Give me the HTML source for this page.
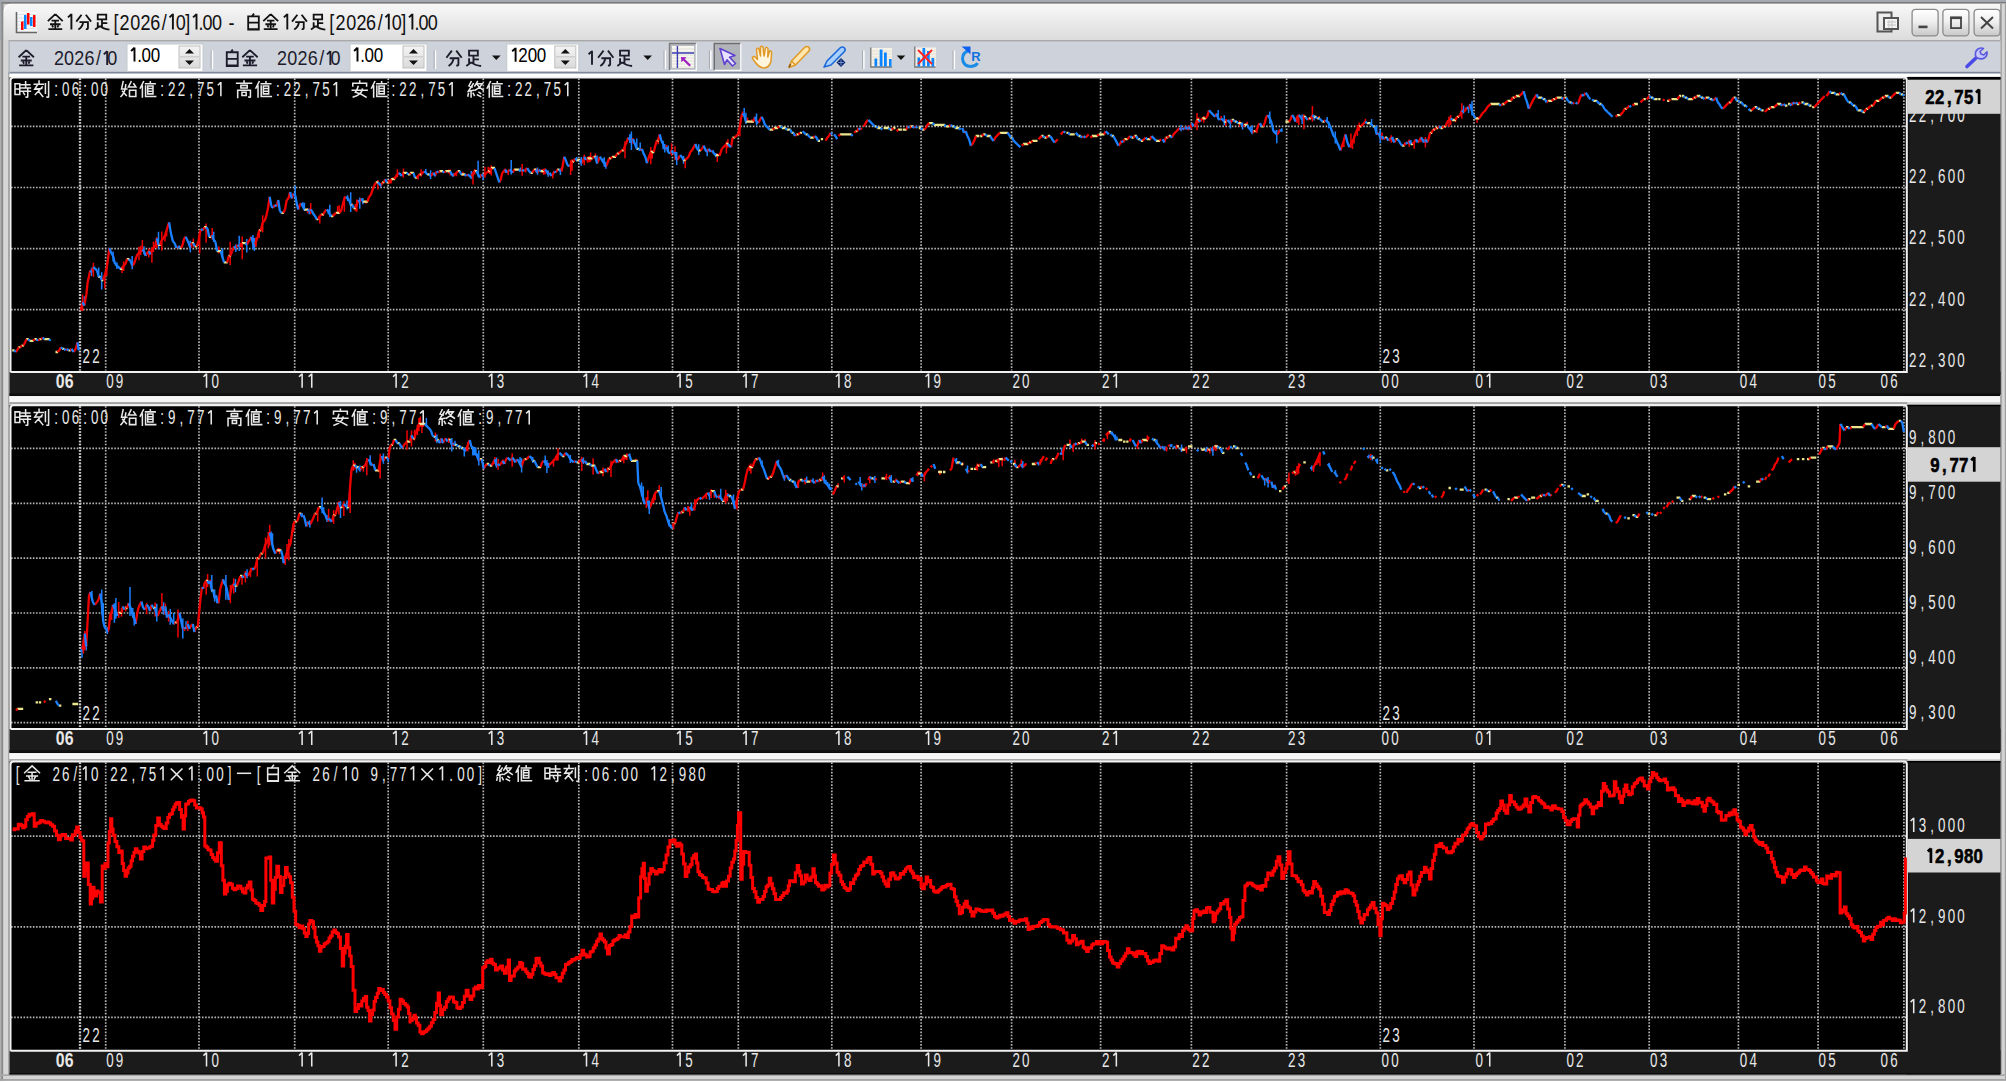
<!DOCTYPE html><html><head><meta charset="utf-8"><style>html,body{margin:0;padding:0;background:#c9c9c9;overflow:hidden}svg{display:block}</style></head><body>
<svg width="2006" height="1084" viewBox="0 0 2006 1084">
<defs>
<linearGradient id="tb" x1="0" y1="0" x2="0" y2="1"><stop offset="0" stop-color="#f8f8f8"/><stop offset="1" stop-color="#dcdcdc"/></linearGradient>
<linearGradient id="btn" x1="0" y1="0" x2="0" y2="1"><stop offset="0" stop-color="#ffffff"/><stop offset="0.45" stop-color="#f0f0f0"/><stop offset="1" stop-color="#c8c8c8"/></linearGradient>
<linearGradient id="spin" x1="0" y1="0" x2="0" y2="1"><stop offset="0" stop-color="#f4f4f4"/><stop offset="1" stop-color="#dadada"/></linearGradient>
<path id="g37329" d="M8 1L1 7.5M8 1L15 7.5M4.5 7H11.5M3 10.5H13M8 7V15M5 11.5L6 13.5M11 11.5L10 13.5M1.5 15H14.5"/>
<path id="g20998" d="M6 1.5L1 8M10 1.5L15 8M4 8.5H12V14Q12 15.5 10 15M7.5 8.5Q7 13 3 15.5"/>
<path id="g36275" d="M4 1.5H12V6H4ZM8 6V13.5M8 9.5H13M4 8.5V13.5M1.5 15.5Q5 13 6 12M6 12Q9 15 15 15.5"/>
<path id="g30333" d="M8.5 0.5L6.5 3M3 3H13V15.5H3ZM3 9H13M3 15H13"/>
<path id="g26178" d="M1 3H5.5V13H1ZM1 8H5.5M7 4H15M11 1V7M6.5 7H15.5M7 10H15.5M13 8V15Q13 16 11.5 15.5M9 11.5L10 13"/>
<path id="g21051" d="M1 3.5H9.5M5.5 0.5V3.5M4 4L1.5 8L8 7.5M8.5 6L2 13M5 10L9 15M11.5 3V12M14.5 1V15Q14.5 16 13 15.5"/>
<path id="g22987" d="M3 1L1.5 8H6.5M5.5 4Q5 11 1 15M2.5 10L6 14M10.5 1L8 6H15L13 3M9 9H15V15H9Z"/>
<path id="g20516" d="M4 1L1 7M3 5V15.5M6 3H15M10.5 1V3M8 5H13V12.5H8ZM8 7.5H13M8 10H13M6 5V15H15.5"/>
<path id="g39640" d="M8 0.5V2M1 2.5H15M5 4.5H11V7H5ZM2 9V16M2 9H14V15.5Q14 16 12.5 15.5M6 11H10V14H6Z"/>
<path id="g23433" d="M8 0.5V2.5M1.5 5V2.5H14.5V5M6.5 5.5Q5.5 9 4 11Q9 12 14 15.5M10.5 8Q10 13 2 15.5M1 9H15"/>
<path id="g32066" d="M4 1L2 5L5 6M6 3L1.5 10L6.5 9M4 10V15.5M1.5 12L1 14.5M6 12L7 14M10 1L7.5 5M9.5 3H14.5Q12 7 8 9M10 4Q12 7 15.5 9M11.5 11L13 12M10 13.5L13 15"/>
<path id="g215" d="M3 4L13 14M13 4L3 14"/>
<path id="g65293" d="M2 8H14"/>
</defs>
<rect x="0" y="0" width="2006" height="1084" fill="#d4d4d4"/>
<rect x="0" y="0" width="2006" height="1.8" fill="#a6aab2"/>
<rect x="0" y="1.8" width="2006" height="2" fill="#7c7c7c"/>
<rect x="0" y="0" width="1.2" height="40" fill="#a2a6ae"/>
<rect x="0" y="40" width="1.2" height="1044" fill="#b0b0b0"/>
<rect x="1.2" y="1.8" width="2.2" height="1080" fill="#8a8a8a"/>
<path d="M3.6 12 Q3.6 3.8 12 3.8 H2006 V40 H3.6Z" fill="url(#tb)"/>
<path d="M4.5 11 Q5 5 11 4.6" stroke="#ffffff" stroke-width="1.5" fill="none"/>
<rect x="3.4" y="40" width="4.8" height="1040" fill="#d6d6d6"/>
<rect x="8.0" y="73" width="1.4" height="1003" fill="#a8a8a8"/>
<rect x="2000" y="3.8" width="2.2" height="1076" fill="#a8a8a8"/>
<rect x="2002.2" y="3.8" width="2.6" height="1076" fill="#d4d4d4"/>
<rect x="2004.8" y="3.8" width="1.2" height="1076" fill="#a0a0a0"/>
<rect x="0" y="1074.3" width="2006" height="1.8" fill="#a8a8a8"/>
<rect x="3.4" y="1076.1" width="2001.4" height="3" fill="#d4d4d4"/>
<rect x="0" y="1079.1" width="2006" height="1.8" fill="#a0a0a0"/>
<rect x="0" y="1080.9" width="2006" height="3.1" fill="#ffffff"/>
<g>
<rect x="16" y="12" width="21" height="21" fill="#ffffff" opacity="0.6"/>
<path d="M17.5 14.5H36.5M17.5 18H36.5M17.5 21.5H36.5M17.5 25H36.5M17.5 28.5H36.5" stroke="#d8e0e8" stroke-width="1"/>
<path d="M16.5 12V32.5H37" stroke="#666" stroke-width="1.6" fill="none"/>
<path d="M21 22L23.5 21V30L21 30Z" fill="#f00"/>
<path d="M24 15H26.5V29H24Z" fill="#0a84ff"/>
<path d="M27 13H29.5V24.5H27Z" fill="#f00"/>
<path d="M30 17H32.5V26H30Z" fill="#0a84ff"/>
<path d="M33 15H35.5V27H33Z" fill="#f00"/>
</g>
<text transform="translate(0 29.60) scale(0.8 1)" x="144.88 155.62 169.06 181.88 193.94 205.38 226.00 234.81 251.25 259.38 271.12 289.50 414.75 425.50 438.94 451.75 463.81 475.25 495.88 504.69 521.12 529.25 541.00" text-anchor="middle" font-family="Liberation Sans" font-size="22.5" fill="#111111">[2026/0].00-[2026/0].00</text>
<g fill="none" stroke="#111111" stroke-width="1.7"><use href="#g37329" transform="translate(46.80 13.10) scale(1.062)"/><use href="#g20998" transform="translate(75.20 13.10) scale(1.062)"/><use href="#g36275" transform="translate(93.50 13.10) scale(1.062)"/><use href="#g30333" transform="translate(245.00 13.10) scale(1.062)"/><use href="#g37329" transform="translate(262.20 13.10) scale(1.062)"/><use href="#g20998" transform="translate(291.00 13.10) scale(1.062)"/><use href="#g36275" transform="translate(309.40 13.10) scale(1.062)"/></g>
<path d="M71.40 13.85V29.60M71.40 14.15L68.00 17.35" stroke="#111111" stroke-width="1.9" fill="none"/>
<path d="M172.90 13.85V29.60M172.90 14.15L169.50 17.35" stroke="#111111" stroke-width="1.9" fill="none"/>
<path d="M196.50 13.85V29.60M196.50 14.15L193.10 17.35" stroke="#111111" stroke-width="1.9" fill="none"/>
<path d="M287.30 13.85V29.60M287.30 14.15L283.90 17.35" stroke="#111111" stroke-width="1.9" fill="none"/>
<path d="M388.80 13.85V29.60M388.80 14.15L385.40 17.35" stroke="#111111" stroke-width="1.9" fill="none"/>
<path d="M412.40 13.85V29.60M412.40 14.15L409.00 17.35" stroke="#111111" stroke-width="1.9" fill="none"/>
<g fill="none" stroke="#555" stroke-width="2">
<rect x="1877.5" y="12.5" width="14" height="19"/>
</g>
<rect x="1884" y="18" width="14" height="11" fill="#f4f4f4" stroke="#555" stroke-width="2"/>
<path d="M1887 22H1896M1887 25H1896M1889 20V28M1892 20V28" stroke="#bbb" stroke-width="0.8"/>
<rect x="1912.1" y="9.3" width="26" height="26.5" rx="3.5" fill="url(#btn)" stroke="#8a8a8a" stroke-width="1.3"/>
<rect x="1942.9" y="9.3" width="26" height="26.5" rx="3.5" fill="url(#btn)" stroke="#8a8a8a" stroke-width="1.3"/>
<rect x="1974.1" y="9.3" width="26" height="26.5" rx="3.5" fill="url(#btn)" stroke="#8a8a8a" stroke-width="1.3"/>
<rect x="1918.5" y="25.6" width="9" height="2.6" fill="#444"/>
<rect x="1951" y="17.7" width="10" height="10.4" fill="none" stroke="#444" stroke-width="1.8"/><rect x="1950.2" y="16.5" width="11.6" height="2.6" fill="#444"/>
<path d="M1981 17L1993 28.5M1993 17L1981 28.5" stroke="#444" stroke-width="2"/>
<rect x="8.5" y="40" width="1992" height="33.5" fill="#ced2da"/>
<rect x="8.5" y="40" width="1992" height="1.4" fill="#a9a9a9"/>
<rect x="8.5" y="71.8" width="1992" height="2" fill="#7c8898"/>
<rect x="8.5" y="40" width="1.3" height="33" fill="#b0b4ba"/>
<g fill="none" stroke="#1c1c2c" stroke-width="1.7"><use href="#g37329" transform="translate(17.50 49.00) scale(1.094)"/></g>
<text transform="translate(0 64.90) scale(0.9 1)" x="65.44 76.78 88.11 99.44 109.56 124.67" text-anchor="middle" font-family="Liberation Sans" font-size="20" fill="#1c1c2c">2026/0</text>
<path d="M107.20 50.90V64.90M107.20 51.20L103.80 54.40" stroke="#1c1c2c" stroke-width="1.9" fill="none"/>
<rect x="127" y="44" width="76" height="27.5" fill="#fff" stroke="#c4c8ce" stroke-width="1"/>
<rect x="179" y="46" width="21" height="22" fill="url(#spin)" stroke="#c0c0c0" stroke-width="1"/>
<path d="M180 56.8H199" stroke="#c8c8c8" stroke-width="1.2"/>
<path d="M185 53.5L189.5 49L194 53.5Z" fill="#111"/>
<path d="M185 60.5L189.5 65L194 60.5Z" fill="#111"/>
<text transform="translate(0 61.50) scale(0.85 1)" x="164.12 172.00 182.82" text-anchor="middle" font-family="Liberation Sans" font-size="20" fill="#000">.00</text>
<path d="M134.50 47.50V61.50M134.50 47.80L131.10 51.00" stroke="#000" stroke-width="1.9" fill="none"/>
<rect x="210.6" y="50.5" width="1.2" height="18.5" fill="#a8acb4"/><rect x="211.79999999999998" y="50.5" width="1.4" height="18.5" fill="#ffffff"/>
<g fill="none" stroke="#1c1c2c" stroke-width="1.7"><use href="#g30333" transform="translate(223.50 49.00) scale(1.094)"/><use href="#g37329" transform="translate(241.20 49.00) scale(1.094)"/></g>
<text transform="translate(0 64.90) scale(0.9 1)" x="313.44 324.78 336.11 347.44 357.56 372.67" text-anchor="middle" font-family="Liberation Sans" font-size="20" fill="#1c1c2c">2026/0</text>
<path d="M330.40 50.90V64.90M330.40 51.20L327.00 54.40" stroke="#1c1c2c" stroke-width="1.9" fill="none"/>
<rect x="350" y="44" width="77" height="27.5" fill="#fff" stroke="#c4c8ce" stroke-width="1"/>
<rect x="403" y="46" width="21" height="22" fill="url(#spin)" stroke="#c0c0c0" stroke-width="1"/>
<path d="M404 56.8H423" stroke="#c8c8c8" stroke-width="1.2"/>
<path d="M409 53.5L413.5 49L418 53.5Z" fill="#111"/>
<path d="M409 60.5L413.5 65L418 60.5Z" fill="#111"/>
<text transform="translate(0 61.50) scale(0.85 1)" x="426.47 434.35 445.18" text-anchor="middle" font-family="Liberation Sans" font-size="20" fill="#000">.00</text>
<path d="M357.50 47.50V61.50M357.50 47.80L354.10 51.00" stroke="#000" stroke-width="1.9" fill="none"/>
<rect x="433.6" y="50.5" width="1.2" height="18.5" fill="#a8acb4"/><rect x="434.8" y="50.5" width="1.4" height="18.5" fill="#ffffff"/>
<g fill="none" stroke="#1c1c2c" stroke-width="1.7"><use href="#g20998" transform="translate(445.30 49.00) scale(1.094)"/><use href="#g36275" transform="translate(464.70 49.00) scale(1.094)"/></g>
<path d="M492 55.5H500.6L496.3 60Z" fill="#111"/>
<rect x="506.8" y="44" width="71.99999999999994" height="27.5" fill="#fff" stroke="#c4c8ce" stroke-width="1"/>
<rect x="554.8" y="46" width="21" height="22" fill="url(#spin)" stroke="#c0c0c0" stroke-width="1"/>
<path d="M555.8 56.8H574.8" stroke="#c8c8c8" stroke-width="1.2"/>
<path d="M560.8 53.5L565.3 49L569.8 53.5Z" fill="#111"/>
<path d="M560.8 60.5L565.3 65L569.8 60.5Z" fill="#111"/>
<text transform="translate(0 61.80) scale(0.85 1)" x="615.29 626.35 637.06" text-anchor="middle" font-family="Liberation Sans" font-size="20" fill="#000">200</text>
<path d="M515.60 47.80V61.80M515.60 48.10L512.20 51.30" stroke="#000" stroke-width="1.9" fill="none"/>
<g fill="none" stroke="#1c1c2c" stroke-width="1.7"><use href="#g20998" transform="translate(597.00 49.00) scale(1.094)"/><use href="#g36275" transform="translate(615.70 49.00) scale(1.094)"/></g>
<path d="M592.00 50.80V64.80M592.00 51.10L588.60 54.30" stroke="#1c1c2c" stroke-width="1.9" fill="none"/>
<path d="M643.4 55.5H652.0L647.6999999999999 60Z" fill="#111"/>
<rect x="663.5" y="50.5" width="1.2" height="18.5" fill="#a8acb4"/><rect x="664.7" y="50.5" width="1.4" height="18.5" fill="#ffffff"/>
<rect x="669" y="43" width="27.5" height="27.5" fill="#b8bcc2"/>
<path d="M669.5 70V43.5H696" stroke="#7a7a7a" stroke-width="1.4" fill="none"/><path d="M670 70.3H696.3V43.5" stroke="#ffffff" stroke-width="1.2" fill="none"/>
<rect x="672" y="46" width="22" height="22" fill="#f8f8f0"/>
<path d="M672 49H694M672 52H694M672 55H694M672 58H694M672 61H694M672 64H694M672 67H694" stroke="#d8d8d0" stroke-width="0.8"/>
<path d="M677.4 46V68M672 53H694" stroke="#3c3cb4" stroke-width="1.4"/>
<path d="M681 57L686.5 57.2L684.8 58.9L691 65L689.4 66.6L683.2 60.5L681.4 62.3Z" fill="#a020c0"/>
<rect x="708.9" y="50.5" width="1.2" height="18.5" fill="#a8acb4"/><rect x="710.1" y="50.5" width="1.4" height="18.5" fill="#ffffff"/>
<rect x="713.8" y="43" width="27" height="27.5" fill="#b0b4b8"/>
<path d="M714.3 70V43.5H740.5" stroke="#6e6e6e" stroke-width="1.4" fill="none"/><path d="M714.5 70.3H740.8V43.5" stroke="#ffffff" stroke-width="1.2" fill="none"/>
<path d="M720 48.5L735 55.5L729.5 57.2L735.5 63.5L732.5 66L727 59.8L724.5 64.5Z" fill="#e8e4ff" stroke="#6040d0" stroke-width="1.6" stroke-linejoin="round"/>
<path d="M753 59Q751.5 57.5 753.5 56.5Q755.5 56.5 757.5 59.5L756.5 49.5Q757 47.5 758.8 48.5L760.5 56L760.5 47Q761.5 45.5 763 47L764 56L765.5 48Q767 46.5 768 48.5L767.8 57L769.5 51Q771.5 50.5 771.6 52.5L771 61Q769.8 67.5 764 68Q758.5 68 753 59Z" fill="#fff4dc" stroke="#e09a28" stroke-width="1.5" stroke-linejoin="round"/>
<path d="M789 67.5L791.5 61L804.5 47.5Q807 45.5 809 47.5Q810.5 49.5 808.5 51.5L795.5 65Z" fill="#fde6b0" stroke="#e09a28" stroke-width="1.6" stroke-linejoin="round"/>
<path d="M791.5 61L795.5 65" stroke="#e09a28" stroke-width="1.4"/><path d="M789 67.5L790.5 64" stroke="#8a5a18" stroke-width="1.6"/>
<path d="M824 67L827 61L840 48Q842.5 46 844.5 48Q846 50 844 52L831 65Z" fill="#a8d0ff" stroke="#1c6ad8" stroke-width="1.6" stroke-linejoin="round"/>
<path d="M836.5 62.5L841 58L845.5 62.5L841 67Z" fill="#0a2a70"/><path d="M838 62.5H844M841 59.5V65.5" stroke="#8aa0d0" stroke-width="0.8"/>
<rect x="862" y="50.5" width="1.2" height="18.5" fill="#a8acb4"/><rect x="863.2" y="50.5" width="1.4" height="18.5" fill="#ffffff"/>
<rect x="871" y="48" width="21" height="19" fill="#f6f2ea"/>
<path d="M872 51H892M872 54H892M872 57H892M872 60H892M872 63H892" stroke="#e4dccc" stroke-width="0.8"/>
<path d="M870.8 47.5V67H892" stroke="#777" stroke-width="1.3" fill="none"/>
<path d="M874.5 58.5H877.2V66.5H874.5ZM879.7 49.5H882.5V66.5H879.7ZM884 52.5H886.8V66.5H884ZM889 59H891.6V66.5H889Z" fill="#0a84ff"/>
<path d="M896.7 55.5H905.3000000000001L901.0 60Z" fill="#111"/>
<rect x="915" y="47.5" width="21" height="19.5" fill="#f6f2ea"/>
<path d="M916 51H936M916 54H936M916 57H936M916 60H936M916 63H936" stroke="#e4dccc" stroke-width="0.8"/>
<path d="M914.8 46.5V67H935.5" stroke="#777" stroke-width="1.3" fill="none"/>
<path d="M917.5 57.5H920.2V66.5H917.5ZM922.5 48H925.2V66.5H922.5ZM927 51H929.7V66.5H927ZM931.5 58H934.2V66.5H931.5Z" fill="#0a84ff"/>
<path d="M918.5 50.5L931.5 63.5M931.5 50.5L918.5 63.5" stroke="#ff2020" stroke-width="1.8" stroke-linecap="round"/>
<rect x="952.5" y="50.5" width="1.2" height="18.5" fill="#a8acb4"/><rect x="953.7" y="50.5" width="1.4" height="18.5" fill="#ffffff"/>
<path d="M969 50.5Q962.5 52.5 962.5 59Q963.5 66.5 971 66.5Q976 66 977.5 63" fill="none" stroke="#1a8ce8" stroke-width="3"/>
<path d="M961.5 46.5H970.5V54.5L968 52Z" fill="#1060f0"/>
<text x="976" y="60.5" font-family="Liberation Sans" font-weight="bold" font-size="13" fill="#1070e0" text-anchor="middle">R</text>
<path d="M1967 66.5L1977.5 56.5" stroke="#4a4ae8" stroke-width="3.6" stroke-linecap="round"/>
<path d="M1976 57Q1974 52 1978 49Q1981 47.2 1983.5 48.5L1980 51.5L1981 54L1983.8 55L1987 51.8Q1987.5 55.5 1985 57.5Q1981.5 60 1977.5 58Z" fill="#c8c8ff" stroke="#5a5ae0" stroke-width="1.6" stroke-linejoin="round"/>
<rect x="9.4" y="73.6" width="1991" height="3.8" fill="#ffffff"/>
<rect x="9.4" y="394.3" width="1990.6" height="1.8" fill="#0c0c0c"/>
<rect x="9.4" y="396.1" width="1990.6" height="6" fill="#f6f6f6"/>
<rect x="9.4" y="402.1" width="1898" height="1.9" fill="#a4a4a4"/>
<rect x="9.4" y="751.3" width="1990.6" height="1.8" fill="#0c0c0c"/>
<rect x="9.4" y="753.0999999999999" width="1990.6" height="6" fill="#f6f6f6"/>
<rect x="9.4" y="759.0999999999999" width="1898" height="1.9" fill="#a4a4a4"/>
<rect x="9.5" y="77.4" width="1898.0" height="294.1" fill="#000"/>
<rect x="1907.5" y="77.4" width="93.0" height="317.20000000000005" fill="#1b1b1b"/>
<rect x="1907.5" y="76.9" width="93.0" height="2" fill="#000"/>
<rect x="1907.5" y="77.4" width="1.6" height="317.20000000000005" fill="#0c0c0c"/>
<rect x="9.5" y="371.5" width="1991.0" height="23.100000000000023" fill="#1b1b1b"/>
<path d="M80 78.4V370.5 M105.7 78.4V370.5 M199 78.4V370.5 M294.7 78.4V370.5 M388.2 78.4V370.5 M483.3 78.4V370.5 M578.8 78.4V370.5 M672.5 78.4V370.5 M738.3 78.4V370.5 M831.8 78.4V370.5 M921.1 78.4V370.5 M1011.6 78.4V370.5 M1100.6 78.4V370.5 M1191.4 78.4V370.5 M1286.6 78.4V370.5 M1380.3 78.4V370.5 M1474 78.4V370.5 M1564.9 78.4V370.5 M1649.2 78.4V370.5 M1738.4 78.4V370.5 M1818.1 78.4V370.5 M1903.9 78.4V370.5 M11 126.4H1906 M11 187.5H1906 M11 248.6H1906 M11 309.7H1906" stroke="#b4b4b4" stroke-width="1.7" stroke-dasharray="1.6 1.53" fill="none"/>
<path d="M80 78.4V370.5" stroke="#c8c8c8" stroke-width="2.4" stroke-dasharray="1.6 1.53" fill="none"/>
<path d="M10.5 372.0V80.4Q10.5 77.4 13.5 77.4H1904Q1906.8 77.4 1906.8 80.4V372.0H10.5" stroke="#f2f2f2" stroke-width="2" fill="none"/>
<rect x="9.4" y="393.40000000000003" width="1990.6" height="1.4" fill="#0c0c0c"/>
<text transform="translate(0 387.80) scale(0.78 1)" x="77.18 88.72" text-anchor="middle" font-family="Liberation Sans" font-size="20.3" font-weight="bold" fill="#e8e8e8">06</text>
<text transform="translate(0 387.80) scale(0.66 1)" x="166.54 181.14" text-anchor="middle" font-family="Liberation Sans" font-size="20.3" fill="#e8e8e8">09</text>
<text transform="translate(0 387.80) scale(0.66 1)" x="326.14" text-anchor="middle" font-family="Liberation Sans" font-size="20.3" fill="#e8e8e8">0</text>
<path d="M206.52 373.59V387.80M206.52 373.89L203.42 376.79" stroke="#e8e8e8" stroke-width="1.55" fill="none"/>
<path d="M302.12 373.59V387.80M302.12 373.89L299.02 376.79" stroke="#e8e8e8" stroke-width="1.55" fill="none"/>
<path d="M311.75 373.59V387.80M311.75 373.89L308.65 376.79" stroke="#e8e8e8" stroke-width="1.55" fill="none"/>
<text transform="translate(0 387.80) scale(0.66 1)" x="613.42" text-anchor="middle" font-family="Liberation Sans" font-size="20.3" fill="#e8e8e8">2</text>
<path d="M396.12 373.59V387.80M396.12 373.89L393.02 376.79" stroke="#e8e8e8" stroke-width="1.55" fill="none"/>
<text transform="translate(0 387.80) scale(0.66 1)" x="758.42" text-anchor="middle" font-family="Liberation Sans" font-size="20.3" fill="#e8e8e8">3</text>
<path d="M491.82 373.59V387.80M491.82 373.89L488.72 376.79" stroke="#e8e8e8" stroke-width="1.55" fill="none"/>
<text transform="translate(0 387.80) scale(0.66 1)" x="901.90" text-anchor="middle" font-family="Liberation Sans" font-size="20.3" fill="#e8e8e8">4</text>
<path d="M586.52 373.59V387.80M586.52 373.89L583.42 376.79" stroke="#e8e8e8" stroke-width="1.55" fill="none"/>
<text transform="translate(0 387.80) scale(0.66 1)" x="1043.72" text-anchor="middle" font-family="Liberation Sans" font-size="20.3" fill="#e8e8e8">5</text>
<path d="M680.12 373.59V387.80M680.12 373.89L677.02 376.79" stroke="#e8e8e8" stroke-width="1.55" fill="none"/>
<text transform="translate(0 387.80) scale(0.66 1)" x="1143.72" text-anchor="middle" font-family="Liberation Sans" font-size="20.3" fill="#e8e8e8">7</text>
<path d="M746.12 373.59V387.80M746.12 373.89L743.02 376.79" stroke="#e8e8e8" stroke-width="1.55" fill="none"/>
<text transform="translate(0 387.80) scale(0.66 1)" x="1284.32" text-anchor="middle" font-family="Liberation Sans" font-size="20.3" fill="#e8e8e8">8</text>
<path d="M838.92 373.59V387.80M838.92 373.89L835.82 376.79" stroke="#e8e8e8" stroke-width="1.55" fill="none"/>
<text transform="translate(0 387.80) scale(0.66 1)" x="1420.23" text-anchor="middle" font-family="Liberation Sans" font-size="20.3" fill="#e8e8e8">9</text>
<path d="M928.62 373.59V387.80M928.62 373.89L925.52 376.79" stroke="#e8e8e8" stroke-width="1.55" fill="none"/>
<text transform="translate(0 387.80) scale(0.66 1)" x="1539.72 1554.32" text-anchor="middle" font-family="Liberation Sans" font-size="20.3" fill="#e8e8e8">20</text>
<text transform="translate(0 387.80) scale(0.66 1)" x="1675.48" text-anchor="middle" font-family="Liberation Sans" font-size="20.3" fill="#e8e8e8">2</text>
<path d="M1116.35 373.59V387.80M1116.35 373.89L1113.25 376.79" stroke="#e8e8e8" stroke-width="1.55" fill="none"/>
<text transform="translate(0 387.80) scale(0.66 1)" x="1812.15 1826.75" text-anchor="middle" font-family="Liberation Sans" font-size="20.3" fill="#e8e8e8">22</text>
<text transform="translate(0 387.80) scale(0.66 1)" x="1957.30 1971.90" text-anchor="middle" font-family="Liberation Sans" font-size="20.3" fill="#e8e8e8">23</text>
<text transform="translate(0 387.80) scale(0.66 1)" x="2098.82 2113.42" text-anchor="middle" font-family="Liberation Sans" font-size="20.3" fill="#e8e8e8">00</text>
<text transform="translate(0 387.80) scale(0.66 1)" x="2241.24" text-anchor="middle" font-family="Liberation Sans" font-size="20.3" fill="#e8e8e8">0</text>
<path d="M1489.75 373.59V387.80M1489.75 373.89L1486.65 376.79" stroke="#e8e8e8" stroke-width="1.55" fill="none"/>
<text transform="translate(0 387.80) scale(0.66 1)" x="2378.97 2393.57" text-anchor="middle" font-family="Liberation Sans" font-size="20.3" fill="#e8e8e8">02</text>
<text transform="translate(0 387.80) scale(0.66 1)" x="2505.78 2520.38" text-anchor="middle" font-family="Liberation Sans" font-size="20.3" fill="#e8e8e8">03</text>
<text transform="translate(0 387.80) scale(0.66 1)" x="2641.69 2656.29" text-anchor="middle" font-family="Liberation Sans" font-size="20.3" fill="#e8e8e8">04</text>
<text transform="translate(0 387.80) scale(0.66 1)" x="2760.94 2775.54" text-anchor="middle" font-family="Liberation Sans" font-size="20.3" fill="#e8e8e8">05</text>
<text transform="translate(0 387.80) scale(0.66 1)" x="2854.88 2869.48" text-anchor="middle" font-family="Liberation Sans" font-size="20.3" fill="#e8e8e8">06</text>
<text transform="translate(0 122.20) scale(0.66 1)" x="2898.21 2912.81 2927.41 2942.01 2956.61 2971.21" text-anchor="middle" font-family="Liberation Sans" font-size="20.3" fill="#e8e8e8">22,700</text>
<text transform="translate(0 183.30) scale(0.66 1)" x="2898.21 2912.81 2927.41 2942.01 2956.61 2971.21" text-anchor="middle" font-family="Liberation Sans" font-size="20.3" fill="#e8e8e8">22,600</text>
<text transform="translate(0 244.40) scale(0.66 1)" x="2898.21 2912.81 2927.41 2942.01 2956.61 2971.21" text-anchor="middle" font-family="Liberation Sans" font-size="20.3" fill="#e8e8e8">22,500</text>
<text transform="translate(0 305.50) scale(0.66 1)" x="2898.21 2912.81 2927.41 2942.01 2956.61 2971.21" text-anchor="middle" font-family="Liberation Sans" font-size="20.3" fill="#e8e8e8">22,400</text>
<text transform="translate(0 366.60) scale(0.66 1)" x="2898.21 2912.81 2927.41 2942.01 2956.61 2971.21" text-anchor="middle" font-family="Liberation Sans" font-size="20.3" fill="#e8e8e8">22,300</text>
<text transform="translate(0 363.20) scale(0.66 1)" x="130.78 145.38" text-anchor="middle" font-family="Liberation Sans" font-size="20.3" fill="#e8e8e8">22</text>
<text transform="translate(0 363.20) scale(0.66 1)" x="2100.48 2115.08" text-anchor="middle" font-family="Liberation Sans" font-size="20.3" fill="#e8e8e8">23</text>
<rect x="9.5" y="405.2" width="1898.0" height="323.40000000000003" fill="#000"/>
<rect x="1907.5" y="405.2" width="93.0" height="346.40000000000003" fill="#1b1b1b"/>
<rect x="1907.5" y="404.7" width="93.0" height="1.6" fill="#000"/>
<rect x="1907.5" y="405.2" width="1.6" height="346.40000000000003" fill="#0c0c0c"/>
<rect x="9.5" y="728.6" width="1991.0" height="23.0" fill="#1b1b1b"/>
<path d="M80 406.2V727.6 M105.7 406.2V727.6 M199 406.2V727.6 M294.7 406.2V727.6 M388.2 406.2V727.6 M483.3 406.2V727.6 M578.8 406.2V727.6 M672.5 406.2V727.6 M738.3 406.2V727.6 M831.8 406.2V727.6 M921.1 406.2V727.6 M1011.6 406.2V727.6 M1100.6 406.2V727.6 M1191.4 406.2V727.6 M1286.6 406.2V727.6 M1380.3 406.2V727.6 M1474 406.2V727.6 M1564.9 406.2V727.6 M1649.2 406.2V727.6 M1738.4 406.2V727.6 M1818.1 406.2V727.6 M1903.9 406.2V727.6 M11 448.4H1906 M11 503.3H1906 M11 558.1H1906 M11 613H1906 M11 667.8H1906 M11 722.7H1906" stroke="#b4b4b4" stroke-width="1.7" stroke-dasharray="1.6 1.53" fill="none"/>
<path d="M80 406.2V727.6" stroke="#c8c8c8" stroke-width="2.4" stroke-dasharray="1.6 1.53" fill="none"/>
<path d="M10.5 729.1V408.2Q10.5 405.2 13.5 405.2H1904Q1906.8 405.2 1906.8 408.2V729.1H10.5" stroke="#f2f2f2" stroke-width="2" fill="none"/>
<rect x="9.4" y="750.4" width="1990.6" height="1.4" fill="#0c0c0c"/>
<text transform="translate(0 744.90) scale(0.78 1)" x="77.18 88.72" text-anchor="middle" font-family="Liberation Sans" font-size="20.3" font-weight="bold" fill="#e8e8e8">06</text>
<text transform="translate(0 744.90) scale(0.66 1)" x="166.54 181.14" text-anchor="middle" font-family="Liberation Sans" font-size="20.3" fill="#e8e8e8">09</text>
<text transform="translate(0 744.90) scale(0.66 1)" x="326.14" text-anchor="middle" font-family="Liberation Sans" font-size="20.3" fill="#e8e8e8">0</text>
<path d="M206.52 730.69V744.90M206.52 730.99L203.42 733.89" stroke="#e8e8e8" stroke-width="1.55" fill="none"/>
<path d="M302.12 730.69V744.90M302.12 730.99L299.02 733.89" stroke="#e8e8e8" stroke-width="1.55" fill="none"/>
<path d="M311.75 730.69V744.90M311.75 730.99L308.65 733.89" stroke="#e8e8e8" stroke-width="1.55" fill="none"/>
<text transform="translate(0 744.90) scale(0.66 1)" x="613.42" text-anchor="middle" font-family="Liberation Sans" font-size="20.3" fill="#e8e8e8">2</text>
<path d="M396.12 730.69V744.90M396.12 730.99L393.02 733.89" stroke="#e8e8e8" stroke-width="1.55" fill="none"/>
<text transform="translate(0 744.90) scale(0.66 1)" x="758.42" text-anchor="middle" font-family="Liberation Sans" font-size="20.3" fill="#e8e8e8">3</text>
<path d="M491.82 730.69V744.90M491.82 730.99L488.72 733.89" stroke="#e8e8e8" stroke-width="1.55" fill="none"/>
<text transform="translate(0 744.90) scale(0.66 1)" x="901.90" text-anchor="middle" font-family="Liberation Sans" font-size="20.3" fill="#e8e8e8">4</text>
<path d="M586.52 730.69V744.90M586.52 730.99L583.42 733.89" stroke="#e8e8e8" stroke-width="1.55" fill="none"/>
<text transform="translate(0 744.90) scale(0.66 1)" x="1043.72" text-anchor="middle" font-family="Liberation Sans" font-size="20.3" fill="#e8e8e8">5</text>
<path d="M680.12 730.69V744.90M680.12 730.99L677.02 733.89" stroke="#e8e8e8" stroke-width="1.55" fill="none"/>
<text transform="translate(0 744.90) scale(0.66 1)" x="1143.72" text-anchor="middle" font-family="Liberation Sans" font-size="20.3" fill="#e8e8e8">7</text>
<path d="M746.12 730.69V744.90M746.12 730.99L743.02 733.89" stroke="#e8e8e8" stroke-width="1.55" fill="none"/>
<text transform="translate(0 744.90) scale(0.66 1)" x="1284.32" text-anchor="middle" font-family="Liberation Sans" font-size="20.3" fill="#e8e8e8">8</text>
<path d="M838.92 730.69V744.90M838.92 730.99L835.82 733.89" stroke="#e8e8e8" stroke-width="1.55" fill="none"/>
<text transform="translate(0 744.90) scale(0.66 1)" x="1420.23" text-anchor="middle" font-family="Liberation Sans" font-size="20.3" fill="#e8e8e8">9</text>
<path d="M928.62 730.69V744.90M928.62 730.99L925.52 733.89" stroke="#e8e8e8" stroke-width="1.55" fill="none"/>
<text transform="translate(0 744.90) scale(0.66 1)" x="1539.72 1554.32" text-anchor="middle" font-family="Liberation Sans" font-size="20.3" fill="#e8e8e8">20</text>
<text transform="translate(0 744.90) scale(0.66 1)" x="1675.48" text-anchor="middle" font-family="Liberation Sans" font-size="20.3" fill="#e8e8e8">2</text>
<path d="M1116.35 730.69V744.90M1116.35 730.99L1113.25 733.89" stroke="#e8e8e8" stroke-width="1.55" fill="none"/>
<text transform="translate(0 744.90) scale(0.66 1)" x="1812.15 1826.75" text-anchor="middle" font-family="Liberation Sans" font-size="20.3" fill="#e8e8e8">22</text>
<text transform="translate(0 744.90) scale(0.66 1)" x="1957.30 1971.90" text-anchor="middle" font-family="Liberation Sans" font-size="20.3" fill="#e8e8e8">23</text>
<text transform="translate(0 744.90) scale(0.66 1)" x="2098.82 2113.42" text-anchor="middle" font-family="Liberation Sans" font-size="20.3" fill="#e8e8e8">00</text>
<text transform="translate(0 744.90) scale(0.66 1)" x="2241.24" text-anchor="middle" font-family="Liberation Sans" font-size="20.3" fill="#e8e8e8">0</text>
<path d="M1489.75 730.69V744.90M1489.75 730.99L1486.65 733.89" stroke="#e8e8e8" stroke-width="1.55" fill="none"/>
<text transform="translate(0 744.90) scale(0.66 1)" x="2378.97 2393.57" text-anchor="middle" font-family="Liberation Sans" font-size="20.3" fill="#e8e8e8">02</text>
<text transform="translate(0 744.90) scale(0.66 1)" x="2505.78 2520.38" text-anchor="middle" font-family="Liberation Sans" font-size="20.3" fill="#e8e8e8">03</text>
<text transform="translate(0 744.90) scale(0.66 1)" x="2641.69 2656.29" text-anchor="middle" font-family="Liberation Sans" font-size="20.3" fill="#e8e8e8">04</text>
<text transform="translate(0 744.90) scale(0.66 1)" x="2760.94 2775.54" text-anchor="middle" font-family="Liberation Sans" font-size="20.3" fill="#e8e8e8">05</text>
<text transform="translate(0 744.90) scale(0.66 1)" x="2854.88 2869.48" text-anchor="middle" font-family="Liberation Sans" font-size="20.3" fill="#e8e8e8">06</text>
<text transform="translate(0 444.20) scale(0.66 1)" x="2898.21 2912.81 2927.41 2942.01 2956.61" text-anchor="middle" font-family="Liberation Sans" font-size="20.3" fill="#e8e8e8">9,800</text>
<text transform="translate(0 499.10) scale(0.66 1)" x="2898.21 2912.81 2927.41 2942.01 2956.61" text-anchor="middle" font-family="Liberation Sans" font-size="20.3" fill="#e8e8e8">9,700</text>
<text transform="translate(0 553.90) scale(0.66 1)" x="2898.21 2912.81 2927.41 2942.01 2956.61" text-anchor="middle" font-family="Liberation Sans" font-size="20.3" fill="#e8e8e8">9,600</text>
<text transform="translate(0 608.80) scale(0.66 1)" x="2898.21 2912.81 2927.41 2942.01 2956.61" text-anchor="middle" font-family="Liberation Sans" font-size="20.3" fill="#e8e8e8">9,500</text>
<text transform="translate(0 663.60) scale(0.66 1)" x="2898.21 2912.81 2927.41 2942.01 2956.61" text-anchor="middle" font-family="Liberation Sans" font-size="20.3" fill="#e8e8e8">9,400</text>
<text transform="translate(0 718.50) scale(0.66 1)" x="2898.21 2912.81 2927.41 2942.01 2956.61" text-anchor="middle" font-family="Liberation Sans" font-size="20.3" fill="#e8e8e8">9,300</text>
<text transform="translate(0 720.30) scale(0.66 1)" x="130.78 145.38" text-anchor="middle" font-family="Liberation Sans" font-size="20.3" fill="#e8e8e8">22</text>
<text transform="translate(0 720.30) scale(0.66 1)" x="2100.48 2115.08" text-anchor="middle" font-family="Liberation Sans" font-size="20.3" fill="#e8e8e8">23</text>
<rect x="9.5" y="761.4" width="1898.0" height="288.9" fill="#000"/>
<rect x="1907.5" y="761.4" width="93.0" height="312.9" fill="#1b1b1b"/>
<rect x="1907.5" y="760.9" width="93.0" height="1.6" fill="#000"/>
<rect x="1907.5" y="761.4" width="1.6" height="312.9" fill="#0c0c0c"/>
<rect x="9.5" y="1050.3" width="1991.0" height="24.0" fill="#1b1b1b"/>
<path d="M80 762.4V1049.3 M105.7 762.4V1049.3 M199 762.4V1049.3 M294.7 762.4V1049.3 M388.2 762.4V1049.3 M483.3 762.4V1049.3 M578.8 762.4V1049.3 M672.5 762.4V1049.3 M738.3 762.4V1049.3 M831.8 762.4V1049.3 M921.1 762.4V1049.3 M1011.6 762.4V1049.3 M1100.6 762.4V1049.3 M1191.4 762.4V1049.3 M1286.6 762.4V1049.3 M1380.3 762.4V1049.3 M1474 762.4V1049.3 M1564.9 762.4V1049.3 M1649.2 762.4V1049.3 M1738.4 762.4V1049.3 M1818.1 762.4V1049.3 M1903.9 762.4V1049.3 M11 836.2H1906 M11 926.8H1906 M11 1017.4H1906" stroke="#b4b4b4" stroke-width="1.7" stroke-dasharray="1.6 1.53" fill="none"/>
<path d="M80 762.4V1049.3" stroke="#c8c8c8" stroke-width="2.4" stroke-dasharray="1.6 1.53" fill="none"/>
<path d="M10.5 1050.8V764.4Q10.5 761.4 13.5 761.4H1904Q1906.8 761.4 1906.8 764.4V1050.8H10.5" stroke="#f2f2f2" stroke-width="2" fill="none"/>
<rect x="9.4" y="1073.1" width="1990.6" height="1.4" fill="#0c0c0c"/>
<text transform="translate(0 1066.60) scale(0.78 1)" x="77.18 88.72" text-anchor="middle" font-family="Liberation Sans" font-size="20.3" font-weight="bold" fill="#e8e8e8">06</text>
<text transform="translate(0 1066.60) scale(0.66 1)" x="166.54 181.14" text-anchor="middle" font-family="Liberation Sans" font-size="20.3" fill="#e8e8e8">09</text>
<text transform="translate(0 1066.60) scale(0.66 1)" x="326.14" text-anchor="middle" font-family="Liberation Sans" font-size="20.3" fill="#e8e8e8">0</text>
<path d="M206.52 1052.39V1066.60M206.52 1052.69L203.42 1055.59" stroke="#e8e8e8" stroke-width="1.55" fill="none"/>
<path d="M302.12 1052.39V1066.60M302.12 1052.69L299.02 1055.59" stroke="#e8e8e8" stroke-width="1.55" fill="none"/>
<path d="M311.75 1052.39V1066.60M311.75 1052.69L308.65 1055.59" stroke="#e8e8e8" stroke-width="1.55" fill="none"/>
<text transform="translate(0 1066.60) scale(0.66 1)" x="613.42" text-anchor="middle" font-family="Liberation Sans" font-size="20.3" fill="#e8e8e8">2</text>
<path d="M396.12 1052.39V1066.60M396.12 1052.69L393.02 1055.59" stroke="#e8e8e8" stroke-width="1.55" fill="none"/>
<text transform="translate(0 1066.60) scale(0.66 1)" x="758.42" text-anchor="middle" font-family="Liberation Sans" font-size="20.3" fill="#e8e8e8">3</text>
<path d="M491.82 1052.39V1066.60M491.82 1052.69L488.72 1055.59" stroke="#e8e8e8" stroke-width="1.55" fill="none"/>
<text transform="translate(0 1066.60) scale(0.66 1)" x="901.90" text-anchor="middle" font-family="Liberation Sans" font-size="20.3" fill="#e8e8e8">4</text>
<path d="M586.52 1052.39V1066.60M586.52 1052.69L583.42 1055.59" stroke="#e8e8e8" stroke-width="1.55" fill="none"/>
<text transform="translate(0 1066.60) scale(0.66 1)" x="1043.72" text-anchor="middle" font-family="Liberation Sans" font-size="20.3" fill="#e8e8e8">5</text>
<path d="M680.12 1052.39V1066.60M680.12 1052.69L677.02 1055.59" stroke="#e8e8e8" stroke-width="1.55" fill="none"/>
<text transform="translate(0 1066.60) scale(0.66 1)" x="1143.72" text-anchor="middle" font-family="Liberation Sans" font-size="20.3" fill="#e8e8e8">7</text>
<path d="M746.12 1052.39V1066.60M746.12 1052.69L743.02 1055.59" stroke="#e8e8e8" stroke-width="1.55" fill="none"/>
<text transform="translate(0 1066.60) scale(0.66 1)" x="1284.32" text-anchor="middle" font-family="Liberation Sans" font-size="20.3" fill="#e8e8e8">8</text>
<path d="M838.92 1052.39V1066.60M838.92 1052.69L835.82 1055.59" stroke="#e8e8e8" stroke-width="1.55" fill="none"/>
<text transform="translate(0 1066.60) scale(0.66 1)" x="1420.23" text-anchor="middle" font-family="Liberation Sans" font-size="20.3" fill="#e8e8e8">9</text>
<path d="M928.62 1052.39V1066.60M928.62 1052.69L925.52 1055.59" stroke="#e8e8e8" stroke-width="1.55" fill="none"/>
<text transform="translate(0 1066.60) scale(0.66 1)" x="1539.72 1554.32" text-anchor="middle" font-family="Liberation Sans" font-size="20.3" fill="#e8e8e8">20</text>
<text transform="translate(0 1066.60) scale(0.66 1)" x="1675.48" text-anchor="middle" font-family="Liberation Sans" font-size="20.3" fill="#e8e8e8">2</text>
<path d="M1116.35 1052.39V1066.60M1116.35 1052.69L1113.25 1055.59" stroke="#e8e8e8" stroke-width="1.55" fill="none"/>
<text transform="translate(0 1066.60) scale(0.66 1)" x="1812.15 1826.75" text-anchor="middle" font-family="Liberation Sans" font-size="20.3" fill="#e8e8e8">22</text>
<text transform="translate(0 1066.60) scale(0.66 1)" x="1957.30 1971.90" text-anchor="middle" font-family="Liberation Sans" font-size="20.3" fill="#e8e8e8">23</text>
<text transform="translate(0 1066.60) scale(0.66 1)" x="2098.82 2113.42" text-anchor="middle" font-family="Liberation Sans" font-size="20.3" fill="#e8e8e8">00</text>
<text transform="translate(0 1066.60) scale(0.66 1)" x="2241.24" text-anchor="middle" font-family="Liberation Sans" font-size="20.3" fill="#e8e8e8">0</text>
<path d="M1489.75 1052.39V1066.60M1489.75 1052.69L1486.65 1055.59" stroke="#e8e8e8" stroke-width="1.55" fill="none"/>
<text transform="translate(0 1066.60) scale(0.66 1)" x="2378.97 2393.57" text-anchor="middle" font-family="Liberation Sans" font-size="20.3" fill="#e8e8e8">02</text>
<text transform="translate(0 1066.60) scale(0.66 1)" x="2505.78 2520.38" text-anchor="middle" font-family="Liberation Sans" font-size="20.3" fill="#e8e8e8">03</text>
<text transform="translate(0 1066.60) scale(0.66 1)" x="2641.69 2656.29" text-anchor="middle" font-family="Liberation Sans" font-size="20.3" fill="#e8e8e8">04</text>
<text transform="translate(0 1066.60) scale(0.66 1)" x="2760.94 2775.54" text-anchor="middle" font-family="Liberation Sans" font-size="20.3" fill="#e8e8e8">05</text>
<text transform="translate(0 1066.60) scale(0.66 1)" x="2854.88 2869.48" text-anchor="middle" font-family="Liberation Sans" font-size="20.3" fill="#e8e8e8">06</text>
<text transform="translate(0 832.00) scale(0.66 1)" x="2912.81 2927.41 2942.01 2956.61 2971.21" text-anchor="middle" font-family="Liberation Sans" font-size="20.3" fill="#e8e8e8">3,000</text>
<path d="M1913.72 817.79V832.00M1913.72 818.09L1910.62 820.99" stroke="#e8e8e8" stroke-width="1.55" fill="none"/>
<text transform="translate(0 922.60) scale(0.66 1)" x="2912.81 2927.41 2942.01 2956.61 2971.21" text-anchor="middle" font-family="Liberation Sans" font-size="20.3" fill="#e8e8e8">2,900</text>
<path d="M1913.72 908.39V922.60M1913.72 908.69L1910.62 911.59" stroke="#e8e8e8" stroke-width="1.55" fill="none"/>
<text transform="translate(0 1013.20) scale(0.66 1)" x="2912.81 2927.41 2942.01 2956.61 2971.21" text-anchor="middle" font-family="Liberation Sans" font-size="20.3" fill="#e8e8e8">2,800</text>
<path d="M1913.72 998.99V1013.20M1913.72 999.29L1910.62 1002.19" stroke="#e8e8e8" stroke-width="1.55" fill="none"/>
<text transform="translate(0 1042.00) scale(0.66 1)" x="130.78 145.38" text-anchor="middle" font-family="Liberation Sans" font-size="20.3" fill="#e8e8e8">22</text>
<text transform="translate(0 1042.00) scale(0.66 1)" x="2100.48 2115.08" text-anchor="middle" font-family="Liberation Sans" font-size="20.3" fill="#e8e8e8">23</text>
<polyline points="12.5,829.8 14.5,829.8 14.5,828.7 16.4,828.7 16.4,828.9 18.3,828.9 18.3,824.2 20.2,824.2 20.2,824.7 21.5,824.7 21.5,825.4 22.7,825.4 22.7,827.7 24.3,827.7 24.3,826.2 25.8,826.2 25.8,819.8 27.4,819.8 27.4,816.4 29.1,816.4 29.1,814.2 30.8,814.2 30.8,814.9 32.4,814.9 32.4,813.8 34.2,813.8 34.2,826.2 36.1,826.2 36.1,823.3 38.0,823.3 38.0,823.0 39.3,823.0 39.3,822.3 40.6,822.3 40.6,820.5 42.5,820.5 42.5,821.2 44.4,821.2 44.4,821.9 45.6,821.9 45.6,822.8 46.9,822.8 46.9,822.0 48.8,822.0 48.8,823.1 50.7,823.1 50.7,824.8 52.6,824.8 52.6,826.3 54.6,826.3 54.6,831.0 56.5,831.0 56.5,835.2 58.4,835.2 58.4,839.7 60.3,839.7 60.3,835.8 62.2,835.8 62.2,834.4 63.9,834.4 63.9,834.5 65.6,834.5 65.6,838.5 67.3,838.5 67.3,838.5 69.0,838.5 69.0,838.2 70.7,838.2 70.7,840.1 72.4,840.1 72.4,834.7 73.8,834.7 73.8,835.1 75.3,835.1 75.3,831.1 76.7,831.1 76.7,826.9 78.4,826.9 78.4,832.6 80.0,832.6 80.0,837.4 81.3,837.4 81.3,840.3 82.6,840.3 82.6,841.0 83.8,841.0 83.8,876.2 85.1,876.2 85.1,869.8 86.4,869.8 86.4,863.0 88.3,863.0 88.3,884.5 90.2,884.5 90.2,904.0 91.5,904.0 91.5,898.6 92.7,898.6 92.7,887.3 94.0,887.3 94.0,892.1 95.3,892.1 95.3,896.1 96.6,896.1 96.6,890.9 97.8,890.9 97.8,892.0 99.1,892.0 99.1,893.0 100.4,893.0 100.4,902.0 102.2,902.0 102.2,866.1 103.5,866.1 103.5,868.4 104.9,868.4 104.9,863.4 106.2,863.4 106.2,866.8 108.0,866.8 108.0,842.9 109.3,842.9 109.3,831.6 110.6,831.6 110.6,818.8 111.8,818.8 111.8,829.0 113.1,829.0 113.1,835.3 115.0,835.3 115.0,841.4 116.9,841.4 116.9,846.8 118.8,846.8 118.8,852.5 120.8,852.5 120.8,851.0 122.2,851.0 122.2,863.6 123.6,863.6 123.6,870.5 125.1,870.5 125.1,876.3 126.6,876.3 126.6,873.1 128.1,873.1 128.1,867.9 129.7,867.9 129.7,866.3 131.1,866.3 131.1,860.7 132.5,860.7 132.5,856.3 133.9,856.3 133.9,852.5 135.3,852.5 135.3,848.7 137.0,848.7 137.0,851.3 138.7,851.3 138.7,852.9 140.4,852.9 140.4,859.1 142.1,859.1 142.1,851.6 143.8,851.6 143.8,847.0 145.5,847.0 145.5,848.8 146.9,848.8 146.9,848.1 148.4,848.1 148.4,848.1 149.8,848.1 149.8,846.8 151.3,846.8 151.3,846.2 152.6,846.2 152.6,840.4 153.9,840.4 153.9,834.9 155.8,834.9 155.8,825.5 157.7,825.5 157.7,817.9 159.4,817.9 159.4,824.4 161.1,824.4 161.1,826.2 162.8,826.2 162.8,827.8 164.5,827.8 164.5,828.4 166.2,828.4 166.2,822.9 167.9,822.9 167.9,817.6 169.4,817.6 169.4,814.4 170.9,814.4 170.9,813.7 172.4,813.7 172.4,809.7 173.8,809.7 173.8,807.0 175.2,807.0 175.2,804.3 176.6,804.3 176.6,802.8 178.0,802.8 178.0,802.4 179.7,802.4 179.7,809.5 181.4,809.5 181.4,817.2 183.1,817.2 183.1,828.9 184.4,828.9 184.4,815.7 185.7,815.7 185.7,804.2 187.1,804.2 187.1,803.8 188.5,803.8 188.5,801.4 189.9,801.4 189.9,800.6 191.3,800.6 191.3,800.0 193.0,800.0 193.0,800.7 194.7,800.7 194.7,805.0 196.4,805.0 196.4,807.9 197.9,807.9 197.9,807.5 199.4,807.5 199.4,808.1 201.0,808.1 201.0,809.1 202.2,809.1 202.2,812.7 203.5,812.7 203.5,816.9 204.8,816.9 204.8,845.9 206.4,845.9 206.4,847.2 208.0,847.2 208.0,849.7 209.6,849.7 209.6,850.1 211.1,850.1 211.1,854.5 212.7,854.5 212.7,857.5 214.2,857.5 214.2,859.4 215.7,859.4 215.7,861.3 217.5,861.3 217.5,852.7 219.3,852.7 219.3,842.7 221.3,842.7 221.3,865.8 222.9,865.8 222.9,880.2 224.4,880.2 224.4,894.1 225.9,894.1 225.9,891.3 227.4,891.3 227.4,885.1 229.0,885.1 229.0,883.3 230.7,883.3 230.7,884.2 232.4,884.2 232.4,888.3 234.1,888.3 234.1,889.7 235.8,889.7 235.8,888.5 237.5,888.5 237.5,886.1 239.2,886.1 239.2,886.3 240.9,886.3 240.9,888.7 242.5,888.7 242.5,891.7 244.2,891.7 244.2,893.0 245.9,893.0 245.9,887.9 247.6,887.9 247.6,885.3 249.3,885.3 249.3,882.0 250.9,882.0 250.9,890.1 252.4,890.1 252.4,899.3 254.1,899.3 254.1,900.4 255.8,900.4 255.8,902.9 257.5,902.9 257.5,903.6 259.1,903.6 259.1,905.3 260.8,905.3 260.8,910.5 262.7,910.5 262.7,905.6 264.6,905.6 264.6,901.5 265.9,901.5 265.9,858.1 267.5,858.1 267.5,858.2 269.2,858.2 269.2,856.9 270.7,856.9 270.7,880.2 272.3,880.2 272.3,903.0 273.8,903.0 273.8,889.3 275.3,889.3 275.3,877.6 276.8,877.6 276.8,866.3 278.6,866.3 278.6,876.6 280.4,876.6 280.4,892.6 282.1,892.6 282.1,885.5 283.8,885.5 283.8,877.6 285.5,877.6 285.5,867.6 287.2,867.6 287.2,873.9 288.9,873.9 288.9,876.7 290.6,876.7 290.6,882.7 292.3,882.7 292.3,897.2 294.0,897.2 294.0,911.2 295.7,911.2 295.7,924.4 297.5,924.4 297.5,925.2 299.2,925.2 299.2,927.7 301.0,927.7 301.0,926.1 302.8,926.1 302.8,928.5 304.3,928.5 304.3,933.0 305.9,933.0 305.9,936.4 307.2,936.4 307.2,933.4 308.6,933.4 308.6,924.1 309.9,924.1 309.9,920.4 311.7,920.4 311.7,921.8 313.5,921.8 313.5,928.1 315.0,928.1 315.0,937.2 316.4,937.2 316.4,941.9 317.9,941.9 317.9,945.8 319.4,945.8 319.4,951.2 320.9,951.2 320.9,946.9 322.5,946.9 322.5,946.4 324.1,946.4 324.1,943.9 325.7,943.9 325.7,942.9 327.4,942.9 327.4,941.7 329.0,941.7 329.0,938.1 330.6,938.1 330.6,936.0 332.2,936.0 332.2,932.1 333.9,932.1 333.9,929.9 335.4,929.9 335.4,932.2 336.9,932.2 336.9,933.4 338.5,933.4 338.5,937.1 340.4,937.1 340.4,948.4 342.3,948.4 342.3,965.9 343.7,965.9 343.7,952.9 345.2,952.9 345.2,946.2 346.6,946.2 346.6,934.5 348.1,934.5 348.1,947.7 349.7,947.7 349.7,956.0 351.2,956.0 351.2,966.6 353.1,966.6 353.1,990.2 355.0,990.2 355.0,1011.6 356.7,1011.6 356.7,1008.5 358.4,1008.5 358.4,1004.6 360.1,1004.6 360.1,1006.0 361.8,1006.0 361.8,1001.0 363.5,1001.0 363.5,998.5 365.2,998.5 365.2,996.6 366.6,996.6 366.6,1007.2 368.1,1007.2 368.1,1010.6 369.5,1010.6 369.5,1021.1 371.0,1021.1 371.0,1014.6 372.6,1014.6 372.6,1010.0 374.1,1010.0 374.1,1001.4 375.6,1001.4 375.6,997.4 377.2,997.4 377.2,993.2 378.7,993.2 378.7,988.4 380.2,988.4 380.2,990.5 381.7,990.5 381.7,989.4 383.3,989.4 383.3,992.6 384.8,992.6 384.8,994.4 386.5,994.4 386.5,996.9 388.2,996.9 388.2,1000.9 389.9,1000.9 389.9,1007.7 391.6,1007.7 391.6,1014.1 393.3,1014.1 393.3,1020.5 395.0,1020.5 395.0,1029.2 396.7,1029.2 396.7,1016.9 398.4,1016.9 398.4,1009.3 400.1,1009.3 400.1,999.2 401.9,999.2 401.9,1001.0 403.6,1001.0 403.6,1003.6 405.4,1003.6 405.4,1005.1 407.2,1005.1 407.2,1007.1 408.6,1007.1 408.6,1013.5 410.0,1013.5 410.0,1021.9 410.2,1021.9 410.2,1020.4 412.1,1020.4 412.1,1018.9 414.0,1018.9 414.0,1015.2 415.3,1015.2 415.3,1017.8 416.5,1017.8 416.5,1023.1 418.2,1023.1 418.2,1025.2 419.9,1025.2 419.9,1032.0 421.6,1032.0 421.6,1033.8 423.2,1033.8 423.2,1032.3 424.8,1032.3 424.8,1031.4 426.4,1031.4 426.4,1030.1 428.0,1030.1 428.0,1028.3 429.7,1028.3 429.7,1026.2 431.4,1026.2 431.4,1022.7 433.1,1022.7 433.1,1019.6 434.8,1019.6 434.8,1012.6 436.5,1012.6 436.5,1003.3 438.2,1003.3 438.2,992.9 439.5,992.9 439.5,1005.5 440.7,1005.5 440.7,1014.7 442.6,1014.7 442.6,1009.4 444.6,1009.4 444.6,1007.3 446.3,1007.3 446.3,1001.7 448.0,1001.7 448.0,998.9 449.6,998.9 449.6,997.1 451.6,997.1 451.6,997.2 453.5,997.2 453.5,1001.7 455.2,1001.7 455.2,1002.6 456.9,1002.6 456.9,1007.7 458.6,1007.7 458.6,1008.4 460.5,1008.4 460.5,1007.0 462.4,1007.0 462.4,1002.4 464.3,1002.4 464.3,996.2 466.2,996.2 466.2,990.2 468.1,990.2 468.1,995.9 470.0,995.9 470.0,999.4 471.9,999.4 471.9,995.9 473.8,995.9 473.8,988.8 475.4,988.8 475.4,987.0 476.9,987.0 476.9,989.0 478.4,989.0 478.4,985.6 479.9,985.6 479.9,986.6 481.5,986.6 481.5,987.8 482.7,987.8 482.7,967.7 484.3,967.7 484.3,966.6 485.8,966.6 485.8,962.6 487.3,962.6 487.3,960.8 488.9,960.8 488.9,962.5 490.4,962.5 490.4,959.2 492.1,959.2 492.1,963.3 493.8,963.3 493.8,964.5 495.5,964.5 495.5,969.9 497.2,969.9 497.2,968.8 498.9,968.8 498.9,967.6 500.6,967.6 500.6,966.1 502.5,966.1 502.5,969.9 504.4,969.9 504.4,973.3 506.3,973.3 506.3,967.2 508.2,967.2 508.2,960.0 509.5,960.0 509.5,980.6 511.1,980.6 511.1,976.3 512.7,976.3 512.7,976.1 514.3,976.1 514.3,970.9 515.8,970.9 515.8,969.1 517.8,969.1 517.8,967.1 519.7,967.1 519.7,962.4 521.2,962.4 521.2,963.4 522.7,963.4 522.7,969.2 524.3,969.2 524.3,969.1 525.8,969.1 525.8,971.8 527.3,971.8 527.3,973.4 528.6,973.4 528.6,976.4 529.9,976.4 529.9,977.3 531.4,977.3 531.4,974.3 532.9,974.3 532.9,969.5 534.4,969.5 534.4,965.8 536.0,965.8 536.0,958.6 537.5,958.6 537.5,958.2 539.2,958.2 539.2,963.1 540.9,963.1 540.9,966.0 542.6,966.0 542.6,972.8 544.3,972.8 544.3,973.7 546.0,973.7 546.0,974.5 547.7,974.5 547.7,973.7 549.4,973.7 549.4,975.4 551.1,975.4 551.1,973.7 552.8,973.7 552.8,972.4 554.4,972.4 554.4,974.4 556.0,974.4 556.0,977.8 557.5,977.8 557.5,977.7 559.1,977.7 559.1,981.1 560.7,981.1 560.7,977.5 562.3,977.5 562.3,973.2 563.9,973.2 563.9,969.9 565.5,969.9 565.5,964.6 567.1,964.6 567.1,964.0 568.7,964.0 568.7,962.4 570.3,962.4 570.3,961.6 571.9,961.6 571.9,959.6 573.5,959.6 573.5,960.1 575.0,960.1 575.0,958.7 576.6,958.7 576.6,957.4 578.2,957.4 578.2,958.6 580.1,958.6 580.1,955.2 582.0,955.2 582.0,950.3 583.6,950.3 583.6,954.1 585.2,954.1 585.2,955.1 586.8,955.1 586.8,956.9 588.4,956.9 588.4,956.4 590.1,956.4 590.1,952.0 591.7,952.0 591.7,951.3 593.3,951.3 593.3,947.7 595.0,947.7 595.0,945.0 596.6,945.0 596.6,941.3 598.2,941.3 598.2,939.1 599.9,939.1 599.9,933.9 601.4,933.9 601.4,938.6 602.9,938.6 602.9,940.2 604.5,940.2 604.5,942.0 606.0,942.0 606.0,947.9 607.5,947.9 607.5,953.9 609.4,953.9 609.4,945.5 611.3,945.5 611.3,944.4 612.9,944.4 612.9,941.0 614.4,941.0 614.4,940.1 615.9,940.1 615.9,939.4 617.4,939.4 617.4,938.3 619.0,938.3 619.0,935.6 620.5,935.6 620.5,936.7 622.0,936.7 622.0,936.8 623.6,936.8 623.6,937.1 625.1,937.1 625.1,934.8 626.6,934.8 626.6,937.4 628.3,937.4 628.3,931.9 630.0,931.9 630.0,926.6 631.7,926.6 631.7,916.0 633.4,916.0 633.4,917.5 635.1,917.5 635.1,914.5 636.8,914.5 636.8,916.9 638.7,916.9 638.7,898.0 640.6,898.0 640.6,876.8 641.9,876.8 641.9,868.6 643.2,868.6 643.2,863.2 644.4,863.2 644.4,878.4 645.7,878.4 645.7,891.2 647.4,891.2 647.4,884.2 649.1,884.2 649.1,873.8 650.8,873.8 650.8,868.4 652.4,868.4 652.4,870.4 654.0,870.4 654.0,871.4 655.6,871.4 655.6,874.1 657.2,874.1 657.2,871.7 658.9,871.7 658.9,869.5 660.6,869.5 660.6,872.0 662.3,872.0 662.3,869.8 664.2,869.8 664.2,862.7 666.1,862.7 666.1,854.9 668.0,854.9 668.0,847.1 669.9,847.1 669.9,840.5 671.6,840.5 671.6,842.1 673.3,842.1 673.3,840.1 675.0,840.1 675.0,843.8 676.7,843.8 676.7,846.3 678.4,846.3 678.4,843.3 680.1,843.3 680.1,845.0 681.8,845.0 681.8,854.0 683.5,854.0 683.5,863.7 685.2,863.7 685.2,876.4 686.9,876.4 686.9,872.1 688.6,872.1 688.6,866.9 690.3,866.9 690.3,864.7 692.0,864.7 692.0,858.3 693.7,858.3 693.7,855.5 695.4,855.5 695.4,853.9 696.6,853.9 696.6,863.0 697.9,863.0 697.9,871.8 699.5,871.8 699.5,874.6 701.1,874.6 701.1,875.4 702.7,875.4 702.7,877.6 704.3,877.6 704.3,878.1 706.2,878.1 706.2,883.0 708.1,883.0 708.1,889.1 709.6,889.1 709.6,889.5 711.1,889.5 711.1,889.4 712.7,889.4 712.7,891.5 714.2,891.5 714.2,891.7 715.7,891.7 715.7,891.4 717.3,891.4 717.3,888.6 718.8,888.6 718.8,886.3 720.3,886.3 720.3,886.2 721.8,886.2 721.8,883.1 723.4,883.1 723.4,882.3 724.6,882.3 724.6,886.3 726.5,886.3 726.5,880.9 728.5,880.9 728.5,876.2 730.2,876.2 730.2,868.0 731.8,868.0 731.8,862.3 733.5,862.3 733.5,858.9 734.8,858.9 734.8,851.0 736.1,851.0 736.1,840.6 737.4,840.6 737.4,825.6 738.6,825.6 738.6,812.7 740.7,812.7 740.7,879.3 742.2,879.3 742.2,864.3 743.7,864.3 743.7,851.5 745.6,851.5 745.6,852.4 747.5,852.4 747.5,852.2 749.2,852.2 749.2,865.2 750.9,865.2 750.9,877.5 752.6,877.5 752.6,888.6 754.3,888.6 754.3,891.7 756.0,891.7 756.0,897.6 757.7,897.6 757.7,902.2 759.6,902.2 759.6,899.5 761.6,899.5 761.6,899.3 763.1,899.3 763.1,896.4 764.6,896.4 764.6,891.4 766.1,891.4 766.1,886.7 767.7,886.7 767.7,885.3 769.2,885.3 769.2,878.2 770.8,878.2 770.8,883.7 772.4,883.7 772.4,888.8 774.0,888.8 774.0,893.7 775.6,893.7 775.6,899.6 777.2,899.6 777.2,899.5 778.8,899.5 778.8,899.5 780.5,899.5 780.5,897.4 782.1,897.4 782.1,895.5 783.7,895.5 783.7,892.8 785.4,892.8 785.4,893.2 787.0,893.2 787.0,891.0 788.3,891.0 788.3,885.7 789.6,885.7 789.6,880.7 791.5,880.7 791.5,881.0 793.4,881.0 793.4,881.8 795.3,881.8 795.3,872.8 797.2,872.8 797.2,865.5 798.6,865.5 798.6,871.3 800.0,871.3 800.0,875.8 801.5,875.8 801.5,883.9 803.4,883.9 803.4,881.9 805.3,881.9 805.3,874.9 807.2,874.9 807.2,878.9 809.1,878.9 809.1,880.6 811.0,880.6 811.0,877.0 812.9,877.0 812.9,868.8 814.2,868.8 814.2,875.7 815.5,875.7 815.5,882.5 817.1,882.5 817.1,884.3 818.6,884.3 818.6,886.2 820.2,886.2 820.2,885.8 821.8,885.8 821.8,890.0 823.4,890.0 823.4,889.1 825.0,889.1 825.0,885.3 826.6,885.3 826.6,886.9 828.2,886.9 828.2,885.4 829.9,885.4 829.9,872.9 831.6,872.9 831.6,864.5 833.3,864.5 833.3,854.9 835.2,854.9 835.2,862.9 837.1,862.9 837.1,872.3 839.0,872.3 839.0,875.3 840.9,875.3 840.9,881.8 842.5,881.8 842.5,884.5 844.1,884.5 844.1,887.4 845.7,887.4 845.7,888.8 847.3,888.8 847.3,890.6 848.9,890.6 848.9,888.9 850.5,888.9 850.5,882.7 852.1,882.7 852.1,883.5 853.7,883.5 853.7,879.1 855.4,879.1 855.4,875.4 857.0,875.4 857.0,873.9 858.7,873.9 858.7,869.6 860.4,869.6 860.4,866.3 862.1,866.3 862.1,865.5 863.8,865.5 863.8,862.0 865.5,862.0 865.5,862.6 867.2,862.6 867.2,859.3 868.9,859.3 868.9,857.5 870.8,857.5 870.8,864.3 872.7,864.3 872.7,874.0 874.3,874.0 874.3,872.1 875.8,872.1 875.8,871.6 877.3,871.6 877.3,871.4 878.9,871.4 878.9,871.5 880.4,871.5 880.4,872.9 882.0,872.9 882.0,876.8 883.6,876.8 883.6,880.9 885.2,880.9 885.2,884.1 886.8,884.1 886.8,886.2 888.7,886.2 888.7,879.3 890.6,879.3 890.6,873.3 892.2,873.3 892.2,872.8 893.8,872.8 893.8,875.7 895.3,875.7 895.3,878.7 896.9,878.7 896.9,879.1 898.6,879.1 898.6,877.8 900.3,877.8 900.3,873.6 902.0,873.6 902.0,874.2 903.7,874.2 903.7,871.4 905.4,871.4 905.4,868.9 907.1,868.9 907.1,867.3 908.8,867.3 908.8,866.5 910.5,866.5 910.5,871.1 912.2,871.1 912.2,873.3 913.7,873.3 913.7,877.7 915.3,877.7 915.3,876.2 916.8,876.2 916.8,876.8 918.3,876.8 918.3,879.5 919.9,879.5 919.9,878.2 921.1,878.2 921.1,886.4 922.4,886.4 922.4,888.8 924.3,888.8 924.3,883.9 926.2,883.9 926.2,877.1 927.7,877.1 927.7,881.8 929.2,881.8 929.2,880.6 930.7,880.6 930.7,886.7 932.2,886.7 932.2,887.4 933.6,887.4 933.6,891.0 935.1,891.0 935.1,892.0 936.7,892.0 936.7,892.2 938.2,892.2 938.2,890.7 939.7,890.7 939.7,889.6 941.2,889.6 941.2,887.8 942.8,887.8 942.8,886.6 944.4,886.6 944.4,887.1 946.0,887.1 946.0,885.4 947.5,885.4 947.5,884.4 949.1,884.4 949.1,884.3 951.0,884.3 951.0,888.6 953.0,888.6 953.0,889.2 954.5,889.2 954.5,896.7 956.1,896.7 956.1,901.2 957.7,901.2 957.7,905.6 959.3,905.6 959.3,913.7 960.9,913.7 960.9,912.5 962.5,912.5 962.5,907.3 964.1,907.3 964.1,903.8 965.7,903.8 965.7,901.3 967.3,901.3 967.3,906.7 968.9,906.7 968.9,908.0 970.5,908.0 970.5,911.4 972.0,911.4 972.0,916.0 974.0,916.0 974.0,912.0 975.9,912.0 975.9,908.9 977.8,908.9 977.8,909.4 979.7,909.4 979.7,910.5 981.3,910.5 981.3,911.3 983.0,911.3 983.0,911.1 984.6,911.1 984.6,911.5 986.2,911.5 986.2,910.0 987.9,910.0 987.9,910.8 989.5,910.8 989.5,910.8 991.1,910.8 991.1,910.1 992.8,910.1 992.8,913.3 994.5,913.3 994.5,916.4 996.2,916.4 996.2,917.9 997.9,917.9 997.9,917.1 999.6,917.1 999.6,915.2 1001.3,915.2 1001.3,916.2 1003.0,916.2 1003.0,915.0 1004.7,915.0 1004.7,914.1 1006.4,914.1 1006.4,912.8 1008.0,912.8 1008.0,916.4 1009.5,916.4 1009.5,920.6 1011.0,920.6 1011.0,919.7 1012.5,919.7 1012.5,921.1 1014.1,921.1 1014.1,923.3 1015.7,923.3 1015.7,921.5 1017.3,921.5 1017.3,921.8 1019.0,921.8 1019.0,920.3 1020.6,920.3 1020.6,919.8 1022.2,919.8 1022.2,920.3 1023.9,920.3 1023.9,919.8 1025.5,919.8 1025.5,918.8 1026.8,918.8 1026.8,923.0 1028.1,923.0 1028.1,929.5 1029.7,929.5 1029.7,927.0 1031.3,927.0 1031.3,928.6 1033.0,928.6 1033.0,926.5 1034.6,926.5 1034.6,926.2 1036.2,926.2 1036.2,926.5 1037.9,926.5 1037.9,925.5 1039.5,925.5 1039.5,922.4 1041.4,922.4 1041.4,921.2 1043.3,921.2 1043.3,919.4 1044.9,919.4 1044.9,919.5 1046.5,919.5 1046.5,919.8 1048.1,919.8 1048.1,924.6 1049.7,924.6 1049.7,926.5 1051.2,926.5 1051.2,927.1 1052.8,927.1 1052.8,926.7 1054.3,926.7 1054.3,926.8 1055.8,926.8 1055.8,926.9 1057.3,926.9 1057.3,928.3 1058.9,928.3 1058.9,928.5 1060.4,928.5 1060.4,929.8 1061.9,929.8 1061.9,929.9 1063.5,929.9 1063.5,933.1 1065.0,933.1 1065.0,932.7 1066.9,932.7 1066.9,940.2 1068.8,940.2 1068.8,943.0 1070.7,943.0 1070.7,940.9 1072.6,940.9 1072.6,935.4 1074.5,935.4 1074.5,938.7 1076.4,938.7 1076.4,944.7 1078.1,944.7 1078.1,943.2 1079.8,943.2 1079.8,942.1 1081.5,942.1 1081.5,941.2 1083.2,941.2 1083.2,947.2 1084.9,947.2 1084.9,948.7 1086.6,948.7 1086.6,951.6 1088.3,951.6 1088.3,947.7 1090.0,947.7 1090.0,948.2 1091.7,948.2 1091.7,945.1 1093.3,945.1 1093.3,943.8 1094.8,943.8 1094.8,943.7 1096.4,943.7 1096.4,941.5 1097.9,941.5 1097.9,944.1 1099.5,944.1 1099.5,941.6 1101.1,941.6 1101.1,943.8 1102.6,943.8 1102.6,941.9 1104.2,941.9 1104.2,941.4 1105.7,941.4 1105.7,942.3 1107.6,942.3 1107.6,950.4 1109.5,950.4 1109.5,957.0 1111.1,957.0 1111.1,960.1 1112.6,960.1 1112.6,962.7 1114.1,962.7 1114.1,963.4 1115.7,963.4 1115.7,963.9 1117.2,963.9 1117.2,967.0 1118.9,967.0 1118.9,963.4 1120.6,963.4 1120.6,961.1 1122.3,961.1 1122.3,959.1 1124.0,959.1 1124.0,956.2 1125.7,956.2 1125.7,953.3 1127.4,953.3 1127.4,948.7 1129.0,948.7 1129.0,952.2 1130.5,952.2 1130.5,952.4 1132.1,952.4 1132.1,953.1 1133.7,953.1 1133.7,954.8 1135.2,954.8 1135.2,956.6 1136.7,956.6 1136.7,952.1 1138.2,952.1 1138.2,951.3 1139.7,951.3 1139.7,953.8 1141.2,953.8 1141.2,951.5 1142.6,951.5 1142.6,953.7 1144.2,953.7 1144.2,953.4 1145.8,953.4 1145.8,956.5 1147.4,956.5 1147.4,960.7 1149.0,960.7 1149.0,963.4 1150.5,963.4 1150.5,962.4 1152.0,962.4 1152.0,962.0 1153.5,962.0 1153.5,960.8 1154.9,960.8 1154.9,960.0 1156.4,960.0 1156.4,959.9 1157.9,959.9 1157.9,961.3 1159.8,961.3 1159.8,953.6 1161.7,953.6 1161.7,945.7 1163.4,945.7 1163.4,946.7 1165.1,946.7 1165.1,948.0 1166.8,948.0 1166.8,949.1 1168.5,949.1 1168.5,948.1 1170.2,948.1 1170.2,948.8 1171.9,948.8 1171.9,949.9 1173.8,949.9 1173.8,947.0 1175.7,947.0 1175.7,938.3 1177.4,938.3 1177.4,938.8 1179.1,938.8 1179.1,934.4 1180.8,934.4 1180.8,936.6 1182.5,936.6 1182.5,930.8 1184.2,930.8 1184.2,928.2 1185.9,928.2 1185.9,925.8 1187.3,925.8 1187.3,927.7 1188.6,927.7 1188.6,929.4 1190.0,929.4 1190.0,930.9 1191.5,930.9 1191.5,930.7 1192.7,930.7 1192.7,918.4 1194.0,918.4 1194.0,910.7 1195.7,910.7 1195.7,909.7 1197.4,909.7 1197.4,911.7 1199.1,911.7 1199.1,915.1 1200.6,915.1 1200.6,913.1 1202.1,913.1 1202.1,912.0 1203.6,912.0 1203.6,911.1 1205.0,911.1 1205.0,912.4 1206.5,912.4 1206.5,908.1 1208.0,908.1 1208.0,907.6 1209.9,907.6 1209.9,912.1 1211.8,912.1 1211.8,912.6 1213.1,912.6 1213.1,921.8 1214.4,921.8 1214.4,919.7 1215.6,919.7 1215.6,913.3 1217.3,913.3 1217.3,911.1 1219.0,911.1 1219.0,908.8 1220.7,908.8 1220.7,903.5 1222.4,903.5 1222.4,904.0 1224.1,904.0 1224.1,901.6 1225.8,901.6 1225.8,899.8 1227.7,899.8 1227.7,909.1 1229.6,909.1 1229.6,917.6 1230.9,917.6 1230.9,928.6 1232.2,928.6 1232.2,939.8 1233.5,939.8 1233.5,932.9 1234.7,932.9 1234.7,924.2 1236.3,924.2 1236.3,922.2 1237.9,922.2 1237.9,920.1 1239.5,920.1 1239.5,917.6 1241.1,917.6 1241.1,916.7 1243.0,916.7 1243.0,900.4 1244.9,900.4 1244.9,886.1 1246.2,886.1 1246.2,885.1 1247.5,885.1 1247.5,883.2 1249.1,883.2 1249.1,883.0 1250.7,883.0 1250.7,883.5 1252.2,883.5 1252.2,885.1 1253.8,885.1 1253.8,886.0 1255.5,886.0 1255.5,887.0 1257.2,887.0 1257.2,888.5 1258.9,888.5 1258.9,886.3 1260.6,886.3 1260.6,890.1 1262.3,890.1 1262.3,885.4 1264.0,885.4 1264.0,886.2 1265.9,886.2 1265.9,879.5 1267.8,879.5 1267.8,873.1 1269.5,873.1 1269.5,873.3 1271.2,873.3 1271.2,875.3 1272.9,875.3 1272.9,871.0 1274.6,871.0 1274.6,868.1 1276.3,868.1 1276.3,861.2 1278.0,861.2 1278.0,856.8 1279.9,856.8 1279.9,864.9 1281.8,864.9 1281.8,878.5 1283.8,878.5 1283.8,872.4 1285.7,872.4 1285.7,868.5 1286.9,868.5 1286.9,863.2 1288.2,863.2 1288.2,851.7 1290.1,851.7 1290.1,864.1 1292.0,864.1 1292.0,875.5 1293.6,875.5 1293.6,875.7 1295.1,875.7 1295.1,875.9 1296.6,875.9 1296.6,878.5 1298.1,878.5 1298.1,881.7 1299.7,881.7 1299.7,881.3 1301.4,881.3 1301.4,884.8 1303.1,884.8 1303.1,890.6 1304.8,890.6 1304.8,892.3 1306.4,892.3 1306.4,894.9 1307.9,894.9 1307.9,892.8 1309.5,892.8 1309.5,891.5 1311.1,891.5 1311.1,893.1 1312.4,893.1 1312.4,887.8 1313.7,887.8 1313.7,881.6 1315.4,881.6 1315.4,884.0 1317.1,884.0 1317.1,886.6 1318.8,886.6 1318.8,888.9 1320.7,888.9 1320.7,896.3 1322.6,896.3 1322.6,904.2 1324.3,904.2 1324.3,912.6 1326.0,912.6 1326.0,912.3 1327.7,912.3 1327.7,914.6 1329.4,914.6 1329.4,910.6 1331.1,910.6 1331.1,904.4 1332.8,904.4 1332.8,901.1 1334.4,901.1 1334.4,896.4 1336.0,896.4 1336.0,895.8 1337.5,895.8 1337.5,892.6 1339.1,892.6 1339.1,894.1 1340.7,894.1 1340.7,891.7 1342.2,891.7 1342.2,893.1 1343.7,893.1 1343.7,893.2 1345.2,893.2 1345.2,889.7 1346.8,889.7 1346.8,890.7 1348.4,890.7 1348.4,892.8 1350.0,892.8 1350.0,892.9 1351.5,892.9 1351.5,893.6 1353.1,893.6 1353.1,895.8 1354.7,895.8 1354.7,901.5 1356.2,901.5 1356.2,905.2 1357.7,905.2 1357.7,911.4 1359.2,911.4 1359.2,918.0 1360.8,918.0 1360.8,923.0 1362.5,923.0 1362.5,919.5 1364.2,919.5 1364.2,914.6 1365.9,914.6 1365.9,914.8 1367.5,914.8 1367.5,909.8 1369.1,909.8 1369.1,907.8 1370.6,907.8 1370.6,904.9 1372.2,904.9 1372.2,902.5 1374.1,902.5 1374.1,908.3 1376.1,908.3 1376.1,912.8 1378.0,912.8 1378.0,924.5 1379.9,924.5 1379.9,935.7 1381.1,935.7 1381.1,918.8 1382.4,918.8 1382.4,903.3 1384.0,903.3 1384.0,904.6 1385.6,904.6 1385.6,905.6 1387.2,905.6 1387.2,909.4 1388.8,909.4 1388.8,907.9 1390.7,907.9 1390.7,903.5 1392.6,903.5 1392.6,898.6 1394.2,898.6 1394.2,891.9 1395.8,891.9 1395.8,884.5 1397.4,884.5 1397.4,878.8 1399.0,878.8 1399.0,876.3 1400.7,876.3 1400.7,875.8 1402.4,875.8 1402.4,879.5 1404.1,879.5 1404.1,882.7 1405.8,882.7 1405.8,879.6 1407.5,879.6 1407.5,874.7 1409.2,874.7 1409.2,872.0 1411.1,872.0 1411.1,885.1 1413.0,885.1 1413.0,895.1 1414.9,895.1 1414.9,890.0 1416.8,890.0 1416.8,884.7 1418.3,884.7 1418.3,881.5 1419.8,881.5 1419.8,876.3 1421.4,876.3 1421.4,872.6 1422.9,872.6 1422.9,872.5 1424.4,872.5 1424.4,867.2 1426.1,867.2 1426.1,870.0 1427.8,870.0 1427.8,872.3 1429.5,872.3 1429.5,878.9 1431.1,878.9 1431.1,868.4 1432.7,868.4 1432.7,860.4 1434.3,860.4 1434.3,854.2 1435.9,854.2 1435.9,845.5 1437.4,845.5 1437.4,846.4 1438.9,846.4 1438.9,844.8 1440.3,844.8 1440.3,843.5 1441.8,843.5 1441.8,846.4 1443.3,846.4 1443.3,847.9 1444.8,847.9 1444.8,848.1 1446.5,848.1 1446.5,851.7 1448.2,851.7 1448.2,852.8 1449.9,852.8 1449.9,852.7 1451.6,852.7 1451.6,851.3 1453.3,851.3 1453.3,847.0 1455.0,847.0 1455.0,843.2 1456.5,843.2 1456.5,844.0 1458.0,844.0 1458.0,839.2 1459.6,839.2 1459.6,841.3 1461.1,841.3 1461.1,840.1 1462.6,840.1 1462.6,834.9 1464.1,834.9 1464.1,834.9 1465.6,834.9 1465.6,832.6 1467.1,832.6 1467.1,829.1 1468.6,829.1 1468.6,827.4 1470.0,827.4 1470.0,824.8 1471.5,824.8 1471.5,823.5 1473.2,823.5 1473.2,825.3 1474.9,825.3 1474.9,825.9 1476.6,825.9 1476.6,832.6 1478.5,832.6 1478.5,836.7 1480.4,836.7 1480.4,839.0 1482.1,839.0 1482.1,836.4 1483.8,836.4 1483.8,833.2 1485.5,833.2 1485.5,824.1 1487.1,824.1 1487.1,824.5 1488.6,824.5 1488.6,823.3 1490.1,823.3 1490.1,823.7 1491.6,823.7 1491.6,821.6 1493.2,821.6 1493.2,819.2 1494.7,819.2 1494.7,818.7 1496.2,818.7 1496.2,812.9 1497.8,812.9 1497.8,810.4 1499.3,810.4 1499.3,808.5 1500.8,808.5 1500.8,800.9 1502.5,800.9 1502.5,805.1 1504.2,805.1 1504.2,810.6 1505.9,810.6 1505.9,813.2 1507.8,813.2 1507.8,805.0 1509.7,805.0 1509.7,795.5 1511.3,795.5 1511.3,801.8 1512.9,801.8 1512.9,802.0 1514.5,802.0 1514.5,804.5 1516.1,804.5 1516.1,807.1 1518.0,807.1 1518.0,809.3 1519.9,809.3 1519.9,808.7 1521.6,808.7 1521.6,807.0 1523.3,807.0 1523.3,804.9 1525.0,804.9 1525.0,799.1 1526.9,799.1 1526.9,806.3 1528.8,806.3 1528.8,811.9 1530.7,811.9 1530.7,802.5 1532.6,802.5 1532.6,797.3 1534.1,797.3 1534.1,796.6 1535.6,796.6 1535.6,797.6 1537.1,797.6 1537.1,797.7 1538.6,797.7 1538.6,800.2 1540.1,800.2 1540.1,801.2 1541.6,801.2 1541.6,803.0 1543.1,803.0 1543.1,804.0 1544.7,804.0 1544.7,807.5 1546.3,807.5 1546.3,806.7 1547.9,806.7 1547.9,807.8 1549.4,807.8 1549.4,807.8 1550.9,807.8 1550.9,810.0 1552.4,810.0 1552.4,806.1 1553.9,806.1 1553.9,805.7 1555.3,805.7 1555.3,808.0 1556.8,808.0 1556.8,808.5 1558.5,808.5 1558.5,809.1 1560.2,809.1 1560.2,809.1 1561.9,809.1 1561.9,811.6 1563.6,811.6 1563.6,817.6 1565.3,817.6 1565.3,820.4 1567.0,820.4 1567.0,824.5 1568.6,824.5 1568.6,824.7 1570.2,824.7 1570.2,821.2 1571.8,821.2 1571.8,819.5 1573.4,819.5 1573.4,818.8 1575.3,818.8 1575.3,818.7 1577.2,818.7 1577.2,827.1 1578.6,827.1 1578.6,815.1 1580.0,815.1 1580.0,806.3 1581.1,806.3 1581.1,804.7 1582.9,804.7 1582.9,803.3 1584.8,803.3 1584.8,799.7 1586.6,799.7 1586.6,802.1 1588.4,802.1 1588.4,803.9 1590.3,803.9 1590.3,806.9 1592.1,806.9 1592.1,813.7 1593.7,813.7 1593.7,806.9 1595.2,806.9 1595.2,808.1 1596.8,808.1 1596.8,805.7 1598.3,805.7 1598.3,802.6 1599.9,802.6 1599.9,805.6 1601.5,805.6 1601.5,791.3 1603.2,791.3 1603.2,783.4 1604.7,783.4 1604.7,786.5 1606.2,786.5 1606.2,790.1 1607.6,790.1 1607.6,792.0 1609.5,792.0 1609.5,796.0 1611.3,796.0 1611.3,795.7 1613.2,795.7 1613.2,794.9 1614.3,794.9 1614.3,781.7 1615.9,781.7 1615.9,788.6 1617.6,788.6 1617.6,791.8 1619.3,791.8 1619.3,798.2 1620.9,798.2 1620.9,802.5 1622.4,802.5 1622.4,796.2 1623.9,796.2 1623.9,789.3 1625.3,789.3 1625.3,784.9 1627.0,784.9 1627.0,791.4 1628.7,791.4 1628.7,794.8 1630.5,794.8 1630.5,793.7 1632.3,793.7 1632.3,786.8 1634.2,786.8 1634.2,783.7 1635.9,783.7 1635.9,782.4 1637.5,782.4 1637.5,780.0 1639.2,780.0 1639.2,778.7 1640.8,778.7 1640.8,777.9 1642.5,777.9 1642.5,780.9 1644.2,780.9 1644.2,785.9 1645.8,785.9 1645.8,785.6 1647.5,785.6 1647.5,789.1 1649.1,789.1 1649.1,781.8 1650.8,781.8 1650.8,777.7 1652.3,777.7 1652.3,772.5 1653.7,772.5 1653.7,775.3 1655.2,775.3 1655.2,774.1 1656.7,774.1 1656.7,777.8 1658.2,777.8 1658.2,779.4 1659.6,779.4 1659.6,780.8 1661.1,780.8 1661.1,780.3 1662.6,780.3 1662.6,780.2 1664.1,780.2 1664.1,779.1 1665.7,779.1 1665.7,782.6 1667.4,782.6 1667.4,790.1 1669.1,790.1 1669.1,788.0 1670.7,788.0 1670.7,789.6 1672.4,789.6 1672.4,787.7 1674.0,787.7 1674.0,790.1 1675.5,790.1 1675.5,795.4 1677.0,795.4 1677.0,795.8 1678.5,795.8 1678.5,801.4 1679.9,801.4 1679.9,798.8 1681.4,798.8 1681.4,800.5 1682.9,800.5 1682.9,805.4 1684.4,805.4 1684.4,802.2 1686.0,802.2 1686.0,803.1 1687.5,803.1 1687.5,800.7 1689.1,800.7 1689.1,802.9 1690.6,802.9 1690.6,802.2 1692.3,802.2 1692.3,803.8 1694.0,803.8 1694.0,800.8 1695.6,800.8 1695.6,803.9 1697.3,803.9 1697.3,798.5 1698.9,798.5 1698.9,802.7 1700.6,802.7 1700.6,802.3 1702.3,802.3 1702.3,806.8 1703.9,806.8 1703.9,811.3 1705.4,811.3 1705.4,805.6 1706.9,805.6 1706.9,800.1 1708.3,800.1 1708.3,798.3 1710.2,798.3 1710.2,800.7 1712.0,800.7 1712.0,801.9 1713.9,801.9 1713.9,804.4 1715.4,804.4 1715.4,804.3 1716.8,804.3 1716.8,811.4 1718.3,811.4 1718.3,812.9 1719.8,812.9 1719.8,812.3 1721.3,812.3 1721.3,820.3 1722.7,820.3 1722.7,820.3 1724.3,820.3 1724.3,820.1 1725.9,820.1 1725.9,815.6 1727.5,815.6 1727.5,815.8 1729.1,815.8 1729.1,812.9 1730.6,812.9 1730.6,814.8 1732.2,814.8 1732.2,812.1 1733.8,812.1 1733.8,809.8 1735.5,809.8 1735.5,814.3 1737.1,814.3 1737.1,820.1 1738.8,820.1 1738.8,821.6 1740.4,821.6 1740.4,827.1 1741.9,827.1 1741.9,827.9 1743.4,827.9 1743.4,830.2 1744.9,830.2 1744.9,834.7 1746.7,834.7 1746.7,831.2 1748.6,831.2 1748.6,828.1 1750.4,828.1 1750.4,825.4 1752.1,825.4 1752.1,830.3 1753.7,830.3 1753.7,837.0 1755.2,837.0 1755.2,840.3 1756.7,840.3 1756.7,841.7 1758.2,841.7 1758.2,842.9 1759.7,842.9 1759.7,844.4 1761.3,844.4 1761.3,842.5 1762.8,842.5 1762.8,845.6 1764.4,845.6 1764.4,845.4 1765.9,845.4 1765.9,848.1 1767.7,848.1 1767.7,852.6 1769.6,852.6 1769.6,852.3 1771.4,852.3 1771.4,858.5 1772.9,858.5 1772.9,861.9 1774.4,861.9 1774.4,867.5 1775.9,867.5 1775.9,872.3 1777.5,872.3 1777.5,876.0 1779.2,876.0 1779.2,876.5 1780.8,876.5 1780.8,876.9 1782.5,876.9 1782.5,882.2 1784.3,882.2 1784.3,877.1 1786.2,877.1 1786.2,873.7 1788.0,873.7 1788.0,869.2 1789.9,869.2 1789.9,869.9 1791.7,869.9 1791.7,874.6 1793.6,874.6 1793.6,877.5 1795.0,877.5 1795.0,875.4 1796.5,875.4 1796.5,873.8 1798.0,873.8 1798.0,872.2 1799.7,872.2 1799.7,870.3 1801.3,870.3 1801.3,869.9 1803.0,869.9 1803.0,870.5 1804.6,870.5 1804.6,867.1 1806.1,867.1 1806.1,869.5 1807.6,869.5 1807.6,869.4 1809.1,869.4 1809.1,870.5 1810.5,870.5 1810.5,872.4 1812.0,872.4 1812.0,874.2 1813.5,874.2 1813.5,877.0 1815.0,877.0 1815.0,877.1 1816.4,877.1 1816.4,880.7 1817.9,880.7 1817.9,882.4 1819.6,882.4 1819.6,882.4 1821.2,882.4 1821.2,879.0 1822.9,879.0 1822.9,883.6 1824.6,883.6 1824.6,884.0 1826.8,884.0 1826.8,876.0 1828.4,876.0 1828.4,877.0 1829.9,877.0 1829.9,878.2 1831.5,878.2 1831.5,874.5 1833.1,874.5 1833.1,874.8 1834.7,874.8 1834.7,876.1 1836.3,876.1 1836.3,872.2 1837.8,872.2 1837.8,872.7 1840.1,872.7 1840.1,913.1 1841.5,913.1 1841.5,911.7 1843.0,911.7 1843.0,909.8 1844.5,909.8 1844.5,907.0 1846.1,907.0 1846.1,913.7 1847.8,913.7 1847.8,916.0 1849.5,916.0 1849.5,918.6 1851.1,918.6 1851.1,924.7 1852.8,924.7 1852.8,927.1 1854.4,927.1 1854.4,928.1 1856.1,928.1 1856.1,926.6 1857.8,926.6 1857.8,930.9 1859.6,930.9 1859.6,932.4 1861.5,932.4 1861.5,936.1 1863.3,936.1 1863.3,941.1 1864.8,941.1 1864.8,938.6 1866.4,938.6 1866.4,937.6 1867.9,937.6 1867.9,937.8 1869.5,937.8 1869.5,936.7 1871.0,936.7 1871.0,939.6 1872.7,939.6 1872.7,934.2 1874.4,934.2 1874.4,930.5 1875.9,930.5 1875.9,927.4 1877.5,927.4 1877.5,926.3 1879.0,926.3 1879.0,926.3 1880.6,926.3 1880.6,922.2 1882.1,922.2 1882.1,925.1 1883.6,925.1 1883.6,920.4 1885.1,920.4 1885.1,920.2 1886.5,920.2 1886.5,918.7 1888.0,918.7 1888.0,917.3 1889.5,917.3 1889.5,918.7 1891.0,918.7 1891.0,919.1 1892.4,919.1 1892.4,920.6 1893.9,920.6 1893.9,918.8 1895.4,918.8 1895.4,920.5 1897.1,920.5 1897.1,920.0 1898.7,920.0 1898.7,920.2 1900.4,920.2 1900.4,922.7 1902.0,922.7 1902.0,922.0 1904.2,922.0 1904.2,912.9 1905.4,912.9 1905.4,857.4" fill="none" stroke="#ff0000" stroke-width="3" stroke-linejoin="miter"/>
<path d="M84.3 296.3V306.0M91.5 267.8V276.0M98.7 267.4V277.5M101.7 272.3V289.4M113.1 251.4V261.4M116.9 262.3V268.9M132.2 256.1V269.3M144.0 246.3V254.2M158.5 231.7V249.3M179.6 245.6V248.5M190.3 240.8V252.3M213.7 231.7V242.0M222.6 248.3V258.1M235.8 244.4V252.0M239.2 235.7V250.9M246.8 239.0V252.6M252.9 234.9V249.0M254.4 237.9V251.0M295.2 185.4V198.1M302.8 202.2V207.1M304.4 202.8V210.9M309.2 208.5V214.2M328.3 209.5V213.9M329.8 204.8V217.0M347.6 195.2V201.0M350.7 192.3V212.1M359.8 197.5V208.8M362.9 197.9V204.3M380.9 183.1V186.7M425.8 168.9V173.0M430.6 170.2V178.9M435.1 172.4V176.5M453.2 173.2V176.7M471.3 170.9V179.1M478.1 160.7V176.7M483.2 174.3V180.1M511.2 159.9V174.5M520.5 167.6V171.4M537.5 167.5V174.7M548.2 170.5V176.8M560.4 168.6V175.0M576.7 157.1V161.4M581.3 157.1V165.8M597.0 155.6V164.0M602.7 158.4V162.5M604.3 157.3V166.7M605.9 161.8V168.8M629.8 134.2V143.1M631.4 131.6V149.9M636.8 138.6V148.8M640.2 142.5V150.7M663.1 140.8V149.3M664.8 144.0V152.6M668.2 145.4V152.8M676.7 151.9V165.1M683.5 156.0V163.8M698.7 144.2V154.9M707.2 148.7V156.2M715.7 153.1V157.3M744.2 108.1V115.9M745.9 112.8V124.0M756.5 113.5V125.3M1181.1 125.1V131.2M1218.2 110.1V119.3M1224.3 115.3V125.2M1230.4 119.4V128.6M1242.6 122.5V129.4M1250.4 127.0V130.2M1252.1 125.2V134.2M1269.8 111.4V123.9M1275.1 130.4V133.0M1276.8 129.9V143.3M1281.8 128.3V131.9M1302.2 114.5V124.1M1314.1 114.9V120.4M1327.2 116.9V121.9M1328.7 121.3V128.2M1335.3 131.4V143.5M1371.6 119.1V124.9M1376.7 125.0V134.9M1380.3 129.7V143.3M1392.9 136.8V141.6M1410.9 140.1V144.4M1463.5 105.6V113.5M1468.6 106.4V113.1M1472.0 101.1V115.4" stroke="#1a80ff" stroke-width="1.5" fill="none"/>
<path d="M82.6 294.5V310.9M93.4 262.8V276.8M104.8 274.1V288.5M106.8 261.2V276.0M122.0 266.5V272.9M123.7 261.5V270.9M139.0 246.7V260.3M140.7 245.7V255.1M142.4 239.9V251.7M148.8 248.4V257.4M151.9 246.9V262.7M153.5 241.5V252.0M156.8 237.3V248.5M161.8 231.6V250.7M165.0 234.7V241.5M166.6 228.7V236.4M193.3 238.6V247.7M199.7 232.4V253.2M206.1 223.6V242.7M212.2 228.1V239.4M218.8 246.6V253.4M230.2 241.8V265.1M240.7 242.7V247.0M242.2 236.4V259.2M256.0 237.4V246.9M259.2 229.5V238.0M262.7 215.3V232.2M307.6 208.3V213.3M310.7 203.1V214.2M319.8 215.9V223.4M323.2 214.0V216.0M337.6 206.0V214.1M339.3 205.2V212.9M344.4 196.3V211.8M352.2 203.4V206.4M355.3 203.9V211.2M356.8 199.5V211.8M366.0 200.6V203.8M377.9 180.1V189.4M388.4 180.3V184.0M389.9 180.3V183.7M391.4 179.1V183.2M392.9 177.2V179.8M397.4 169.2V177.3M403.4 168.4V177.6M418.1 175.6V179.5M421.1 169.2V176.4M441.2 170.8V172.4M448.6 169.5V173.4M450.2 169.4V175.4M456.4 172.7V176.3M462.9 171.8V176.0M464.6 173.5V174.6M473.0 172.4V184.4M474.7 169.1V174.5M484.9 167.1V177.8M488.2 166.8V173.3M489.8 167.4V173.9M491.3 165.2V175.4M505.2 168.4V172.9M508.2 170.6V175.0M515.6 168.7V170.4M522.2 163.9V175.8M525.6 168.4V172.6M535.8 168.2V172.5M542.1 169.3V172.7M543.6 168.7V174.7M545.1 168.3V174.3M552.8 173.7V178.5M562.3 167.1V171.4M570.6 160.2V174.9M572.1 159.2V170.7M584.3 154.4V165.3M587.5 156.8V162.8M589.1 155.9V162.2M590.6 152.6V161.7M595.4 153.6V159.4M625.0 141.3V158.2M633.0 138.1V143.7M650.8 146.9V164.2M652.3 150.6V158.5M658.2 137.2V144.3M666.5 145.0V149.0M671.6 143.3V155.8M675.0 146.2V160.1M685.2 159.5V168.3M700.4 150.1V151.1M717.3 153.6V162.0M720.3 153.1V156.1M726.4 141.4V153.4M727.9 139.3V147.8M739.9 125.5V136.2M742.5 111.4V117.0M747.5 117.5V122.1M749.0 120.1V122.1M752.0 119.2V122.9M1188.5 125.2V130.5M1197.0 112.9V130.1M1198.7 117.3V123.0M1203.8 116.1V122.7M1221.2 115.9V120.2M1225.8 119.0V126.1M1233.5 119.4V120.1M1239.6 120.6V126.8M1245.7 123.1V125.6M1247.2 121.8V125.0M1256.9 128.4V132.9M1297.1 116.6V123.0M1298.8 114.7V125.0M1303.9 114.2V129.3M1312.4 105.9V121.8M1315.8 115.6V118.7M1319.2 115.9V118.7M1343.8 138.6V147.0M1350.9 133.6V147.8M1352.5 139.7V149.1M1354.1 135.8V143.5M1357.4 125.1V135.9M1359.1 122.5V131.1M1365.4 118.8V123.3M1382.0 132.5V140.0M1391.3 135.3V142.8M1409.2 139.6V146.8M1414.2 141.1V148.8M1420.9 136.7V142.3M1425.4 137.0V147.5M1431.6 132.6V134.0M1449.0 116.6V127.0M1450.7 114.9V125.1M1455.5 119.7V122.3M1461.8 103.3V118.7M1477.1 116.9V122.9M1478.7 117.8V119.6" stroke="#f00000" stroke-width="1.5" fill="none"/>
<path d="M12.2 350.4H14.6M18.4 347.2H20.7M21.5 345.6H23.9M26.2 339.2H28.7M29.5 340.8H32.0M31.2 340.8H33.6M34.4 339.2H36.9M39.3 339.2H41.7M44.1 339.2H46.5M45.7 339.2H48.1M47.3 339.2H49.6M55.5 352.0H58.0M62.2 348.8H64.5M68.3 350.4H70.7M98.4 276.8H100.9M101.4 280.0H103.4M120.0 268.8H122.5M126.8 259.2H129.3M158.2 244.8H160.7M179.3 248.0H181.6M191.5 243.2H193.8M194.7 246.4H197.2M204.1 227.2H206.6M208.8 236.8H211.1M216.8 251.2H219.3M218.5 251.2H221.2M223.8 262.4H226.2M225.4 262.4H227.7M228.4 256.0H230.7M241.9 243.2H244.2M243.4 243.2H245.8M258.9 230.4H261.3M281.3 212.8H283.8M304.1 209.6H306.5M305.7 209.6H308.1M316.3 219.2H318.6M321.2 214.4H323.7M331.0 216.0H333.4M335.6 212.8H338.1M337.3 212.8H339.8M350.4 204.8H352.7M353.4 208.0H355.8M362.6 201.6H364.9M364.1 201.6H366.5M365.7 201.6H368.0M375.7 182.4H378.4M382.1 182.4H384.4M386.5 182.4H388.9M391.1 179.2H393.4M392.6 179.2H395.0M403.1 172.8H405.5M404.7 172.8H407.2M408.0 174.4H410.5M409.9 172.8H412.3M411.5 172.8H413.9M414.7 177.6H417.0M419.3 174.4H421.6M427.1 174.4H429.5M439.4 171.2H441.7M440.9 171.2H443.1M445.3 171.2H447.6M446.8 171.2H449.1M448.3 171.2H450.7M457.7 171.2H460.2M461.0 174.4H463.4M462.6 174.4H465.1M474.4 171.2H476.9M487.9 171.2H490.3M491.0 168.0H493.4M492.6 168.0H495.0M513.9 169.6H516.1M515.3 169.6H517.6M516.8 169.6H519.3M530.4 172.8H532.9M533.8 169.6H536.3M540.2 171.2H542.6M541.8 171.2H544.1M557.1 169.6H559.4M571.8 161.6H574.1M576.4 160.0H578.7M577.9 160.0H580.3M587.2 158.4H589.6M588.8 158.4H591.1M590.3 158.4H592.7M593.5 156.8H595.9M608.8 158.4H611.2M612.0 156.8H614.4M613.6 156.8H616.0M616.8 153.6H619.2M621.5 150.4H623.9M636.5 148.8H639.0M650.5 152.0H652.8M652.0 152.0H654.3M656.4 140.8H658.7M683.2 160.0H685.7M698.4 150.4H700.9M715.4 155.2H717.8M717.0 155.2H719.3M726.1 144.0H728.4M732.4 137.6H734.9M745.6 121.6H748.0M747.2 121.6H749.5M748.7 121.6H751.0M750.2 121.6H752.5M751.7 121.6H754.0M769.4 129.6H771.7M770.9 129.6H773.3M774.0 128.0H776.4M775.6 128.0H778.0M778.8 126.4H781.1M781.9 128.0H784.3M783.5 128.0H785.9M786.7 129.6H789.1M788.3 129.6H790.7M791.5 132.8H793.9M796.4 134.4H798.8M799.7 132.8H801.9M805.5 134.4H807.8M810.1 137.6H812.4M811.6 137.6H813.9M817.7 140.8H820.0M820.8 139.2H823.1M839.9 134.4H842.2M841.4 134.4H843.7M842.9 134.4H845.2M844.4 134.4H846.8M846.0 134.4H848.4M847.6 134.4H850.0M849.2 134.4H851.6M855.4 131.2H857.7M874.4 126.4H876.6M877.3 128.0H879.6M878.8 128.0H881.2M883.6 128.0H886.0M885.2 128.0H887.6M886.8 128.0H889.2M890.0 129.6H892.3M893.1 128.0H895.5M897.9 129.6H900.3M899.5 129.6H901.9M902.7 129.6H905.1M904.3 129.6H906.7M910.6 126.4H913.0M918.7 128.0H921.2M922.1 129.6H924.6M928.9 123.2H931.4M930.6 123.2H933.1M934.0 124.8H936.5M935.7 124.8H938.2M937.4 124.8H939.9M939.1 124.8H941.6M940.8 124.8H943.3M942.5 124.8H944.9M945.7 126.4H948.0M947.2 126.4H949.6M952.0 126.4H954.4M955.2 128.0H957.7M956.9 128.0H959.4M975.6 136.0H977.9M977.1 136.0H979.4M980.2 136.0H982.5M983.2 134.4H985.7M986.6 136.0H989.1M988.3 136.0H990.8M999.5 132.8H1001.8M1001.0 132.8H1003.4M1002.6 132.8H1004.9M1004.1 132.8H1006.4M1005.6 132.8H1007.9M1010.3 137.6H1012.7M1023.1 144.0H1025.4M1024.6 144.0H1026.9M1026.1 144.0H1028.4M1029.0 142.4H1031.4M1032.1 140.8H1034.4M1033.6 140.8H1035.9M1035.1 140.8H1037.5M1041.3 136.0H1043.6M1044.3 137.6H1046.8M1047.7 136.0H1050.2M1066.4 132.8H1068.7M1069.4 134.4H1071.6M1070.8 134.4H1073.1M1072.3 134.4H1074.7M1078.4 136.0H1080.8M1091.8 136.0H1094.3M1093.5 136.0H1096.0M1095.2 136.0H1097.7M1098.6 134.4H1101.1M1100.3 134.4H1102.8M1102.0 134.4H1104.5M1111.5 136.0H1113.9M1124.3 139.2H1126.6M1125.8 139.2H1127.9M1131.4 137.6H1133.7M1134.4 136.0H1136.8M1137.6 139.2H1140.0M1140.8 140.8H1143.1M1146.8 139.2H1149.1M1148.3 139.2H1150.6M1156.0 140.8H1158.4M1157.6 140.8H1160.0M1165.5 137.6H1167.8M1168.6 136.0H1170.9M1196.7 120.0H1199.2M1201.8 118.4H1204.3M1203.5 118.4H1206.0M1224.0 121.6H1226.3M1231.6 120.0H1234.0M1234.7 121.6H1237.0M1237.8 123.2H1240.1M1239.3 123.2H1241.6M1243.9 124.8H1246.2M1245.4 124.8H1247.7M1253.5 131.2H1255.9M1261.2 126.4H1263.6M1285.4 121.6H1287.8M1287.0 121.6H1289.3M1303.6 116.8H1306.1M1308.7 118.4H1311.2M1313.8 116.8H1316.3M1317.2 118.4H1319.7M1322.3 121.6H1324.6M1358.8 126.4H1361.3M1366.6 123.2H1368.9M1368.1 123.2H1370.5M1372.9 126.4H1375.3M1384.9 137.6H1387.2M1395.6 139.2H1397.9M1402.1 145.6H1404.6M1410.6 144.0H1413.0M1429.7 132.8H1432.1M1432.8 129.6H1435.1M1435.8 128.0H1438.2M1440.4 128.0H1442.8M1443.7 126.4H1446.1M1452.1 120.0H1454.5M1453.7 120.0H1456.0M1456.7 116.8H1459.0M1475.1 118.4H1477.6M1476.8 118.4H1479.2M1490.3 104.0H1492.8M1492.0 104.0H1494.5M1493.7 104.0H1496.2M1495.4 104.0H1497.9M1497.1 104.0H1499.6M1502.2 104.0H1504.7M1507.3 100.8H1509.8M1509.0 100.8H1511.5M1512.4 97.6H1514.9M1515.8 96.0H1518.3M1517.5 96.0H1520.0M1537.9 97.6H1540.4M1539.6 97.6H1542.1M1543.0 99.2H1545.4M1548.0 100.8H1550.5M1549.7 100.8H1552.2M1553.1 99.2H1555.6M1556.5 97.6H1558.9M1558.1 97.6H1560.4M1559.6 97.6H1561.9M1564.2 97.6H1566.7M1569.3 102.4H1571.6M1593.3 100.8H1595.6M1594.8 100.8H1597.1M1599.2 104.0H1601.5M1616.9 115.2H1619.2M1618.4 115.2H1620.7M1624.4 108.8H1626.8M1633.9 104.0H1636.3M1635.5 104.0H1637.9M1643.4 99.2H1645.8M1650.9 97.6H1653.1M1653.8 99.2H1656.1M1655.3 99.2H1657.6M1658.2 99.2H1660.5M1667.1 100.8H1669.4M1671.5 99.2H1673.8M1673.0 99.2H1675.3M1674.5 99.2H1676.8M1676.0 99.2H1678.2M1678.9 96.0H1681.2M1681.9 96.0H1684.1M1684.8 97.6H1687.1M1687.8 99.2H1690.0M1689.2 99.2H1691.5M1690.7 99.2H1693.0M1693.7 97.6H1695.9M1696.6 96.0H1698.9M1698.1 96.0H1700.4M1701.0 97.6H1703.3M1705.5 97.6H1707.7M1706.9 97.6H1709.2M1709.9 99.2H1712.2M1728.8 102.4H1731.1M1733.5 97.6H1735.8M1736.5 100.8H1738.7M1739.4 102.4H1741.7M1743.8 105.6H1746.1M1749.7 110.4H1752.0M1754.5 107.2H1757.0M1757.9 108.8H1760.3M1761.2 110.4H1763.6M1767.7 108.8H1770.0M1770.8 107.2H1773.2M1772.4 107.2H1774.8M1777.1 104.0H1779.5M1778.7 104.0H1781.1M1785.0 105.6H1787.4M1788.1 104.0H1790.4M1797.0 104.0H1799.2M1801.4 102.4H1803.7M1804.3 104.0H1806.7M1805.9 104.0H1808.3M1809.1 105.6H1811.5M1812.2 107.2H1814.6M1830.9 92.8H1833.3M1832.5 92.8H1834.9M1835.6 94.4H1838.0M1837.2 94.4H1839.6M1842.0 94.4H1844.4M1848.6 102.4H1850.9M1853.0 105.6H1855.3M1857.5 110.4H1859.9M1859.1 110.4H1861.6M1862.4 112.0H1864.9M1865.8 108.8H1868.2M1870.7 105.6H1873.1M1875.5 100.8H1877.9M1877.1 100.8H1879.5M1881.8 97.6H1884.1M1884.8 96.0H1887.0M1886.2 96.0H1888.5M1889.2 97.6H1891.5M1895.6 92.8H1898.1M1897.3 92.8H1899.8M1900.6 94.4H1903.1" stroke="#ece58c" stroke-width="2.3" fill="none"/>
<path d="M15.6 352.0L17.1 350.4M17.1 350.4L18.7 347.2M20.2 347.2L21.8 345.6M23.4 345.6L25.0 342.4M25.0 342.4L26.5 339.2M33.1 340.8L34.7 339.2M38.0 340.8L39.6 339.2M41.2 339.2L42.8 337.6M57.5 352.0L59.2 350.4M59.2 350.4L60.9 347.2M65.5 350.4L67.0 348.8M70.2 350.4L71.7 348.8M73.3 352.0L74.9 350.4M74.9 350.4L76.2 347.2M76.2 347.2L77.5 342.4M80.8 310.4L82.6 302.4M84.3 305.6L86.4 294.4M86.4 294.4L87.7 281.6M87.7 281.6L88.9 276.8M88.9 276.8L90.2 270.4M91.5 272.0L93.4 267.2M102.9 280.0L104.8 275.2M104.8 275.2L106.8 267.2M106.8 267.2L108.0 259.2M108.0 259.2L109.3 248.0M122.0 268.8L123.7 265.6M123.7 265.6L125.4 264.0M125.4 264.0L127.1 259.2M132.2 265.6L133.9 264.0M133.9 264.0L135.6 259.2M135.6 259.2L137.3 254.4M137.3 254.4L139.0 252.8M139.0 252.8L140.7 251.2M140.7 251.2L142.4 249.6M145.6 256.0L147.2 252.8M147.2 252.8L148.8 251.2M150.4 254.4L151.9 249.6M151.9 249.6L153.5 248.0M153.5 248.0L155.1 246.4M155.1 246.4L156.8 238.4M160.2 244.8L161.8 240.0M161.8 240.0L163.4 238.4M163.4 238.4L165.0 235.2M165.0 235.2L166.6 230.4M166.6 230.4L167.9 225.6M167.9 225.6L169.1 222.4M176.3 248.0L178.0 246.4M181.1 248.0L182.6 244.8M182.6 244.8L184.2 238.4M184.2 238.4L185.7 236.8M190.3 248.0L191.8 243.2M196.7 246.4L198.4 241.6M198.4 241.6L199.7 233.6M199.7 233.6L201.0 228.8M202.7 230.4L204.4 227.2M210.6 236.8L212.2 235.2M227.2 262.4L228.7 256.0M230.2 256.0L232.2 251.2M232.2 251.2L234.1 246.4M235.8 248.0L237.5 244.8M239.2 246.4L240.7 244.8M240.7 244.8L242.2 243.2M246.8 244.8L248.3 241.6M248.3 241.6L249.8 240.0M249.8 240.0L251.4 236.8M254.4 246.4L256.0 241.6M256.0 241.6L257.6 236.8M257.6 236.8L259.2 230.4M260.8 230.4L262.7 222.4M262.7 222.4L264.6 220.8M264.6 220.8L266.3 216.0M266.3 216.0L268.0 208.0M268.0 208.0L269.7 196.8M273.1 208.0L274.8 204.8M276.5 206.4L278.2 200.0M283.3 212.8L285.0 209.6M285.0 209.6L286.7 200.0M286.7 200.0L288.4 198.4M288.4 198.4L290.1 192.0M291.8 198.4L293.5 193.6M298.2 209.6L299.8 204.8M299.8 204.8L301.3 203.2M309.2 211.2L310.7 209.6M318.1 219.2L319.8 216.0M319.8 216.0L321.5 214.4M323.2 214.4L324.9 211.2M324.9 211.2L326.6 209.6M332.9 216.0L334.4 214.4M334.4 214.4L335.9 212.8M339.3 212.8L341.0 211.2M341.0 211.2L342.7 204.8M342.7 204.8L344.4 198.4M344.4 198.4L346.1 196.8M355.3 208.0L356.8 204.8M356.8 204.8L358.3 200.0M359.8 201.6L361.4 198.4M367.5 201.6L369.0 196.8M369.0 196.8L370.7 195.2M370.7 195.2L372.4 190.4M372.4 190.4L374.1 185.6M374.1 185.6L376.0 182.4M380.9 185.6L382.4 182.4M383.9 182.4L385.3 179.2M388.4 182.4L389.9 180.8M389.9 180.8L391.4 179.2M394.5 179.2L396.0 176.0M396.0 176.0L397.4 174.4M397.4 174.4L398.9 172.8M401.9 176.0L403.4 172.8M410.0 174.4L410.2 172.8M416.5 177.6L418.1 176.0M418.1 176.0L419.6 174.4M421.1 174.4L422.7 172.8M422.7 172.8L424.2 171.2M430.6 176.0L432.1 174.4M432.1 174.4L433.6 172.8M435.1 176.0L436.7 171.2M438.2 172.8L439.7 171.2M444.1 172.8L445.6 171.2M453.2 176.0L454.7 174.4M454.7 174.4L456.4 172.8M456.4 172.8L458.0 171.2M466.2 176.0L467.9 174.4M471.3 177.6L473.0 172.8M473.0 172.8L474.7 171.2M479.8 177.6L481.5 174.4M483.2 176.0L484.9 174.4M484.9 174.4L486.6 172.8M486.6 172.8L488.2 171.2M489.8 171.2L491.3 168.0M499.3 182.4L500.8 179.2M500.8 179.2L502.3 172.8M502.3 172.8L503.8 171.2M503.8 171.2L505.2 169.6M506.7 172.8L508.2 171.2M508.2 171.2L509.7 169.6M512.7 172.8L514.2 169.6M520.5 171.2L522.2 169.6M523.9 171.2L525.6 169.6M525.6 169.6L527.3 168.0M532.4 172.8L534.1 169.6M537.5 172.8L539.0 169.6M543.6 171.2L545.1 169.6M548.2 174.4L549.7 172.8M551.2 176.0L552.8 174.4M552.8 174.4L554.3 171.2M555.8 172.8L557.4 169.6M560.4 171.2L562.3 168.0M562.3 168.0L564.2 156.8M569.0 166.4L570.6 164.8M570.6 164.8L572.1 161.6M573.6 161.6L575.2 158.4M581.3 163.2L582.8 161.6M582.8 161.6L584.3 156.8M585.9 160.0L587.5 158.4M592.2 158.4L593.8 156.8M597.0 163.2L598.6 160.0M598.6 160.0L599.9 156.8M605.9 166.4L607.5 163.2M607.5 163.2L609.1 158.4M610.7 158.4L612.3 156.8M615.5 156.8L617.1 153.6M618.7 153.6L620.2 152.0M620.2 152.0L621.8 150.4M623.4 150.4L625.0 145.6M625.0 145.6L626.6 142.4M626.6 142.4L628.2 137.6M631.4 140.8L633.0 139.2M640.2 150.4L641.9 148.8M647.0 163.2L648.9 156.8M648.9 156.8L650.8 152.0M653.8 152.0L655.3 145.6M655.3 145.6L656.7 140.8M658.2 140.8L659.7 134.4M664.8 148.8L666.5 147.2M669.9 153.6L671.6 150.4M673.3 153.6L675.0 152.0M676.7 160.0L678.4 158.4M678.4 158.4L680.1 155.2M685.2 160.0L686.9 158.4M686.9 158.4L688.6 156.8M688.6 156.8L690.3 152.0M690.3 152.0L692.0 150.4M692.0 150.4L693.7 147.2M693.7 147.2L695.4 144.0M700.4 150.4L702.1 148.8M702.1 148.8L703.8 145.6M707.2 152.0L708.9 148.8M710.6 152.0L712.3 150.4M718.8 155.2L720.3 153.6M720.3 153.6L721.8 148.8M721.8 148.8L723.4 147.2M723.4 147.2L724.9 145.6M724.9 145.6L726.4 144.0M731.0 147.2L732.7 137.6M734.4 137.6L736.1 136.0M736.1 136.0L738.0 134.4M738.0 134.4L739.9 126.4M739.9 126.4L741.2 116.8M741.2 116.8L742.5 113.6M753.5 121.6L755.0 116.8M758.2 123.2L759.9 120.0M759.9 120.0L761.6 116.8M772.8 129.6L774.3 128.0M777.5 128.0L779.1 126.4M795.0 136.0L796.7 134.4M798.3 134.4L800.0 132.8M813.4 137.6L815.0 136.0M825.6 140.8L827.3 137.6M827.3 137.6L829.0 136.0M829.0 136.0L830.7 132.8M838.6 136.0L840.2 134.4M854.2 132.8L855.7 131.2M857.2 131.2L858.7 128.0M860.3 129.6L861.8 128.0M863.3 126.4L864.9 124.8M864.9 124.8L866.4 121.6M866.4 121.6L868.3 120.0M891.8 129.6L893.4 128.0M896.6 131.2L898.2 129.6M906.2 129.6L907.8 126.4M909.4 128.0L910.9 126.4M914.1 128.0L915.7 126.4M924.1 129.6L925.8 128.0M925.8 128.0L927.5 124.8M927.5 124.8L929.2 123.2M949.1 126.4L950.7 124.8M964.0 132.8L965.7 131.2M970.8 145.6L972.5 144.0M972.5 144.0L974.2 140.8M974.2 140.8L975.9 136.0M982.0 136.0L983.5 134.4M993.7 140.8L995.2 137.6M995.2 137.6L996.7 136.0M996.7 136.0L998.3 134.4M998.3 134.4L999.8 132.8M1021.9 145.6L1023.4 144.0M1027.9 144.0L1029.3 142.4M1030.9 142.4L1032.4 140.8M1038.5 139.2L1040.0 137.6M1040.0 137.6L1041.6 136.0M1046.3 137.6L1048.0 136.0M1054.8 142.4L1056.3 140.8M1056.3 140.8L1057.8 139.2M1060.7 134.4L1062.2 132.8M1062.2 132.8L1063.7 131.2M1082.0 137.6L1083.7 136.0M1085.4 137.6L1087.1 136.0M1087.1 136.0L1088.7 134.4M1090.4 137.6L1092.1 136.0M1097.2 136.0L1098.9 134.4M1104.0 134.4L1105.7 131.2M1118.5 145.6L1120.0 144.0M1120.0 144.0L1121.5 140.8M1123.0 142.4L1124.6 139.2M1127.4 139.2L1128.6 137.6M1128.6 137.6L1130.2 136.0M1133.2 137.6L1134.7 136.0M1142.6 140.8L1144.1 139.2M1144.1 139.2L1145.6 137.6M1150.1 139.2L1151.6 136.0M1159.5 140.8L1161.1 139.2M1164.3 142.4L1165.8 137.6M1167.3 137.6L1168.9 136.0M1171.9 137.6L1173.5 134.4M1173.5 134.4L1175.0 132.8M1175.0 132.8L1176.5 131.2M1176.5 131.2L1178.0 129.6M1178.0 129.6L1179.6 128.0M1181.1 129.6L1182.5 128.0M1184.0 129.6L1185.5 126.4M1187.0 129.6L1188.5 126.4M1190.0 129.6L1191.8 123.2M1193.5 126.4L1195.3 124.8M1195.3 124.8L1197.0 120.0M1200.4 121.6L1202.1 118.4M1205.5 118.4L1207.2 116.8M1207.2 116.8L1208.9 110.4M1215.1 116.8L1216.7 113.6M1219.7 120.0L1221.2 118.4M1225.8 121.6L1227.4 120.0M1230.4 123.2L1231.9 120.0M1242.6 126.4L1244.2 124.8M1252.1 132.8L1253.8 131.2M1255.4 131.2L1256.9 129.6M1256.9 129.6L1258.4 124.8M1258.4 124.8L1259.9 123.2M1263.1 126.4L1264.7 123.2M1264.7 123.2L1266.3 116.8M1266.3 116.8L1267.8 115.2M1276.8 134.4L1278.5 132.8M1278.5 132.8L1280.1 129.6M1288.8 121.6L1290.4 120.0M1290.4 120.0L1292.0 115.2M1295.4 121.6L1297.1 116.8M1297.1 116.8L1298.8 115.2M1302.2 120.0L1303.9 116.8M1307.3 120.0L1309.0 118.4M1310.7 118.4L1312.4 115.2M1324.1 121.6L1325.6 120.0M1340.4 150.4L1342.1 145.6M1342.1 145.6L1343.8 140.8M1343.8 140.8L1345.5 134.4M1349.3 147.2L1350.9 144.0M1350.9 144.0L1352.5 142.4M1352.5 142.4L1354.1 137.6M1354.1 137.6L1355.7 132.8M1355.7 132.8L1357.4 129.6M1357.4 129.6L1359.1 126.4M1360.8 126.4L1362.3 124.8M1362.3 124.8L1363.8 123.2M1363.8 123.2L1365.4 121.6M1376.7 134.4L1378.6 132.8M1380.3 137.6L1382.0 136.0M1383.7 139.2L1385.2 137.6M1388.3 140.8L1389.8 139.2M1389.8 139.2L1391.3 137.6M1394.4 142.4L1395.9 139.2M1404.1 145.6L1405.8 142.4M1407.5 144.0L1409.2 140.8M1412.5 144.0L1414.2 142.4M1414.2 142.4L1415.9 139.2M1417.6 142.4L1419.3 140.8M1419.3 140.8L1420.9 137.6M1423.9 142.4L1425.4 139.2M1427.0 142.4L1428.5 139.2M1428.5 139.2L1430.0 132.8M1431.6 132.8L1433.1 129.6M1434.6 129.6L1436.1 128.0M1437.7 128.0L1439.2 126.4M1442.3 128.0L1444.0 126.4M1445.6 126.4L1447.3 121.6M1447.3 121.6L1449.0 120.0M1449.0 120.0L1450.7 118.4M1455.5 120.0L1457.0 116.8M1458.5 116.8L1460.1 115.2M1460.1 115.2L1461.8 110.4M1463.5 112.0L1465.2 110.4M1465.2 110.4L1466.9 107.2M1468.6 108.8L1470.3 104.0M1478.7 118.4L1480.4 116.8M1480.4 116.8L1482.1 113.6M1482.1 113.6L1483.8 112.0M1483.8 112.0L1485.5 110.4M1485.5 110.4L1487.2 107.2M1487.2 107.2L1488.9 105.6M1488.9 105.6L1490.6 104.0M1500.8 105.6L1502.5 104.0M1504.2 104.0L1505.9 102.4M1505.9 102.4L1507.6 100.8M1511.0 100.8L1512.7 97.6M1514.4 97.6L1516.1 96.0M1519.5 96.0L1521.2 94.4M1521.2 94.4L1522.5 92.8M1522.5 92.8L1523.7 91.2M1528.8 108.8L1530.4 105.6M1530.4 105.6L1531.9 102.4M1531.9 102.4L1533.4 99.2M1533.4 99.2L1534.9 97.6M1534.9 97.6L1536.5 94.4M1546.6 102.4L1548.3 100.8M1551.7 100.8L1553.4 99.2M1555.1 99.2L1556.8 97.6M1562.9 99.2L1564.5 97.6M1572.6 104.0L1574.1 102.4M1577.2 104.0L1578.6 102.4M1578.6 102.4L1580.0 97.6M1580.0 97.6L1581.8 94.4M1583.7 96.0L1585.5 92.8M1615.7 116.8L1617.2 115.2M1620.2 115.2L1621.6 113.6M1621.6 113.6L1623.1 112.0M1623.1 112.0L1624.7 108.8M1626.3 108.8L1627.9 107.2M1627.9 107.2L1629.5 105.6M1632.6 105.6L1634.2 104.0M1640.5 102.4L1642.1 100.8M1642.1 100.8L1643.7 99.2M1646.7 99.2L1648.2 97.6M1648.2 97.6L1649.7 96.0M1663.0 100.8L1664.4 99.2M1668.9 100.8L1670.3 99.2M1677.7 99.2L1679.2 96.0M1692.5 99.2L1694.0 97.6M1695.4 97.6L1696.9 96.0M1704.3 99.2L1705.8 97.6M1713.1 100.8L1714.6 99.2M1714.6 99.2L1716.1 97.6M1722.7 108.8L1724.3 107.2M1724.3 107.2L1725.9 105.6M1725.9 105.6L1727.5 104.0M1727.5 104.0L1729.1 102.4M1730.6 102.4L1732.2 99.2M1732.2 99.2L1733.8 97.6M1751.5 110.4L1753.2 108.8M1753.2 108.8L1754.8 107.2M1764.8 112.0L1766.4 110.4M1766.4 110.4L1768.0 108.8M1769.5 108.8L1771.1 107.2M1774.3 107.2L1775.9 105.6M1775.9 105.6L1777.4 104.0M1782.2 105.6L1783.8 104.0M1791.4 105.6L1792.8 102.4M1794.3 104.0L1795.8 102.4M1798.7 104.0L1800.2 102.4M1814.1 107.2L1815.7 105.6M1815.7 105.6L1817.2 104.0M1817.2 104.0L1818.7 102.4M1818.7 102.4L1820.1 100.8M1820.1 100.8L1821.6 99.2M1821.6 99.2L1823.1 97.6M1823.1 97.6L1824.6 96.0M1826.2 96.0L1827.9 94.4M1827.9 94.4L1829.5 91.2M1839.1 94.4L1840.7 92.8M1864.4 112.0L1866.1 108.8M1867.7 108.8L1869.4 107.2M1869.4 107.2L1871.0 105.6M1872.6 105.6L1874.2 104.0M1874.2 104.0L1875.8 100.8M1879.0 100.8L1880.5 99.2M1880.5 99.2L1882.1 97.6M1883.6 97.6L1885.1 96.0M1891.0 97.6L1892.6 96.0M1892.6 96.0L1894.3 94.4M1894.3 94.4L1895.9 92.8" stroke="#f00000" stroke-width="2.3" fill="none"/>
<path d="M14.1 350.4L15.6 352.0M28.2 339.2L29.8 340.8M36.4 339.2L38.0 340.8M42.8 337.6L44.4 339.2M49.1 339.2L50.7 340.8M60.9 347.2L62.5 348.8M64.0 348.8L65.5 350.4M67.0 348.8L68.6 350.4M71.7 348.8L73.3 352.0M77.5 342.4L78.7 350.4M82.6 302.4L84.3 305.6M90.2 270.4L91.5 272.0M93.4 267.2L95.3 268.8M95.3 268.8L97.0 270.4M97.0 270.4L98.7 276.8M100.4 276.8L101.7 280.0M109.3 248.0L111.2 252.8M111.2 252.8L113.1 256.0M113.1 256.0L115.0 264.0M115.0 264.0L116.9 265.6M116.9 265.6L118.6 267.2M118.6 267.2L120.3 268.8M128.8 259.2L130.5 260.8M130.5 260.8L132.2 265.6M142.4 249.6L144.0 251.2M144.0 251.2L145.6 256.0M148.8 251.2L150.4 254.4M156.8 238.4L158.5 244.8M169.1 222.4L171.0 233.6M171.0 233.6L173.0 241.6M173.0 241.6L174.7 243.2M174.7 243.2L176.3 248.0M178.0 246.4L179.6 248.0M185.7 236.8L187.2 240.0M187.2 240.0L188.7 243.2M188.7 243.2L190.3 248.0M193.3 243.2L195.0 246.4M201.0 228.8L202.7 230.4M206.1 227.2L207.6 228.8M207.6 228.8L209.1 236.8M212.2 235.2L213.7 240.0M213.7 240.0L215.4 241.6M215.4 241.6L217.1 251.2M220.7 251.2L222.6 257.6M222.6 257.6L224.1 262.4M234.1 246.4L235.8 248.0M237.5 244.8L239.2 246.4M245.3 243.2L246.8 244.8M251.4 236.8L252.9 243.2M252.9 243.2L254.4 246.4M269.7 196.8L271.4 206.4M271.4 206.4L273.1 208.0M274.8 204.8L276.5 206.4M278.2 200.0L279.9 211.2M279.9 211.2L281.6 212.8M290.1 192.0L291.8 198.4M293.5 193.6L295.2 195.2M295.2 195.2L296.7 203.2M296.7 203.2L298.2 209.6M301.3 203.2L302.8 206.4M302.8 206.4L304.4 209.6M307.6 209.6L309.2 211.2M310.7 209.6L312.1 211.2M312.1 211.2L313.6 214.4M313.6 214.4L315.1 216.0M315.1 216.0L316.6 219.2M326.6 209.6L328.3 211.2M328.3 211.2L329.8 214.4M329.8 214.4L331.3 216.0M346.1 196.8L347.6 198.4M347.6 198.4L349.1 200.0M349.1 200.0L350.7 204.8M352.2 204.8L353.7 208.0M358.3 200.0L359.8 201.6M361.4 198.4L362.9 201.6M377.9 182.4L379.4 184.0M379.4 184.0L380.9 185.6M385.3 179.2L386.8 182.4M398.9 172.8L400.4 174.4M400.4 174.4L401.9 176.0M406.7 172.8L408.3 174.4M413.4 172.8L415.0 177.6M424.2 171.2L425.8 172.8M425.8 172.8L427.4 174.4M429.0 174.4L430.6 176.0M433.6 172.8L435.1 176.0M436.7 171.2L438.2 172.8M442.6 171.2L444.1 172.8M450.2 171.2L451.7 174.4M451.7 174.4L453.2 176.0M459.7 171.2L461.3 174.4M464.6 174.4L466.2 176.0M467.9 174.4L469.6 176.0M469.6 176.0L471.3 177.6M476.4 171.2L478.1 174.4M478.1 174.4L479.8 177.6M481.5 174.4L483.2 176.0M494.5 168.0L496.1 172.8M496.1 172.8L497.7 177.6M497.7 177.6L499.3 182.4M505.2 169.6L506.7 172.8M509.7 169.6L511.2 171.2M511.2 171.2L512.7 172.8M518.8 169.6L520.5 171.2M522.2 169.6L523.9 171.2M527.3 168.0L529.0 171.2M529.0 171.2L530.7 172.8M535.8 169.6L537.5 172.8M539.0 169.6L540.5 171.2M545.1 169.6L546.7 171.2M546.7 171.2L548.2 174.4M549.7 172.8L551.2 176.0M554.3 171.2L555.8 172.8M558.9 169.6L560.4 171.2M564.2 156.8L565.8 160.0M565.8 160.0L567.4 164.8M567.4 164.8L569.0 166.4M575.2 158.4L576.7 160.0M579.8 160.0L581.3 163.2M584.3 156.8L585.9 160.0M595.4 156.8L597.0 163.2M599.9 156.8L601.1 158.4M601.1 158.4L602.7 161.6M602.7 161.6L604.3 163.2M604.3 163.2L605.9 166.4M628.2 137.6L629.8 139.2M629.8 139.2L631.4 140.8M633.0 139.2L634.9 144.0M634.9 144.0L636.8 148.8M638.5 148.8L640.2 150.4M641.9 148.8L643.6 153.6M643.6 153.6L645.3 156.8M645.3 156.8L647.0 163.2M659.7 134.4L661.4 140.8M661.4 140.8L663.1 144.0M663.1 144.0L664.8 148.8M666.5 147.2L668.2 152.0M668.2 152.0L669.9 153.6M671.6 150.4L673.3 153.6M675.0 152.0L676.7 160.0M680.1 155.2L681.8 156.8M681.8 156.8L683.5 160.0M695.4 144.0L697.1 148.8M697.1 148.8L698.7 150.4M703.8 145.6L705.5 150.4M705.5 150.4L707.2 152.0M708.9 148.8L710.6 152.0M712.3 150.4L714.0 153.6M714.0 153.6L715.7 155.2M727.9 144.0L729.5 145.6M729.5 145.6L731.0 147.2M742.5 113.6L744.2 115.2M744.2 115.2L745.9 121.6M755.0 116.8L756.5 121.6M756.5 121.6L758.2 123.2M761.6 116.8L763.3 120.0M763.3 120.0L764.9 124.8M764.9 124.8L766.6 126.4M766.6 126.4L768.2 128.0M768.2 128.0L769.7 129.6M780.6 126.4L782.2 128.0M785.4 128.0L787.0 129.6M790.2 129.6L791.8 132.8M793.4 132.8L795.0 136.0M802.7 131.2L804.3 132.8M804.3 132.8L805.8 134.4M807.3 134.4L808.8 136.0M808.8 136.0L810.4 137.6M815.0 136.0L816.5 137.6M816.5 137.6L818.0 140.8M830.7 132.8L832.3 134.4M833.9 134.4L835.5 136.0M835.5 136.0L837.1 139.2M851.1 134.4L852.6 136.0M858.7 128.0L860.3 129.6M868.3 120.0L870.2 121.6M870.2 121.6L871.7 123.2M871.7 123.2L873.2 124.8M873.2 124.8L874.7 126.4M876.1 126.4L877.6 128.0M880.7 128.0L882.3 129.6M888.7 128.0L890.3 129.6M907.8 126.4L909.4 128.0M912.5 126.4L914.1 128.0M915.7 126.4L917.3 128.0M920.7 128.0L922.4 129.6M932.6 123.2L934.3 124.8M944.4 124.8L946.0 126.4M950.7 124.8L952.3 126.4M953.9 126.4L955.5 128.0M958.9 128.0L960.6 129.6M962.3 128.0L964.0 132.8M965.7 131.2L967.4 136.0M967.4 136.0L969.1 139.2M969.1 139.2L970.8 145.6M985.2 134.4L986.9 136.0M990.3 136.0L992.0 139.2M992.0 139.2L993.7 140.8M1007.4 132.8L1009.0 134.4M1009.0 134.4L1010.6 137.6M1012.2 137.6L1013.7 140.8M1013.7 140.8L1015.3 142.4M1015.3 142.4L1017.0 144.0M1017.0 144.0L1018.7 145.6M1018.7 145.6L1020.4 147.2M1043.1 136.0L1044.6 137.6M1049.7 136.0L1051.4 137.6M1051.4 137.6L1053.1 140.8M1053.1 140.8L1054.8 142.4M1063.7 131.2L1065.2 132.8M1068.2 132.8L1069.7 134.4M1075.7 132.8L1077.2 134.4M1077.2 134.4L1078.7 136.0M1080.3 136.0L1082.0 137.6M1083.7 136.0L1085.4 137.6M1105.7 131.2L1107.3 132.8M1107.3 132.8L1108.8 134.4M1110.3 134.4L1111.8 136.0M1113.4 136.0L1115.1 139.2M1115.1 139.2L1116.8 142.4M1116.8 142.4L1118.5 145.6M1121.5 140.8L1123.0 142.4M1130.2 136.0L1131.7 137.6M1136.3 136.0L1137.9 139.2M1139.5 139.2L1141.1 140.8M1145.6 137.6L1147.1 139.2M1151.6 136.0L1153.1 137.6M1153.1 137.6L1154.7 139.2M1154.7 139.2L1156.3 140.8M1162.7 139.2L1164.3 142.4M1170.4 136.0L1171.9 137.6M1179.6 128.0L1181.1 129.6M1182.5 128.0L1184.0 129.6M1185.5 126.4L1187.0 129.6M1188.5 126.4L1190.0 129.6M1191.8 123.2L1193.5 126.4M1198.7 120.0L1200.4 121.6M1208.9 110.4L1210.6 112.0M1210.6 112.0L1212.1 113.6M1212.1 113.6L1213.6 115.2M1213.6 115.2L1215.1 116.8M1216.7 113.6L1218.2 118.4M1218.2 118.4L1219.7 120.0M1221.2 118.4L1222.8 120.0M1222.8 120.0L1224.3 121.6M1227.4 120.0L1228.9 121.6M1228.9 121.6L1230.4 123.2M1233.5 120.0L1235.0 121.6M1236.5 121.6L1238.1 123.2M1241.1 123.2L1242.6 126.4M1247.2 124.8L1248.7 128.0M1248.7 128.0L1250.4 129.6M1250.4 129.6L1252.1 132.8M1259.9 123.2L1261.5 126.4M1267.8 115.2L1269.8 118.4M1269.8 118.4L1271.7 123.2M1271.7 123.2L1273.4 131.2M1273.4 131.2L1275.1 132.8M1275.1 132.8L1276.8 134.4M1280.1 129.6L1281.8 131.2M1292.0 115.2L1293.7 116.8M1293.7 116.8L1295.4 121.6M1298.8 115.2L1300.5 116.8M1300.5 116.8L1302.2 120.0M1305.6 116.8L1307.3 120.0M1312.4 115.2L1314.1 116.8M1315.8 116.8L1317.5 118.4M1319.2 118.4L1320.9 120.0M1320.9 120.0L1322.6 121.6M1325.6 120.0L1327.2 121.6M1327.2 121.6L1328.7 123.2M1328.7 123.2L1330.2 126.4M1330.2 126.4L1331.9 131.2M1331.9 131.2L1333.6 136.0M1333.6 136.0L1335.3 137.6M1335.3 137.6L1337.0 142.4M1337.0 142.4L1338.7 145.6M1338.7 145.6L1340.4 150.4M1345.5 134.4L1347.4 142.4M1347.4 142.4L1349.3 147.2M1365.4 121.6L1366.9 123.2M1370.0 123.2L1371.6 124.8M1371.6 124.8L1373.2 126.4M1374.8 126.4L1376.7 134.4M1378.6 132.8L1380.3 137.6M1382.0 136.0L1383.7 139.2M1386.7 137.6L1388.3 140.8M1391.3 137.6L1392.9 139.2M1392.9 139.2L1394.4 142.4M1397.4 139.2L1399.0 140.8M1399.0 140.8L1400.7 144.0M1400.7 144.0L1402.4 145.6M1405.8 142.4L1407.5 144.0M1409.2 140.8L1410.9 144.0M1415.9 139.2L1417.6 142.4M1420.9 137.6L1422.4 139.2M1422.4 139.2L1423.9 142.4M1425.4 139.2L1427.0 142.4M1439.2 126.4L1440.7 128.0M1450.7 118.4L1452.4 120.0M1461.8 110.4L1463.5 112.0M1466.9 107.2L1468.6 108.8M1470.3 104.0L1472.0 112.0M1472.0 112.0L1473.7 115.2M1473.7 115.2L1475.4 118.4M1499.1 104.0L1500.8 105.6M1523.7 91.2L1525.4 97.6M1525.4 97.6L1527.1 102.4M1527.1 102.4L1528.8 108.8M1536.5 94.4L1538.2 97.6M1541.6 97.6L1543.3 99.2M1544.9 99.2L1546.6 102.4M1561.4 97.6L1562.9 99.2M1566.2 97.6L1567.9 100.8M1567.9 100.8L1569.6 102.4M1571.1 102.4L1572.6 104.0M1575.7 102.4L1577.2 104.0M1581.8 94.4L1583.7 96.0M1585.5 92.8L1587.2 94.4M1587.2 94.4L1588.8 97.6M1588.8 97.6L1590.5 99.2M1592.1 99.2L1593.6 100.8M1596.6 100.8L1598.0 102.4M1598.0 102.4L1599.5 104.0M1601.0 104.0L1602.7 105.6M1602.7 105.6L1604.3 108.8M1604.3 108.8L1606.0 110.4M1606.0 110.4L1607.6 112.0M1607.6 112.0L1609.3 113.6M1609.3 113.6L1611.0 115.2M1611.0 115.2L1612.6 116.8M1629.5 105.6L1631.0 107.2M1649.7 96.0L1651.2 97.6M1652.6 97.6L1654.1 99.2M1683.6 96.0L1685.1 97.6M1686.6 97.6L1688.1 99.2M1699.9 96.0L1701.3 97.6M1702.8 97.6L1704.3 99.2M1708.7 97.6L1710.2 99.2M1711.7 99.2L1713.1 100.8M1716.1 97.6L1717.8 102.4M1717.8 102.4L1719.4 104.0M1719.4 104.0L1721.1 107.2M1721.1 107.2L1722.7 108.8M1735.3 97.6L1736.8 100.8M1738.2 100.8L1739.7 102.4M1741.2 102.4L1742.7 104.0M1742.7 104.0L1744.1 105.6M1745.6 105.6L1747.1 107.2M1748.6 108.8L1750.0 110.4M1756.5 107.2L1758.2 108.8M1759.8 108.8L1761.5 110.4M1780.6 104.0L1782.2 105.6M1783.8 104.0L1785.3 105.6M1789.9 104.0L1791.4 105.6M1792.8 102.4L1794.3 104.0M1795.8 102.4L1797.3 104.0M1803.2 102.4L1804.6 104.0M1807.8 104.0L1809.4 105.6M1829.5 91.2L1831.2 92.8M1834.4 92.8L1835.9 94.4M1840.7 92.8L1842.3 94.4M1843.9 94.4L1845.6 97.6M1845.6 97.6L1847.2 100.8M1847.2 100.8L1848.9 102.4M1850.4 102.4L1851.9 104.0M1851.9 104.0L1853.3 105.6M1854.8 105.6L1856.3 107.2M1856.3 107.2L1857.8 110.4M1861.1 110.4L1862.7 112.0M1888.0 96.0L1889.5 97.6M1899.3 92.8L1900.9 94.4M1902.6 94.4L1904.2 96.0" stroke="#1a80ff" stroke-width="2.3" fill="none"/>
<path d="M82.0 646.1V657.7M86.2 632.5V650.5M91.9 591.1V600.6M101.7 589.5V614.3M103.2 603.1V622.6M107.4 627.1V634.0M114.4 603.2V622.7M115.9 598.0V618.8M130.0 586.9V615.9M132.8 608.0V618.1M134.2 612.9V625.5M156.8 603.7V621.6M163.6 602.3V614.7M170.3 609.1V624.8M173.7 613.0V624.5M182.8 618.5V638.6M186.1 621.3V629.3M211.8 575.1V592.2M214.7 589.6V601.8M225.9 575.1V599.8M235.4 578.9V592.3M247.1 569.2V578.3M271.1 531.5V538.7M272.5 533.2V546.8M302.2 513.1V517.2M309.8 520.3V527.6M322.1 497.6V513.3M323.7 507.3V514.6M327.0 515.1V522.1M340.5 501.0V517.9M347.1 500.6V509.4M356.6 465.3V472.8M360.0 465.5V471.8M370.2 455.2V465.3M383.4 453.5V463.8M388.3 455.4V462.1M426.4 418.0V426.7M436.9 434.5V442.9M451.8 437.9V451.5M455.0 440.7V445.8M464.3 447.6V456.4M472.8 446.3V455.6M474.3 447.0V455.3M475.8 447.5V455.3M477.3 453.6V458.4M478.8 450.2V465.5M496.5 457.5V467.8M520.0 456.9V465.1M521.6 458.2V472.5M532.8 456.9V463.1M545.2 455.5V465.7M546.9 460.1V473.1M548.6 462.8V467.9M570.3 455.1V463.0M583.4 457.6V463.9M629.8 453.5V458.2M641.6 482.4V495.9M643.3 486.2V502.0M649.3 500.4V514.1M661.2 486.9V497.6M669.2 519.4V526.5M670.7 524.6V528.6M691.5 503.2V510.9M709.5 492.3V499.7M720.7 488.7V497.8M733.5 494.5V503.8M735.0 500.6V509.3M762.1 460.4V466.6M778.4 459.8V466.2M784.4 474.9V480.8M795.3 481.4V485.7M806.7 476.5V482.7M813.1 478.3V481.8M824.3 475.2V483.5M825.9 479.7V484.2M827.6 482.1V486.5M829.4 483.6V489.2M831.1 487.2V490.1M860.2 477.0V485.6M861.8 483.1V490.4M865.0 483.7V487.2M874.9 475.9V483.0M891.3 475.1V483.1M912.8 477.3V481.9M956.5 458.1V464.3M967.5 465.6V473.6M1022.8 461.0V468.2M1038.7 462.4V465.4M1061.7 447.5V454.9M1112.2 431.4V434.7M1115.4 434.4V440.5M1117.0 436.6V440.2M1156.9 439.4V444.0M1164.9 445.9V450.8M1171.7 444.0V446.8M1181.6 444.6V451.9M1206.6 446.8V451.4M1212.9 446.3V455.7M1264.7 478.0V485.5M1268.1 477.0V487.6M1311.9 465.4V470.7M1329.2 463.1V467.2M1335.5 470.1V474.0M1369.1 454.6V458.2M1372.4 455.1V460.5M1377.4 458.4V464.0" stroke="#1a80ff" stroke-width="1.5" fill="none"/>
<path d="M83.4 638.5V653.6M84.8 630.9V650.3M111.6 610.0V620.0M118.7 602.0V618.0M120.1 612.5V613.2M121.5 607.9V616.7M125.7 605.7V611.4M146.6 602.8V614.2M155.1 602.6V616.6M161.9 592.9V610.6M165.3 603.5V614.9M168.6 610.9V621.5M178.0 609.4V637.5M184.5 626.9V630.9M187.8 620.8V631.1M206.2 579.5V594.8M207.6 573.9V586.9M210.4 579.4V587.8M218.9 598.0V603.5M230.4 585.1V603.2M233.7 578.2V593.6M242.0 575.9V584.7M245.4 571.0V582.5M250.5 567.8V577.3M257.3 556.9V576.5M265.5 537.6V558.6M268.3 532.0V548.3M269.7 524.7V545.5M278.2 547.7V551.4M279.6 548.3V554.0M285.2 556.3V564.9M287.0 544.0V558.8M288.8 539.0V560.6M293.7 521.2V531.9M300.8 513.0V514.0M317.7 507.8V521.8M328.6 508.7V521.8M333.6 509.9V523.8M338.9 501.3V514.5M343.8 501.3V516.0M350.2 484.7V512.9M353.3 460.2V470.7M355.0 462.7V469.4M363.4 465.5V471.8M366.8 458.1V475.3M378.6 470.0V472.3M380.2 453.8V478.6M407.0 430.3V449.8M411.5 430.4V446.6M414.5 429.8V440.6M417.4 424.7V435.0M418.9 417.9V431.3M420.4 416.6V427.1M421.9 422.7V433.0M423.4 422.2V426.9M435.4 432.4V441.6M438.4 439.4V441.2M448.9 437.8V443.0M453.4 442.5V446.3M467.8 442.1V451.3M494.9 457.1V463.9M498.1 459.0V469.7M502.9 459.4V464.2M512.2 453.2V466.8M534.4 460.5V462.2M553.5 458.7V466.8M556.5 455.7V460.8M558.0 448.2V460.6M581.8 456.8V470.9M593.1 458.2V474.4M601.4 470.2V472.7M603.0 467.6V476.2M607.8 467.6V472.4M611.0 460.7V476.9M616.0 458.8V463.2M623.8 455.3V463.3M625.3 455.4V459.5M626.8 453.6V459.9M634.3 460.0V462.1M635.8 458.7V460.8M646.3 497.3V507.9M647.8 490.3V505.8M653.7 494.8V502.9M655.2 492.2V500.1M659.2 485.2V492.2M673.7 523.1V529.3M688.1 506.1V511.7M689.8 506.9V515.7M694.8 499.1V510.6M706.3 493.0V498.9M711.1 489.2V498.0M714.3 491.0V497.8M719.0 494.4V499.2M725.7 489.7V503.5M727.4 492.9V501.2M737.0 499.1V509.6M749.4 464.7V470.9M750.9 463.5V473.7M768.4 477.0V480.1M793.8 481.2V482.8M798.4 480.8V488.0M805.2 478.0V484.3M822.7 472.5V480.4M838.1 483.3V487.2M844.3 475.3V482.4M863.4 484.5V487.5M869.8 476.1V483.2M886.5 473.7V480.2M889.7 475.1V479.8M896.1 478.5V482.2M909.4 481.8V484.4M917.9 471.6V476.3M919.6 471.3V473.9M924.4 472.5V481.3M940.0 470.4V474.9M958.0 461.8V464.2M962.7 462.6V465.6M975.8 467.8V470.2M977.4 463.6V470.5M993.8 459.2V463.6M997.1 459.4V463.1M998.8 459.1V467.1M1002.2 457.5V466.3M1014.9 459.7V467.1M1021.3 459.6V466.5M1025.8 462.9V466.0M1040.4 458.9V464.7M1063.2 449.3V460.3M1070.0 439.5V447.1M1073.2 444.8V452.0M1081.7 438.4V443.6M1085.1 439.0V441.8M1095.1 440.3V449.6M1104.3 438.4V441.7M1107.4 433.6V439.2M1109.0 430.9V434.3M1110.6 431.4V434.1M1137.6 444.2V449.1M1147.3 435.5V442.1M1166.6 446.4V451.6M1176.8 444.6V449.1M1183.2 449.0V451.2M1186.5 446.6V453.2M1203.3 449.3V450.7M1209.9 449.3V453.4M1215.9 444.5V450.9M1288.9 472.5V483.9M1295.3 471.3V475.7M1297.0 466.1V475.1M1298.6 463.3V473.7M1313.6 466.9V471.9M1316.8 460.2V464.9M1318.4 456.4V463.3M1320.0 452.0V466.2M1370.8 454.1V459.8" stroke="#f00000" stroke-width="1.5" fill="none"/>
<path d="M17.3 708.8H19.8M19.0 708.8H21.5M20.7 708.8H23.2M35.6 702.4H38.0M38.8 702.4H41.2M48.9 699.2H51.4M58.9 705.6H61.3M72.4 704.0H74.9M74.1 704.0H76.6M75.8 704.0H78.2M118.4 612.8H120.6M119.8 612.8H122.0M125.4 608.0H127.6M153.1 608.0H155.6M174.8 622.4H177.0M195.8 627.2H198.2M205.9 580.8H208.1M211.5 590.4H213.7M235.1 585.6H237.5M240.0 576.0H242.5M257.0 558.4H259.5M260.4 553.6H262.9M276.5 550.4H278.7M277.9 550.4H280.1M279.3 550.4H281.5M294.8 521.6H297.0M299.0 513.6H301.3M314.6 513.6H316.8M318.8 507.2H321.0M333.3 515.2H335.8M340.2 507.2H342.7M346.8 507.2H349.2M353.0 465.6H355.5M356.3 467.2H358.8M361.4 467.2H363.9M375.0 470.4H377.5M376.7 470.4H379.1M384.7 457.6H387.2M390.8 444.8H393.0M393.6 440.0H396.2M397.1 443.2H399.7M406.7 441.6H409.0M408.2 441.6H410.5M412.7 438.4H415.0M418.6 424.0H420.9M420.1 424.0H422.4M421.6 424.0H423.9M423.1 424.0H425.4M433.6 436.8H435.9M436.6 440.0H438.9M448.6 440.0H450.8M454.7 444.8H457.1M457.9 446.4H460.3M461.0 448.0H463.3M480.0 459.2H482.3M486.6 464.0H489.0M489.8 465.6H492.2M524.5 459.2H526.9M532.5 460.8H534.9M537.3 467.2H539.6M538.8 467.2H541.1M562.2 456.0H564.5M576.5 462.4H579.0M586.3 464.0H588.7M587.9 464.0H590.3M591.1 465.6H593.6M592.8 465.6H595.2M599.4 472.0H601.9M601.1 472.0H603.5M607.5 468.8H609.9M619.0 460.8H621.3M623.5 456.0H625.8M625.0 456.0H627.3M631.0 460.8H633.3M632.5 460.8H634.8M634.0 460.8H636.3M635.5 460.8H637.8M656.9 491.2H659.7M673.4 523.2H675.7M681.3 512.0H683.7M710.8 491.2H713.2M712.4 491.2H714.8M722.1 500.8H724.5M728.7 496.0H731.0M740.7 489.6H743.5M749.1 467.2H751.4M750.6 467.2H753.0M755.4 459.2H757.8M766.6 478.4H768.9M769.6 476.8H771.9M788.9 480.0H791.3M792.0 481.6H794.3M799.7 480.0H802.5M806.4 481.6H808.8M808.0 481.6H810.4M819.2 480.0H821.6M836.1 486.4H838.6M841.0 478.4H843.3M871.2 478.4H873.7M881.4 478.4H883.8M883.0 478.4H885.4M892.6 481.6H895.0M900.7 481.6H903.2M902.4 481.6H904.8M905.7 483.2H908.1M907.3 483.2H909.9M917.6 473.6H920.1M919.3 473.6H921.7M938.1 472.0H940.5M939.7 472.0H942.0M942.9 472.0H945.4M956.2 462.4H958.5M957.7 462.4H960.0M960.8 464.0H963.2M970.5 468.8H973.0M973.8 468.8H976.3M977.1 465.6H979.6M982.1 467.2H984.6M983.8 467.2H986.2M990.3 462.4H992.7M995.1 460.8H997.6M998.5 459.2H1001.0M1000.2 459.2H1002.7M1013.0 464.0H1015.4M1016.2 467.2H1018.6M1031.8 464.0H1034.2M1033.4 464.0H1035.8M1051.9 459.2H1054.4M1066.5 444.8H1068.9M1068.1 444.8H1070.5M1078.0 443.2H1080.5M1081.4 441.6H1083.9M1083.1 441.6H1085.6M1086.5 444.8H1088.9M1094.8 443.2H1097.1M1108.7 432.0H1111.1M1118.3 440.0H1120.7M1119.9 440.0H1122.3M1123.1 441.6H1125.5M1126.2 441.6H1128.5M1142.2 440.0H1144.6M1143.8 440.0H1146.2M1145.4 440.0H1147.8M1153.4 440.0H1155.8M1176.5 446.4H1178.9M1181.3 449.6H1183.7M1182.9 449.6H1185.3M1188.0 446.4H1190.5M1189.7 446.4H1192.5M1201.3 449.6H1203.8M1203.0 449.6H1205.4M1207.9 449.6H1210.4M1214.1 446.4H1216.4M1215.6 446.4H1218.0M1218.8 448.0H1221.2M1222.0 452.8H1224.4M1233.0 446.4H1235.3M1236.0 448.0H1238.3M1252.5 476.8H1254.8M1279.0 491.2H1281.4M1283.8 486.4H1286.2M1293.4 472.0H1295.8M1303.3 462.4H1305.8M1372.1 457.6H1374.6M1385.9 470.4H1388.3M1419.0 488.0H1421.4M1448.5 488.0H1450.9M1459.7 489.6H1462.1M1461.3 489.6H1463.7M1484.5 489.6H1486.9M1487.8 491.2H1490.2M1496.0 497.6H1498.3M1507.4 499.2H1509.8M1514.0 497.6H1516.5M1515.7 497.6H1518.2M1528.2 499.2H1530.5M1531.1 497.6H1533.4M1532.6 497.6H1535.2M1539.5 496.0H1542.0M1561.0 484.8H1563.4M1567.5 486.4H1570.0M1581.6 496.0H1584.1M1583.3 496.0H1585.8M1586.6 494.4H1589.1M1595.1 500.8H1597.3M1596.5 500.8H1598.7M1605.3 513.6H1607.8M1627.3 518.4H1629.8M1632.4 515.2H1634.9M1635.8 516.8H1638.3M1647.7 513.6H1650.2M1654.4 515.2H1656.9M1676.5 497.6H1678.8M1678.0 497.6H1680.3M1681.1 500.8H1683.4M1688.7 499.2H1691.0M1691.7 496.0H1694.2M1693.4 496.0H1695.9M1703.6 497.6H1706.1M1707.0 499.2H1709.5M1708.7 499.2H1711.2M1723.9 494.4H1726.4M1727.3 492.8H1729.8M1737.5 484.8H1740.0M1747.7 486.4H1750.2M1756.1 481.6H1758.6M1757.8 481.6H1760.3M1796.8 459.2H1799.3M1801.9 459.2H1804.4M1807.0 459.2H1809.5M1810.4 457.6H1812.9M1812.1 457.6H1814.6M1813.8 457.6H1816.3M1822.2 448.0H1824.7M1827.3 446.4H1829.8M1829.0 446.4H1831.5M1830.7 446.4H1833.2M1846.0 427.2H1848.5M1851.1 427.2H1853.6M1852.8 427.2H1855.2M1854.4 427.2H1856.9M1856.1 427.2H1858.6M1857.8 427.2H1860.3M1859.5 427.2H1862.0M1861.2 427.2H1863.7M1864.6 424.0H1867.1M1866.3 424.0H1868.8M1868.0 424.0H1870.5M1869.7 424.0H1872.2M1881.6 427.2H1884.1M1883.3 427.2H1885.8M1888.3 428.8H1890.8M1890.0 428.8H1892.5M1891.7 428.8H1894.2M1898.5 420.8H1901.0" stroke="#ece58c" stroke-width="2.3" fill="none"/>
<path d="M15.9 710.4L17.6 708.8M43.9 702.4L45.6 700.8M82.0 651.2L83.4 643.2M83.4 643.2L84.8 633.6M86.2 646.4L87.6 620.8M87.6 620.8L89.0 595.2M89.0 595.2L90.5 592.0M94.7 604.8L96.1 603.2M96.1 603.2L97.5 601.6M97.5 601.6L98.9 598.4M98.9 598.4L100.3 593.6M107.4 632.0L108.8 628.8M108.8 628.8L110.2 614.4M110.2 614.4L111.6 612.8M111.6 612.8L113.0 604.8M117.3 616.0L118.7 612.8M121.5 612.8L122.9 606.4M124.3 609.6L125.7 608.0M127.1 608.0L128.6 603.2M135.6 624.0L137.0 614.4M137.0 614.4L138.4 608.0M138.4 608.0L139.9 604.8M139.9 604.8L141.5 601.6M144.9 609.6L146.6 604.8M150.0 611.2L151.7 604.8M156.8 616.0L158.5 614.4M158.5 614.4L160.2 609.6M160.2 609.6L161.9 606.4M163.6 611.2L165.3 606.4M167.0 617.6L168.6 614.4M173.7 624.0L175.1 622.4M176.5 622.4L178.0 619.2M178.0 619.2L179.4 612.8M182.8 628.8L184.5 627.2M186.1 628.8L187.8 624.0M189.5 628.8L191.1 625.6M191.1 625.6L192.8 624.0M194.4 632.0L196.1 627.2M197.7 627.2L199.1 612.8M199.1 612.8L200.5 598.4M200.5 598.4L202.0 587.2M203.4 588.8L204.8 582.4M204.8 582.4L206.2 580.8M209.0 584.0L210.4 580.8M214.7 598.4L216.1 595.2M217.5 603.2L218.9 600.0M218.9 600.0L220.3 588.8M220.3 588.8L221.7 584.0M221.7 584.0L223.1 579.2M228.8 600.0L230.4 593.6M230.4 593.6L232.1 585.6M232.1 585.6L233.7 584.0M237.0 585.6L238.7 580.8M238.7 580.8L240.3 576.0M243.7 577.6L245.4 572.8M247.1 576.0L248.8 574.4M248.8 574.4L250.5 571.2M250.5 571.2L252.2 568.0M253.9 569.6L255.6 566.4M255.6 566.4L257.3 558.4M259.0 558.4L260.7 553.6M262.4 553.6L264.1 548.8M264.1 548.8L265.5 544.0M265.5 544.0L266.9 542.4M266.9 542.4L268.3 537.6M268.3 537.6L269.7 532.8M275.3 553.6L276.8 550.4M283.8 563.2L285.2 558.4M285.2 558.4L287.0 552.0M287.0 552.0L288.8 547.2M288.8 547.2L290.5 544.0M290.5 544.0L292.3 531.2M292.3 531.2L293.7 523.2M293.7 523.2L295.1 521.6M296.5 521.6L297.9 520.0M297.9 520.0L299.3 513.6M302.2 516.8L303.6 515.2M306.4 526.4L308.1 521.6M309.8 524.8L311.5 521.6M311.5 521.6L313.2 518.4M313.2 518.4L314.9 513.6M316.3 513.6L317.7 510.4M317.7 510.4L319.1 507.2M327.0 520.0L328.6 518.4M331.8 521.6L333.6 515.2M335.3 515.2L337.1 508.8M337.1 508.8L338.9 502.4M342.2 507.2L343.8 504.0M348.7 507.2L350.2 484.8M350.2 484.8L351.6 468.8M351.6 468.8L353.3 465.6M360.0 470.4L361.7 467.2M363.4 467.2L365.1 465.6M365.1 465.6L366.8 460.8M366.8 460.8L368.5 459.2M371.9 465.6L373.6 464.0M378.6 470.4L380.2 460.8M380.2 460.8L381.8 456.0M383.4 460.8L385.0 457.6M388.3 459.2L389.7 448.0M389.7 448.0L391.1 444.8M392.5 444.8L393.9 440.0M402.5 448.0L404.0 444.8M404.0 444.8L405.5 443.2M405.5 443.2L407.0 441.6M410.0 441.6L411.5 435.2M414.5 438.4L416.0 432.0M416.0 432.0L417.4 428.8M417.4 428.8L418.9 424.0M439.9 443.2L441.4 438.4M442.9 443.2L444.4 440.0M444.4 440.0L445.9 438.4M447.4 441.6L448.9 440.0M451.8 444.8L453.4 443.2M465.8 451.2L467.8 444.8M467.8 444.8L469.8 440.0M478.8 460.8L480.3 459.2M483.7 468.8L485.3 465.6M485.3 465.6L486.9 464.0M491.7 465.6L493.3 462.4M493.3 462.4L494.9 459.2M496.5 465.6L498.1 464.0M499.7 465.6L501.3 462.4M501.3 462.4L502.9 460.8M504.5 464.0L506.1 459.2M506.1 459.2L507.7 457.6M510.7 460.8L512.2 457.6M515.3 462.4L516.8 459.2M521.6 467.2L523.2 460.8M523.2 460.8L524.8 459.2M526.4 459.2L528.0 457.6M528.0 457.6L529.6 456.0M540.6 467.2L542.1 462.4M542.1 462.4L543.6 460.8M548.6 465.6L550.2 464.0M550.2 464.0L551.9 462.4M551.9 462.4L553.5 460.8M553.5 460.8L555.0 459.2M555.0 459.2L556.5 456.0M556.5 456.0L558.0 454.4M558.0 454.4L559.5 452.8M564.0 456.0L565.5 452.8M573.5 462.4L575.1 460.8M578.5 462.4L580.1 460.8M580.1 460.8L581.8 459.2M583.4 462.4L585.0 460.8M598.1 473.6L599.7 472.0M603.0 472.0L604.6 468.8M606.2 472.0L607.8 468.8M609.4 468.8L611.0 465.6M611.0 465.6L612.7 462.4M612.7 462.4L614.4 460.8M614.4 460.8L616.0 459.2M617.7 462.4L619.3 460.8M620.8 460.8L622.3 459.2M622.3 459.2L623.8 456.0M626.8 456.0L628.3 454.4M644.8 504.0L646.3 502.4M646.3 502.4L647.8 500.8M649.3 508.8L650.7 505.6M650.7 505.6L652.2 500.8M652.2 500.8L653.7 497.6M653.7 497.6L655.2 492.8M655.2 492.8L657.2 491.2M672.2 528.0L673.7 523.2M675.2 523.2L676.8 516.8M676.8 516.8L678.4 512.0M680.0 513.6L681.6 512.0M683.2 512.0L684.8 507.2M686.5 510.4L688.1 508.8M688.1 508.8L689.8 507.2M693.1 510.4L694.8 505.6M694.8 505.6L696.4 500.8M696.4 500.8L698.1 499.2M698.1 499.2L699.8 497.6M701.4 499.2L703.1 497.6M703.1 497.6L704.7 496.0M704.7 496.0L706.3 494.4M706.3 494.4L707.9 492.8M709.5 496.0L711.1 491.2M717.4 497.6L719.0 496.0M724.0 500.8L725.7 496.0M725.7 496.0L727.4 494.4M735.0 508.8L737.0 499.2M737.0 499.2L739.0 491.2M739.0 491.2L741.0 489.6M743.0 489.6L744.6 483.2M744.6 483.2L746.2 475.2M746.2 475.2L747.8 468.8M747.8 468.8L749.4 467.2M752.5 467.2L754.1 462.4M754.1 462.4L755.7 459.2M757.3 459.2L758.9 457.6M768.4 478.4L769.9 476.8M771.4 476.8L772.9 473.6M772.9 473.6L774.9 467.2M774.9 467.2L776.9 460.8M784.4 478.4L786.0 475.2M796.8 488.0L798.4 481.6M798.4 481.6L800.0 480.0M803.6 481.6L805.2 480.0M809.9 481.6L811.5 480.0M814.7 483.2L816.3 480.0M817.9 481.6L819.5 480.0M821.1 480.0L822.7 476.8M832.9 494.4L834.6 491.2M834.6 491.2L836.4 486.4M842.8 478.4L844.3 476.8M861.8 486.4L863.4 484.8M865.0 486.4L866.6 483.2M868.2 480.0L869.8 476.8M874.9 480.0L876.6 478.4M884.9 478.4L886.5 476.8M888.1 478.4L889.7 476.8M894.5 481.6L896.1 480.0M899.3 483.2L901.0 481.6M909.4 483.2L911.1 478.4M916.2 475.2L917.9 473.6M922.8 476.8L924.4 475.2M924.4 475.2L926.0 472.0M926.0 472.0L927.6 470.4M927.6 470.4L929.1 468.8M930.6 467.2L932.1 465.6M949.9 470.4L951.5 468.8M951.5 468.8L953.5 457.6M967.5 472.0L969.1 470.4M975.8 468.8L977.4 465.6M979.1 465.6L980.8 464.0M992.2 462.4L993.8 460.8M997.1 460.8L998.8 459.2M1003.9 460.8L1005.6 457.6M1018.1 467.2L1019.7 465.6M1019.7 465.6L1021.3 464.0M1022.8 467.2L1024.3 465.6M1024.3 465.6L1025.8 464.0M1035.3 464.0L1037.0 462.4M1038.7 464.0L1040.4 462.4M1040.4 462.4L1042.1 459.2M1042.1 459.2L1043.8 456.0M1045.5 460.8L1047.2 457.6M1050.6 464.0L1052.2 459.2M1055.5 459.2L1057.2 456.0M1057.2 456.0L1058.7 452.8M1061.7 454.4L1063.2 451.2M1063.2 451.2L1065.2 444.8M1071.6 448.0L1073.2 446.4M1073.2 446.4L1074.9 443.2M1076.6 444.8L1078.3 443.2M1080.0 443.2L1081.7 441.6M1093.4 446.4L1095.1 443.2M1098.1 444.8L1099.6 443.2M1102.7 441.6L1104.3 438.4M1105.9 435.2L1107.4 433.6M1107.4 433.6L1109.0 432.0M1129.5 441.6L1131.0 438.4M1136.0 446.4L1137.6 444.8M1137.6 444.8L1139.3 440.0M1140.9 443.2L1142.5 440.0M1147.3 440.0L1148.9 436.8M1160.1 448.0L1161.7 446.4M1164.9 449.6L1166.6 448.0M1168.3 446.4L1170.0 444.8M1175.1 448.0L1176.8 446.4M1184.8 449.6L1186.5 448.0M1206.6 451.2L1208.2 449.6M1209.9 449.6L1211.4 448.0M1212.9 451.2L1214.4 446.4M1227.1 449.6L1228.7 448.0M1228.7 448.0L1230.2 446.4M1257.8 478.4L1259.8 473.6M1264.7 480.0L1266.4 478.4M1268.1 483.2L1269.7 480.0M1272.9 488.0L1274.5 484.8M1282.5 489.6L1284.1 486.4M1287.3 481.6L1288.9 478.4M1292.1 473.6L1293.7 472.0M1295.3 472.0L1297.0 470.4M1297.0 470.4L1298.6 467.2M1298.6 467.2L1300.3 464.0M1311.9 468.8L1313.6 467.2M1313.6 467.2L1315.2 464.0M1315.2 464.0L1316.8 460.8M1316.8 460.8L1318.4 457.6M1318.4 457.6L1320.0 452.8M1339.5 483.2L1341.1 481.6M1344.3 480.0L1345.9 478.4M1345.9 478.4L1347.5 473.6M1350.7 470.4L1352.3 465.6M1353.9 464.0L1355.5 460.8M1369.1 457.6L1370.8 456.0M1403.3 492.8L1404.9 491.2M1406.5 492.8L1408.1 489.6M1408.1 489.6L1409.7 488.0M1409.7 488.0L1411.3 484.8M1411.3 484.8L1412.9 483.2M1420.9 488.0L1422.5 486.4M1425.7 489.6L1427.3 488.0M1434.8 497.6L1436.4 496.0M1441.2 497.6L1442.7 496.0M1442.7 496.0L1444.2 491.2M1467.9 491.2L1469.5 489.6M1476.7 496.0L1478.3 494.4M1479.9 494.4L1481.5 492.8M1481.5 492.8L1483.1 489.6M1489.7 491.2L1491.4 489.6M1511.0 500.8L1512.7 499.2M1512.7 499.2L1514.3 497.6M1517.7 497.6L1519.3 496.0M1527.0 500.8L1528.5 499.2M1536.4 499.2L1538.1 497.6M1538.1 497.6L1539.8 496.0M1541.5 496.0L1543.2 494.4M1544.9 496.0L1546.6 494.4M1546.6 494.4L1548.2 492.8M1549.9 496.0L1551.6 494.4M1554.9 492.8L1556.5 491.2M1556.5 491.2L1558.1 488.0M1559.7 486.4L1561.3 484.8M1615.8 523.2L1617.5 521.6M1617.5 521.6L1619.2 518.4M1619.2 518.4L1620.8 515.2M1637.8 516.8L1639.5 513.6M1656.4 515.2L1658.1 512.0M1659.8 513.6L1661.5 512.0M1663.2 508.8L1664.9 507.2M1666.6 507.2L1668.3 504.0M1668.3 504.0L1670.0 502.4M1671.7 502.4L1673.4 500.8M1690.5 499.2L1692.0 496.0M1700.5 497.6L1702.2 496.0M1712.4 499.2L1714.1 497.6M1717.5 497.6L1719.2 496.0M1729.3 492.8L1731.0 491.2M1731.0 491.2L1732.7 489.6M1732.7 489.6L1734.4 486.4M1759.8 481.6L1761.5 478.4M1764.9 480.0L1766.6 476.8M1768.3 476.8L1770.0 473.6M1771.7 470.4L1773.4 468.8M1773.4 468.8L1775.1 464.0M1775.1 464.0L1776.8 462.4M1776.8 462.4L1778.5 457.6M1788.6 462.4L1790.3 460.8M1790.3 460.8L1792.0 459.2M1809.0 459.2L1810.7 457.6M1819.2 454.4L1820.8 451.2M1820.8 451.2L1822.5 448.0M1825.9 449.6L1827.6 446.4M1836.1 449.6L1837.8 446.4M1837.8 446.4L1839.5 443.2M1839.5 443.2L1840.3 424.0M1844.6 430.4L1846.3 427.2M1849.7 428.8L1851.4 427.2M1863.2 427.2L1864.9 424.0M1875.1 428.8L1876.8 427.2M1876.8 427.2L1878.5 424.0M1885.3 427.2L1886.9 425.6M1893.7 428.8L1895.4 424.0M1895.4 424.0L1897.1 422.4M1897.1 422.4L1898.8 420.8" stroke="#f00000" stroke-width="2.3" fill="none"/>
<path d="M55.9 700.8L57.5 704.0M57.5 704.0L59.2 705.6M80.6 649.6L82.0 651.2M84.8 633.6L86.2 646.4M90.5 592.0L91.9 598.4M91.9 598.4L93.3 603.2M93.3 603.2L94.7 604.8M100.3 593.6L101.7 603.2M101.7 603.2L103.2 620.8M103.2 620.8L104.6 627.2M104.6 627.2L106.0 628.8M106.0 628.8L107.4 632.0M113.0 604.8L114.4 608.0M114.4 608.0L115.9 611.2M115.9 611.2L117.3 616.0M122.9 606.4L124.3 609.6M128.6 603.2L130.0 606.4M130.0 606.4L131.4 609.6M131.4 609.6L132.8 616.0M132.8 616.0L134.2 617.6M134.2 617.6L135.6 624.0M141.5 601.6L143.2 608.0M143.2 608.0L144.9 609.6M146.6 604.8L148.3 606.4M148.3 606.4L150.0 611.2M151.7 604.8L153.4 608.0M155.1 608.0L156.8 616.0M161.9 606.4L163.6 611.2M165.3 606.4L167.0 617.6M168.6 614.4L170.3 617.6M170.3 617.6L172.0 620.8M172.0 620.8L173.7 624.0M179.4 612.8L181.1 620.8M181.1 620.8L182.8 628.8M184.5 627.2L186.1 628.8M187.8 624.0L189.5 628.8M192.8 624.0L194.4 632.0M202.0 587.2L203.4 588.8M207.6 580.8L209.0 584.0M210.4 580.8L211.8 590.4M213.2 590.4L214.7 598.4M216.1 595.2L217.5 603.2M223.1 579.2L224.5 584.0M224.5 584.0L225.9 585.6M225.9 585.6L227.4 592.0M227.4 592.0L228.8 600.0M233.7 584.0L235.4 585.6M242.0 576.0L243.7 577.6M245.4 572.8L247.1 576.0M252.2 568.0L253.9 569.6M269.7 532.8L271.1 537.6M271.1 537.6L272.5 545.6M272.5 545.6L273.9 550.4M273.9 550.4L275.3 553.6M281.0 550.4L282.4 555.2M282.4 555.2L283.8 563.2M300.8 513.6L302.2 516.8M303.6 515.2L305.0 520.0M305.0 520.0L306.4 526.4M308.1 521.6L309.8 524.8M320.5 507.2L322.1 508.8M322.1 508.8L323.7 512.0M323.7 512.0L325.4 515.2M325.4 515.2L327.0 520.0M328.6 518.4L330.2 520.0M330.2 520.0L331.8 521.6M338.9 502.4L340.5 507.2M343.8 504.0L345.5 505.6M345.5 505.6L347.1 507.2M355.0 465.6L356.6 467.2M358.3 467.2L360.0 470.4M368.5 459.2L370.2 462.4M370.2 462.4L371.9 465.6M373.6 464.0L375.3 470.4M381.8 456.0L383.4 460.8M386.7 457.6L388.3 459.2M395.7 440.0L397.4 443.2M399.2 443.2L401.0 446.4M401.0 446.4L402.5 448.0M411.5 435.2L413.0 438.4M424.9 424.0L426.4 425.6M426.4 425.6L427.9 427.2M427.9 427.2L429.4 428.8M429.4 428.8L430.9 430.4M430.9 430.4L432.4 435.2M432.4 435.2L433.9 436.8M435.4 436.8L436.9 440.0M438.4 440.0L439.9 443.2M441.4 438.4L442.9 443.2M445.9 438.4L447.4 441.6M450.3 440.0L451.8 444.8M453.4 443.2L455.0 444.8M456.6 444.8L458.2 446.4M459.8 446.4L461.3 448.0M462.8 448.0L464.3 449.6M464.3 449.6L465.8 451.2M469.8 440.0L471.3 446.4M471.3 446.4L472.8 448.0M472.8 448.0L474.3 451.2M474.3 451.2L475.8 454.4M475.8 454.4L477.3 456.0M477.3 456.0L478.8 460.8M481.8 459.2L483.7 468.8M488.5 464.0L490.1 465.6M494.9 459.2L496.5 465.6M498.1 464.0L499.7 465.6M502.9 460.8L504.5 464.0M507.7 457.6L509.2 459.2M509.2 459.2L510.7 460.8M512.2 457.6L513.7 459.2M513.7 459.2L515.3 462.4M516.8 459.2L518.4 460.8M518.4 460.8L520.0 464.0M520.0 464.0L521.6 467.2M529.6 456.0L531.2 457.6M531.2 457.6L532.8 460.8M534.4 460.8L536.0 464.0M536.0 464.0L537.6 467.2M543.6 460.8L545.2 462.4M545.2 462.4L546.9 464.0M546.9 464.0L548.6 465.6M559.5 452.8L561.0 454.4M561.0 454.4L562.5 456.0M565.5 452.8L567.1 454.4M567.1 454.4L568.7 456.0M568.7 456.0L570.3 459.2M570.3 459.2L571.9 460.8M571.9 460.8L573.5 462.4M575.1 460.8L576.8 462.4M581.8 459.2L583.4 462.4M585.0 460.8L586.6 464.0M589.8 464.0L591.4 465.6M594.7 465.6L596.4 470.4M596.4 470.4L598.1 473.6M604.6 468.8L606.2 472.0M616.0 459.2L617.7 462.4M628.3 454.4L629.8 456.0M629.8 456.0L631.3 460.8M637.3 460.8L638.3 483.2M638.3 483.2L639.9 486.4M639.9 486.4L641.6 492.8M641.6 492.8L643.3 499.2M643.3 499.2L644.8 504.0M647.8 500.8L649.3 508.8M659.2 491.2L661.2 497.6M661.2 497.6L663.2 505.6M663.2 505.6L664.7 512.0M664.7 512.0L666.2 515.2M666.2 515.2L667.7 520.0M667.7 520.0L669.2 524.8M669.2 524.8L670.7 526.4M670.7 526.4L672.2 528.0M678.4 512.0L680.0 513.6M684.8 507.2L686.5 510.4M689.8 507.2L691.5 508.8M691.5 508.8L693.1 510.4M699.8 497.6L701.4 499.2M707.9 492.8L709.5 496.0M714.3 491.2L715.9 496.0M715.9 496.0L717.4 497.6M719.0 496.0L720.7 497.6M720.7 497.6L722.4 500.8M727.4 494.4L729.0 496.0M730.5 496.0L732.0 497.6M732.0 497.6L733.5 502.4M733.5 502.4L735.0 508.8M758.9 457.6L760.5 460.8M760.5 460.8L762.1 465.6M762.1 465.6L763.7 468.8M763.7 468.8L765.3 473.6M765.3 473.6L766.9 478.4M776.9 460.8L778.4 465.6M778.4 465.6L779.9 467.2M779.9 467.2L781.4 470.4M781.4 470.4L782.9 475.2M782.9 475.2L784.4 478.4M786.0 475.2L787.6 476.8M787.6 476.8L789.2 480.0M790.8 480.0L792.3 481.6M793.8 481.6L795.3 484.8M795.3 484.8L796.8 488.0M802.0 480.0L803.6 481.6M805.2 480.0L806.7 481.6M811.5 480.0L813.1 481.6M813.1 481.6L814.7 483.2M816.3 480.0L817.9 481.6M822.7 476.8L824.3 480.0M824.3 480.0L825.9 483.2M825.9 483.2L827.6 484.8M827.6 484.8L829.4 488.0M829.4 488.0L831.1 489.6M847.4 476.8L849.0 478.4M849.0 478.4L850.6 480.0M855.4 483.2L857.0 484.8M858.6 481.6L860.2 484.8M860.2 484.8L861.8 486.4M863.4 484.8L865.0 486.4M869.8 476.8L871.5 478.4M873.2 478.4L874.9 480.0M889.7 476.8L891.3 481.6M896.1 480.0L897.7 481.6M897.7 481.6L899.3 483.2M904.3 481.6L906.0 483.2M911.1 478.4L912.8 481.6M921.2 473.6L922.8 476.8M933.6 464.0L935.2 468.8M955.0 459.2L956.5 462.4M959.5 462.4L961.1 464.0M965.9 468.8L967.5 472.0M980.8 464.0L982.4 467.2M1005.6 457.6L1007.3 459.2M1007.3 459.2L1008.8 460.8M1010.3 460.8L1011.8 462.4M1014.9 464.0L1016.5 467.2M1021.3 464.0L1022.8 467.2M1037.0 462.4L1038.7 464.0M1060.2 452.8L1061.7 454.4M1070.0 444.8L1071.6 448.0M1074.9 443.2L1076.6 444.8M1085.1 441.6L1086.8 444.8M1091.8 444.8L1093.4 446.4M1110.6 432.0L1112.2 433.6M1112.2 433.6L1113.8 435.2M1113.8 435.2L1115.4 438.4M1115.4 438.4L1117.0 440.0M1132.6 440.0L1134.3 443.2M1134.3 443.2L1136.0 446.4M1139.3 440.0L1140.9 443.2M1152.1 438.4L1153.7 440.0M1155.3 440.0L1156.9 443.2M1156.9 443.2L1158.5 444.8M1158.5 444.8L1160.1 448.0M1161.7 446.4L1163.3 448.0M1163.3 448.0L1164.9 449.6M1170.0 444.8L1171.7 446.4M1173.4 446.4L1175.1 448.0M1180.0 448.0L1181.6 449.6M1196.9 449.6L1198.4 451.2M1204.9 449.6L1206.6 451.2M1211.4 448.0L1212.9 451.2M1217.5 446.4L1219.1 448.0M1220.7 448.0L1222.3 452.8M1230.2 446.4L1231.8 448.0M1234.8 446.4L1236.3 448.0M1240.8 452.8L1242.3 456.0M1245.3 462.4L1246.8 465.6M1246.8 465.6L1248.3 470.4M1249.8 472.0L1251.3 475.2M1261.4 475.2L1263.1 478.4M1263.1 478.4L1264.7 480.0M1266.4 478.4L1268.1 483.2M1271.3 481.6L1272.9 488.0M1274.5 484.8L1276.1 489.6M1310.3 467.2L1311.9 468.8M1323.1 451.2L1324.6 454.4M1327.6 464.0L1329.2 465.6M1329.2 465.6L1330.7 468.8M1330.7 468.8L1332.3 472.0M1333.9 472.0L1335.5 473.6M1335.5 473.6L1337.5 476.8M1363.0 448.0L1364.4 449.6M1367.4 456.0L1369.1 457.6M1370.8 456.0L1372.4 457.6M1375.7 459.2L1377.4 462.4M1381.4 467.2L1383.0 468.8M1384.6 468.8L1386.2 470.4M1389.4 468.8L1390.9 470.4M1392.4 472.0L1393.9 473.6M1393.9 473.6L1395.4 476.8M1395.4 476.8L1397.3 481.6M1397.3 481.6L1399.3 484.8M1399.3 484.8L1401.3 489.6M1412.9 483.2L1414.5 484.8M1417.7 486.4L1419.3 488.0M1422.5 486.4L1424.1 488.0M1428.8 491.2L1430.2 494.4M1431.7 494.4L1433.2 497.6M1455.2 488.0L1456.8 489.6M1464.7 486.4L1466.3 489.6M1466.3 489.6L1467.9 491.2M1469.5 489.6L1471.1 491.2M1473.1 494.4L1475.1 497.6M1486.4 489.6L1488.1 491.2M1493.1 491.2L1494.7 494.4M1494.7 494.4L1496.3 497.6M1497.8 497.6L1499.4 500.8M1521.0 494.4L1522.5 496.0M1522.5 496.0L1524.0 497.6M1524.0 497.6L1525.5 499.2M1525.5 499.2L1527.0 500.8M1543.2 494.4L1544.9 496.0M1548.2 492.8L1549.9 496.0M1562.9 484.8L1564.5 486.4M1571.2 488.0L1572.8 489.6M1578.2 492.8L1580.0 494.4M1580.0 494.4L1581.9 496.0M1590.3 496.0L1592.0 497.6M1593.7 497.6L1595.4 500.8M1602.6 508.8L1603.9 512.0M1603.9 512.0L1605.6 513.6M1607.3 513.6L1609.0 515.2M1609.0 515.2L1610.7 520.0M1610.7 520.0L1612.4 521.6M1624.2 516.8L1625.9 518.4M1634.4 515.2L1636.1 516.8M1646.3 512.0L1648.0 513.6M1651.4 513.6L1653.1 515.2M1679.8 497.6L1681.4 500.8M1695.4 496.0L1697.1 497.6M1698.8 496.0L1700.5 497.6M1705.6 497.6L1707.3 499.2M1734.4 486.4L1736.1 488.0M1742.9 481.6L1744.6 483.2M1761.5 478.4L1763.2 480.0M1781.9 456.0L1783.6 459.2M1824.2 448.0L1825.9 449.6M1832.7 446.4L1834.4 448.0M1834.4 448.0L1836.1 449.6M1840.3 424.0L1841.8 425.6M1841.8 425.6L1843.2 428.8M1843.2 428.8L1844.6 430.4M1848.0 427.2L1849.7 428.8M1871.7 424.0L1873.4 427.2M1873.4 427.2L1875.1 428.8M1878.5 424.0L1880.2 425.6M1880.2 425.6L1881.9 427.2M1886.9 425.6L1888.6 428.8M1900.5 420.8L1902.2 422.4M1902.2 422.4L1903.9 432.0" stroke="#1a80ff" stroke-width="2.3" fill="none"/>
<text transform="translate(0 96.30) scale(0.66 1)" x="85.09 99.69 114.29 128.89 143.49 158.09 245.69 260.29 274.89 289.49 304.09 318.69 420.89 435.49 450.09 464.69 479.29 493.89 596.09 610.69 625.29 639.89 654.49 669.09 771.29 785.89 800.49 815.09 829.69 844.29" text-anchor="middle" font-family="Liberation Sans" font-size="20.3" fill="#e8e8e8">:06:00:22,75:22,75:22,75:22,75</text>
<g fill="none" stroke="#e8e8e8" stroke-width="1.45" stroke-linecap="square"><use href="#g26178" transform="translate(13.94 80.60) scale(1.062)"/><use href="#g21051" transform="translate(33.21 80.60) scale(1.062)"/><use href="#g22987" transform="translate(119.93 80.60) scale(1.062)"/><use href="#g20516" transform="translate(139.20 80.60) scale(1.062)"/><use href="#g39640" transform="translate(235.56 80.60) scale(1.062)"/><use href="#g20516" transform="translate(254.84 80.60) scale(1.062)"/><use href="#g23433" transform="translate(351.20 80.60) scale(1.062)"/><use href="#g20516" transform="translate(370.47 80.60) scale(1.062)"/><use href="#g32066" transform="translate(466.83 80.60) scale(1.062)"/><use href="#g20516" transform="translate(486.10 80.60) scale(1.062)"/></g>
<path d="M220.87 82.09V96.30M220.87 82.39L217.77 85.29" stroke="#e8e8e8" stroke-width="1.55" fill="none"/>
<path d="M336.51 82.09V96.30M336.51 82.39L333.41 85.29" stroke="#e8e8e8" stroke-width="1.55" fill="none"/>
<path d="M452.14 82.09V96.30M452.14 82.39L449.04 85.29" stroke="#e8e8e8" stroke-width="1.55" fill="none"/>
<path d="M567.77 82.09V96.30M567.77 82.39L564.67 85.29" stroke="#e8e8e8" stroke-width="1.55" fill="none"/>
<text transform="translate(0 424.40) scale(0.66 1)" x="85.09 99.69 114.29 128.89 143.49 158.09 245.69 260.29 274.89 289.49 304.09 406.29 420.89 435.49 450.09 464.69 566.89 581.49 596.09 610.69 625.29 727.49 742.09 756.69 771.29 785.89" text-anchor="middle" font-family="Liberation Sans" font-size="20.3" fill="#e8e8e8">:06:00:9,77:9,77:9,77:9,77</text>
<g fill="none" stroke="#e8e8e8" stroke-width="1.45" stroke-linecap="square"><use href="#g26178" transform="translate(13.94 408.70) scale(1.062)"/><use href="#g21051" transform="translate(33.21 408.70) scale(1.062)"/><use href="#g22987" transform="translate(119.93 408.70) scale(1.062)"/><use href="#g20516" transform="translate(139.20 408.70) scale(1.062)"/><use href="#g39640" transform="translate(225.93 408.70) scale(1.062)"/><use href="#g20516" transform="translate(245.20 408.70) scale(1.062)"/><use href="#g23433" transform="translate(331.92 408.70) scale(1.062)"/><use href="#g20516" transform="translate(351.20 408.70) scale(1.062)"/><use href="#g32066" transform="translate(437.92 408.70) scale(1.062)"/><use href="#g20516" transform="translate(457.19 408.70) scale(1.062)"/></g>
<path d="M211.24 410.19V424.40M211.24 410.49L208.14 413.39" stroke="#e8e8e8" stroke-width="1.55" fill="none"/>
<path d="M317.23 410.19V424.40M317.23 410.49L314.13 413.39" stroke="#e8e8e8" stroke-width="1.55" fill="none"/>
<path d="M423.23 410.19V424.40M423.23 410.49L420.13 413.39" stroke="#e8e8e8" stroke-width="1.55" fill="none"/>
<path d="M529.23 410.19V424.40M529.23 410.49L526.13 413.39" stroke="#e8e8e8" stroke-width="1.55" fill="none"/>
<text transform="translate(0 780.50) scale(0.66 1)" x="26.69 85.09 99.69 114.29 143.49 172.69 187.29 201.89 216.49 231.09 304.09 318.69 333.29 347.89 391.69 479.29 493.89 508.49 537.69 566.89 581.49 596.09 610.69 683.69 698.29 712.89 727.49 888.09 902.69 917.29 931.89 946.49 961.09 1004.89 1019.49 1034.09 1048.69 1063.29" text-anchor="middle" font-family="Liberation Sans" font-size="20.3" fill="#e8e8e8">[26/022,75.00][26/09,77.00]:06:002,980</text>
<g fill="none" stroke="#e8e8e8" stroke-width="1.45" stroke-linecap="square"><use href="#g37329" transform="translate(23.57 764.80) scale(1.062)"/><use href="#g215" transform="translate(168.11 764.80) scale(1.062)"/><use href="#g65293" transform="translate(235.56 764.80) scale(1.062)"/><use href="#g30333" transform="translate(264.47 764.80) scale(1.062)"/><use href="#g37329" transform="translate(283.74 764.80) scale(1.062)"/><use href="#g215" transform="translate(418.65 764.80) scale(1.062)"/><use href="#g32066" transform="translate(495.74 764.80) scale(1.062)"/><use href="#g20516" transform="translate(515.01 764.80) scale(1.062)"/><use href="#g26178" transform="translate(543.92 764.80) scale(1.062)"/><use href="#g21051" transform="translate(563.19 764.80) scale(1.062)"/></g>
<path d="M85.97 766.29V780.50M85.97 766.59L82.87 769.49" stroke="#e8e8e8" stroke-width="1.55" fill="none"/>
<path d="M163.06 766.29V780.50M163.06 766.59L159.96 769.49" stroke="#e8e8e8" stroke-width="1.55" fill="none"/>
<path d="M191.97 766.29V780.50M191.97 766.59L188.87 769.49" stroke="#e8e8e8" stroke-width="1.55" fill="none"/>
<path d="M346.14 766.29V780.50M346.14 766.59L343.04 769.49" stroke="#e8e8e8" stroke-width="1.55" fill="none"/>
<path d="M413.59 766.29V780.50M413.59 766.59L410.49 769.49" stroke="#e8e8e8" stroke-width="1.55" fill="none"/>
<path d="M442.50 766.29V780.50M442.50 766.59L439.40 769.49" stroke="#e8e8e8" stroke-width="1.55" fill="none"/>
<path d="M654.49 766.29V780.50M654.49 766.59L651.39 769.49" stroke="#e8e8e8" stroke-width="1.55" fill="none"/>
<rect x="1907.5" y="79.8" width="93" height="34.0" fill="#d4d4d4"/>
<text transform="translate(0 104.00) scale(0.8 1)" x="2412.52 2424.57 2436.61 2448.66 2460.70" text-anchor="middle" font-family="Liberation Sans" font-size="21" font-weight="bold" stroke="#000" stroke-width="0.62" fill="#000">22,75</text>
<path d="M1979.10 89.30V104.00M1979.10 89.60L1976.00 92.50" stroke="#000" stroke-width="2.7" fill="none"/>
<rect x="1907.5" y="447.2" width="93" height="34.5" fill="#d4d4d4"/>
<text transform="translate(0 471.65) scale(0.8 1)" x="2418.52 2430.57 2442.61 2454.66" text-anchor="middle" font-family="Liberation Sans" font-size="21" font-weight="bold" stroke="#000" stroke-width="0.62" fill="#000">9,77</text>
<path d="M1974.26 456.95V471.65M1974.26 457.25L1971.16 460.15" stroke="#000" stroke-width="2.7" fill="none"/>
<rect x="1907.5" y="838.9" width="93" height="33.60000000000002" fill="#d4d4d4"/>
<text transform="translate(0 862.90) scale(0.8 1)" x="2424.57 2436.61 2448.66 2460.70 2472.75" text-anchor="middle" font-family="Liberation Sans" font-size="21" font-weight="bold" stroke="#000" stroke-width="0.62" fill="#000">2,980</text>
<path d="M1930.92 848.20V862.90M1930.92 848.50L1927.82 851.40" stroke="#000" stroke-width="2.7" fill="none"/>
</svg></body></html>
